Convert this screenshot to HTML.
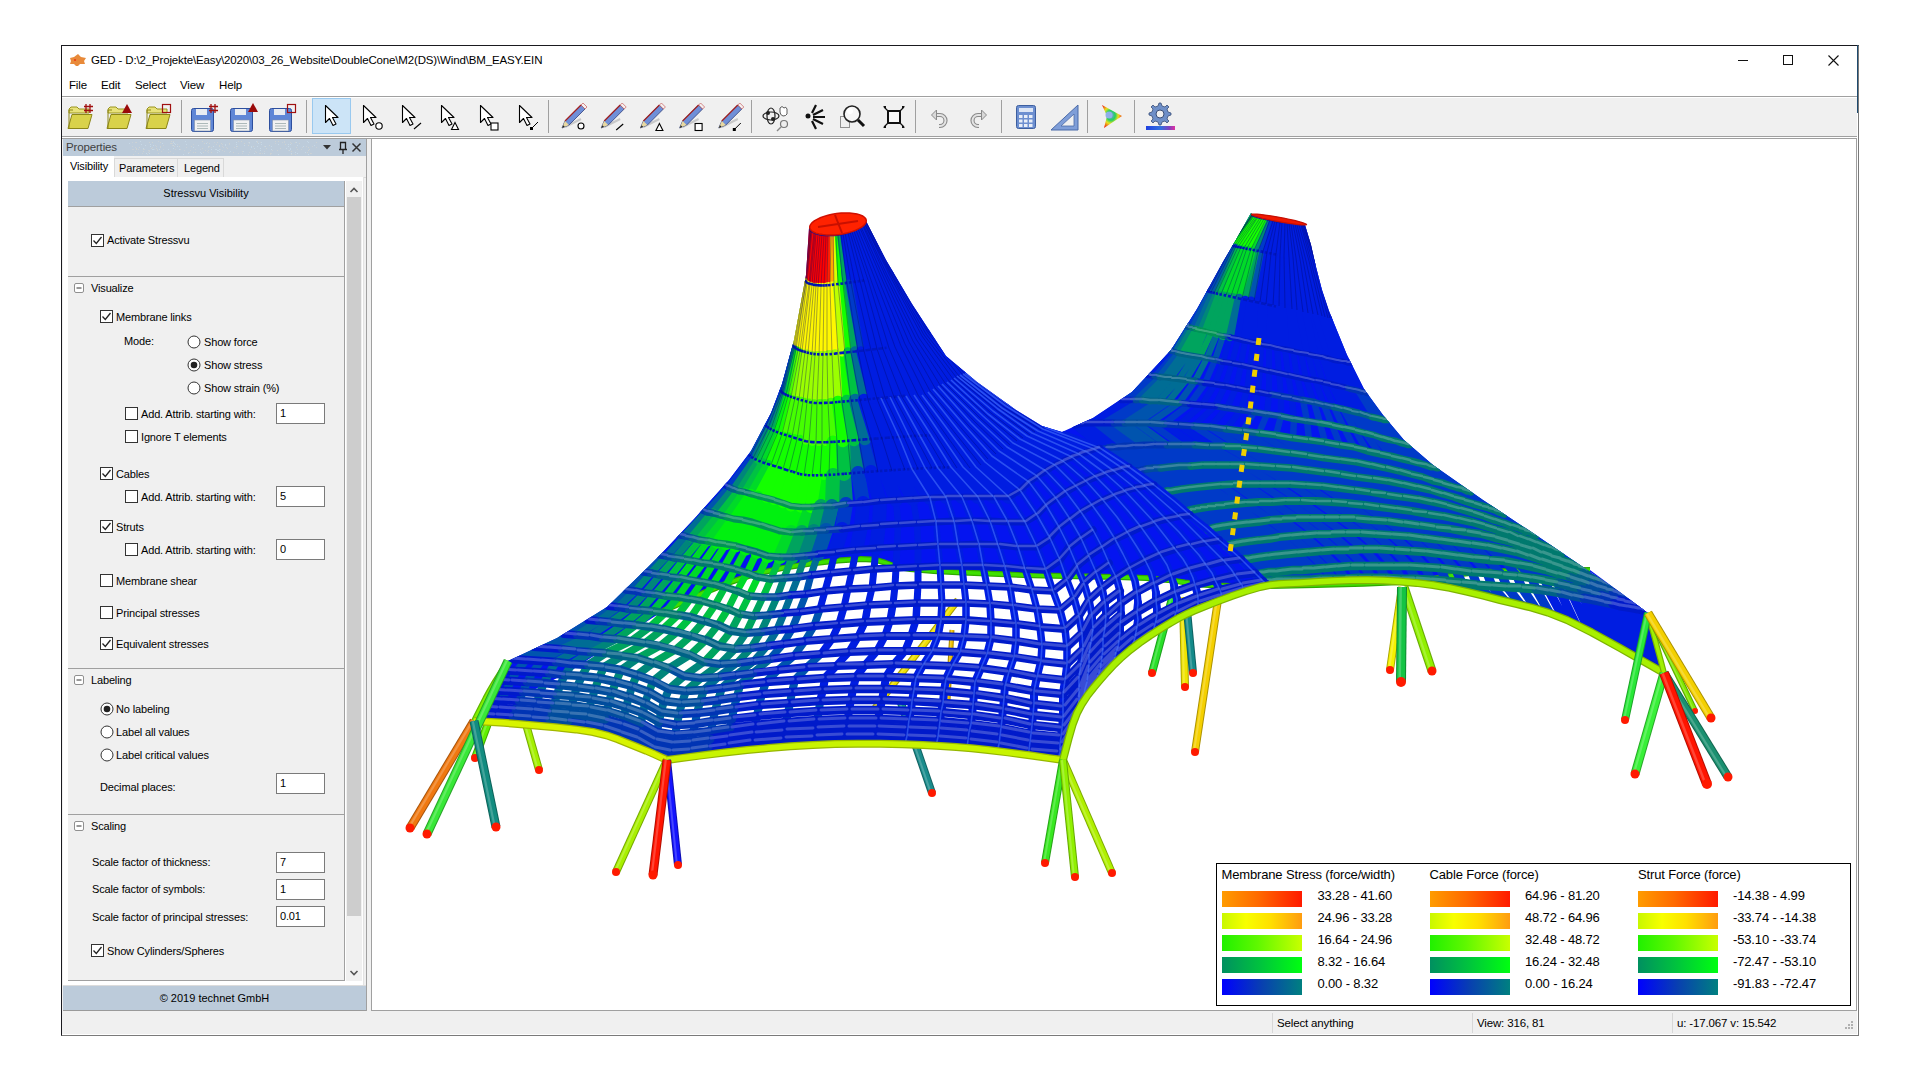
<!DOCTYPE html>
<html><head><meta charset="utf-8"><style>
html,body{margin:0;padding:0;width:1920px;height:1080px;overflow:hidden;background:#fff;font-family:"Liberation Sans",sans-serif;}
div{box-sizing:content-box}
</style></head><body>
<div style="position:relative;width:1920px;height:1080px;overflow:hidden">
<div style="position:absolute;left:61px;top:45px;width:1796px;height:989px;background:#fff;border:1px solid #1a1a1f;border-right-color:#7a7a7a;border-bottom-color:#7a7a7a"></div><div style="position:absolute;left:1857px;top:45px;width:1px;height:68px;background:#1e4a6e"></div><svg style="position:absolute;left:69px;top:53px" width="18" height="13"><path d="M1,5 l4,-1 l4,-3 l3,3 l5,1 l-2,3 l1,3 l-5,0 l-3,3 l-3,-3 l-4,0 l1,-3z" fill="#e88a3a"/><circle cx="6" cy="7" r="1" fill="#f03010"/></svg><div style="position:absolute;left:91px;top:53.2px;height:15.5px;line-height:15.5px;font-size:11.5px;color:#000;white-space:nowrap;letter-spacing:-0.15px;">GED - D:\2_Projekte\Easy\2020\03_26_Website\DoubleCone\M2(DS)\Wind\BM_EASY.EIN</div><svg style="position:absolute;left:1730px;top:50px" width="120" height="22"><path d="M8,10.5 h10" stroke="#111" stroke-width="1"/><rect x="53.5" y="5.5" width="9" height="9" fill="none" stroke="#111"/><path d="M98.5,5.5 l10,10 M108.5,5.5 l-10,10" stroke="#111" stroke-width="1.1"/></svg><div style="position:absolute;left:69px;top:78.2px;height:15.5px;line-height:15.5px;font-size:11.5px;color:#000;white-space:nowrap;letter-spacing:-0.15px;">File</div><div style="position:absolute;left:101px;top:78.2px;height:15.5px;line-height:15.5px;font-size:11.5px;color:#000;white-space:nowrap;letter-spacing:-0.15px;">Edit</div><div style="position:absolute;left:135px;top:78.2px;height:15.5px;line-height:15.5px;font-size:11.5px;color:#000;white-space:nowrap;letter-spacing:-0.15px;">Select</div><div style="position:absolute;left:180px;top:78.2px;height:15.5px;line-height:15.5px;font-size:11.5px;color:#000;white-space:nowrap;letter-spacing:-0.15px;">View</div><div style="position:absolute;left:219px;top:78.2px;height:15.5px;line-height:15.5px;font-size:11.5px;color:#000;white-space:nowrap;letter-spacing:-0.15px;">Help</div><div style="position:absolute;left:62px;top:96px;width:1795px;height:1px;background:#a0a0a0"></div><div style="position:absolute;left:62px;top:97px;width:1795px;height:1px;background:#fff"></div><div style="position:absolute;left:62px;top:98px;width:1795px;height:38px;background:#f0f0f0"></div><div style="position:absolute;left:62px;top:136px;width:1795px;height:1px;background:#a0a0a0"></div><div style="position:absolute;left:62px;top:138px;width:1795px;height:1px;background:#a0a0a0"></div><svg style="position:absolute;left:0;top:0" width="1200" height="140"><g transform="translate(68,0)"><path d="M1,109 l2,-2 h6 l2,2 h10 v4 h-20z" fill="#e8e27a" stroke="#9a9420" stroke-width="1"/><path d="M0,128.5 l4,-14 h20 l-4,14z" fill="#d9d24a" stroke="#8c8618" stroke-width="1"/><path d="M1,128 v-18 h4" fill="none" stroke="#8c8618" stroke-width="1"/><path d="M18,104 v9 M22,104 v9 M16,106.5 h9 M16,110.5 h9" stroke="#a01010" stroke-width="1.3" fill="none"/></g><g transform="translate(107,0)"><path d="M1,109 l2,-2 h6 l2,2 h10 v4 h-20z" fill="#e8e27a" stroke="#9a9420" stroke-width="1"/><path d="M0,128.5 l4,-14 h20 l-4,14z" fill="#d9d24a" stroke="#8c8618" stroke-width="1"/><path d="M1,128 v-18 h4" fill="none" stroke="#8c8618" stroke-width="1"/><path d="M15,113 l5,-9 l5,9z" fill="#9a0a0a"/></g><g transform="translate(146,0)"><path d="M1,109 l2,-2 h6 l2,2 h10 v4 h-20z" fill="#e8e27a" stroke="#9a9420" stroke-width="1"/><path d="M0,128.5 l4,-14 h20 l-4,14z" fill="#d9d24a" stroke="#8c8618" stroke-width="1"/><path d="M1,128 v-18 h4" fill="none" stroke="#8c8618" stroke-width="1"/><rect x="16.5" y="104.5" width="8" height="8" fill="none" stroke="#a01010" stroke-width="1.2"/></g><g transform="translate(191,0)"><rect x="0.5" y="108.5" width="22" height="23" rx="2" fill="#5f86d6" stroke="#2d4f9e"/><rect x="5" y="109" width="11" height="6" fill="#e8ecf2"/><rect x="3.5" y="120" width="16" height="11" fill="#f2f2f2" stroke="#8090a8" stroke-width="0.6"/><path d="M6,123.5 h11 M6,126 h11 M6,128.5 h11" stroke="#9aa" stroke-width="0.8"/><path d="M20,104 v9 M24,104 v9 M18,106.5 h9 M18,110.5 h9" stroke="#a01010" stroke-width="1.3" fill="none"/></g><g transform="translate(230,0)"><rect x="0.5" y="108.5" width="22" height="23" rx="2" fill="#5f86d6" stroke="#2d4f9e"/><rect x="5" y="109" width="11" height="6" fill="#e8ecf2"/><rect x="3.5" y="120" width="16" height="11" fill="#f2f2f2" stroke="#8090a8" stroke-width="0.6"/><path d="M6,123.5 h11 M6,126 h11 M6,128.5 h11" stroke="#9aa" stroke-width="0.8"/><path d="M18,112 l5,-9 l5,9z" fill="#9a0a0a"/></g><g transform="translate(269,0)"><rect x="0.5" y="108.5" width="22" height="23" rx="2" fill="#5f86d6" stroke="#2d4f9e"/><rect x="5" y="109" width="11" height="6" fill="#e8ecf2"/><rect x="3.5" y="120" width="16" height="11" fill="#f2f2f2" stroke="#8090a8" stroke-width="0.6"/><path d="M6,123.5 h11 M6,126 h11 M6,128.5 h11" stroke="#9aa" stroke-width="0.8"/><rect x="18.5" y="104.5" width="8" height="8" fill="none" stroke="#a01010" stroke-width="1.2"/></g><line x1="181.5" y1="100" x2="181.5" y2="133" stroke="#a0a0a0" stroke-width="1"/><line x1="306.5" y1="100" x2="306.5" y2="133" stroke="#a0a0a0" stroke-width="1"/><line x1="548.5" y1="100" x2="548.5" y2="133" stroke="#a0a0a0" stroke-width="1"/><line x1="751.5" y1="100" x2="751.5" y2="133" stroke="#a0a0a0" stroke-width="1"/><line x1="915.5" y1="100" x2="915.5" y2="133" stroke="#a0a0a0" stroke-width="1"/><line x1="1001.5" y1="100" x2="1001.5" y2="133" stroke="#a0a0a0" stroke-width="1"/><line x1="1087.5" y1="100" x2="1087.5" y2="133" stroke="#a0a0a0" stroke-width="1"/><line x1="1134.5" y1="100" x2="1134.5" y2="133" stroke="#a0a0a0" stroke-width="1"/><rect x="312.5" y="98.5" width="38" height="35" fill="#cce4f7" stroke="#99c9ef"/><g transform="translate(325,105)"><path d="M0.5,0.5 v17 l4,-4 l3.5,7 l3,-1.5 l-3.5,-6.5 h5.5z" fill="#fff" stroke="#000" stroke-width="1.1" stroke-linejoin="round"/></g><g transform="translate(363,105)"><path d="M0.5,0.5 v17 l4,-4 l3.5,7 l3,-1.5 l-3.5,-6.5 h5.5z" fill="#fff" stroke="#000" stroke-width="1.1" stroke-linejoin="round"/><circle cx="16" cy="21" r="3.2" fill="#fff" stroke="#000" stroke-width="1.1"/></g><g transform="translate(402,105)"><path d="M0.5,0.5 v17 l4,-4 l3.5,7 l3,-1.5 l-3.5,-6.5 h5.5z" fill="#fff" stroke="#000" stroke-width="1.1" stroke-linejoin="round"/><path d="M12,24 l7,-6" stroke="#000" stroke-width="1.1"/></g><g transform="translate(441,105)"><path d="M0.5,0.5 v17 l4,-4 l3.5,7 l3,-1.5 l-3.5,-6.5 h5.5z" fill="#fff" stroke="#000" stroke-width="1.1" stroke-linejoin="round"/><path d="M10.5,24.5 l3.5,-7 l3.5,7z" fill="#fff" stroke="#000" stroke-width="1.1"/></g><g transform="translate(480,105)"><path d="M0.5,0.5 v17 l4,-4 l3.5,7 l3,-1.5 l-3.5,-6.5 h5.5z" fill="#fff" stroke="#000" stroke-width="1.1" stroke-linejoin="round"/><rect x="11" y="18" width="7" height="7" fill="#fff" stroke="#000" stroke-width="1.1"/></g><g transform="translate(519,105)"><path d="M0.5,0.5 v17 l4,-4 l3.5,7 l3,-1.5 l-3.5,-6.5 h5.5z" fill="#fff" stroke="#000" stroke-width="1.1" stroke-linejoin="round"/><path d="M13,23 l6,-6" stroke="#000" stroke-width="1"/><rect x="11" y="22" width="3" height="3" fill="#000"/></g><g transform="translate(562.0,0)"><path d="M3,127 l16,-8" stroke="#c8c8c8" stroke-width="2"/><path d="M0,128 l3,-7 l16,-16 l4,4 l-16,16z" fill="#6f8fd8" stroke="#30407a" stroke-width="0.8"/><path d="M3,121 l16,-16" stroke="#a02020" stroke-width="1.2"/><path d="M0,128 l3,-7 l4,4z" fill="#e8d8a0"/><path d="M0,128 l1.2,-2.8 l1.6,1.6z" fill="#222"/><path d="M19,105 l2,-2 l4,4 l-2,2z" fill="#f4f0f0" stroke="#c04040" stroke-width="0.6"/><circle cx="19" cy="126" r="3" fill="#fff" stroke="#000" stroke-width="1.1"/></g><g transform="translate(601.2,0)"><path d="M3,127 l16,-8" stroke="#c8c8c8" stroke-width="2"/><path d="M0,128 l3,-7 l16,-16 l4,4 l-16,16z" fill="#6f8fd8" stroke="#30407a" stroke-width="0.8"/><path d="M3,121 l16,-16" stroke="#a02020" stroke-width="1.2"/><path d="M0,128 l3,-7 l4,4z" fill="#e8d8a0"/><path d="M0,128 l1.2,-2.8 l1.6,1.6z" fill="#222"/><path d="M19,105 l2,-2 l4,4 l-2,2z" fill="#f4f0f0" stroke="#c04040" stroke-width="0.6"/><path d="M15,130 l7,-6" stroke="#000" stroke-width="1.1"/></g><g transform="translate(640.4,0)"><path d="M3,127 l16,-8" stroke="#c8c8c8" stroke-width="2"/><path d="M0,128 l3,-7 l16,-16 l4,4 l-16,16z" fill="#6f8fd8" stroke="#30407a" stroke-width="0.8"/><path d="M3,121 l16,-16" stroke="#a02020" stroke-width="1.2"/><path d="M0,128 l3,-7 l4,4z" fill="#e8d8a0"/><path d="M0,128 l1.2,-2.8 l1.6,1.6z" fill="#222"/><path d="M19,105 l2,-2 l4,4 l-2,2z" fill="#f4f0f0" stroke="#c04040" stroke-width="0.6"/><path d="M15.5,130.5 l3.5,-7 l3.5,7z" fill="#fff" stroke="#000" stroke-width="1.1"/></g><g transform="translate(679.6,0)"><path d="M3,127 l16,-8" stroke="#c8c8c8" stroke-width="2"/><path d="M0,128 l3,-7 l16,-16 l4,4 l-16,16z" fill="#6f8fd8" stroke="#30407a" stroke-width="0.8"/><path d="M3,121 l16,-16" stroke="#a02020" stroke-width="1.2"/><path d="M0,128 l3,-7 l4,4z" fill="#e8d8a0"/><path d="M0,128 l1.2,-2.8 l1.6,1.6z" fill="#222"/><path d="M19,105 l2,-2 l4,4 l-2,2z" fill="#f4f0f0" stroke="#c04040" stroke-width="0.6"/><rect x="15.5" y="123.5" width="7" height="7" fill="#fff" stroke="#000" stroke-width="1.1"/></g><g transform="translate(718.8,0)"><path d="M3,127 l16,-8" stroke="#c8c8c8" stroke-width="2"/><path d="M0,128 l3,-7 l16,-16 l4,4 l-16,16z" fill="#6f8fd8" stroke="#30407a" stroke-width="0.8"/><path d="M3,121 l16,-16" stroke="#a02020" stroke-width="1.2"/><path d="M0,128 l3,-7 l4,4z" fill="#e8d8a0"/><path d="M0,128 l1.2,-2.8 l1.6,1.6z" fill="#222"/><path d="M19,105 l2,-2 l4,4 l-2,2z" fill="#f4f0f0" stroke="#c04040" stroke-width="0.6"/><path d="M16,129 l6,-6" stroke="#000" stroke-width="1"/><rect x="14" y="128" width="3" height="3" fill="#000"/></g><g transform="translate(762,104)"><ellipse cx="9" cy="12" rx="8" ry="4" fill="none" stroke="#222" stroke-width="1.2"/><ellipse cx="9" cy="12" rx="4" ry="8" fill="none" stroke="#222" stroke-width="1.2"/><circle cx="6" cy="9" r="2" fill="#222"/><circle cx="11" cy="15" r="2" fill="#222"/><circle cx="22" cy="20" r="3.5" fill="#eee" stroke="#777" stroke-width="1.2"/><path d="M19,23 l-4,4" stroke="#888" stroke-width="1.5"/><path d="M18,4 q2,-3 4,0 q2,-2 3,1 v5 q-1,2 -4,2 q-3,-1 -3,-4z" fill="#fff" stroke="#333" stroke-width="0.8"/></g><g transform="translate(805,104)"><circle cx="3" cy="12" r="2.5" fill="#111"/><path d="M7,9 l4,-8 M8,11 l10,-5 M8,13 h12 M8,15 l10,5 M7,17 l4,8" stroke="#111" stroke-width="2.2"/></g><g transform="translate(840,104)"><rect x="0.5" y="12.5" width="9" height="11" fill="none" stroke="#333" stroke-dasharray="1,1"/><circle cx="12" cy="10" r="8" fill="#f6f6f6" stroke="#222" stroke-width="1.6"/><circle cx="10" cy="7" r="3" fill="#fff"/><path d="M18,16 l6,6" stroke="#111" stroke-width="3"/></g><g transform="translate(883,106)"><rect x="5" y="5" width="12" height="12" fill="#f8f8f8" stroke="#111" stroke-width="2"/><path d="M1,1 l4,4 M21,1 l-4,4 M1,21 l4,-4 M21,21 l-4,-4" stroke="#111" stroke-width="1.2"/><path d="M0,0 h3 v3z M22,0 h-3 v3z M0,22 h3 v-3z M22,22 h-3 v-3z" fill="#111"/></g><g transform="translate(931,109)"><path d="M3,6 h6 a5.5,5.5 0 1 1 0,11 h-1" fill="none" stroke="#8a8a8a" stroke-width="4.2"/><path d="M3,6 h6 a5.5,5.5 0 1 1 0,11 h-1" fill="none" stroke="#e4e4e4" stroke-width="2"/><path d="M0.5,6 l5,-5 v10z" fill="#d8d8d8" stroke="#8a8a8a" stroke-width="1"/></g><g transform="translate(970,109)"><path d="M14,6 h-6 a5.5,5.5 0 1 0 0,11 h1" fill="none" stroke="#8a8a8a" stroke-width="4.2"/><path d="M14,6 h-6 a5.5,5.5 0 1 0 0,11 h1" fill="none" stroke="#e4e4e4" stroke-width="2"/><path d="M16.5,6 l-5,-5 v10z" fill="#d8d8d8" stroke="#8a8a8a" stroke-width="1"/></g><g transform="translate(1016,105)"><rect x="0.5" y="0.5" width="19" height="23" rx="2" fill="#6d8fd0" stroke="#3d5fa0"/><rect x="3" y="3" width="14" height="4" fill="#dde6f5"/><rect x="3" y="10.0" width="3.5" height="3" fill="#e8eef8"/><rect x="8" y="10.0" width="3.5" height="3" fill="#e8eef8"/><rect x="13" y="10.0" width="3.5" height="3" fill="#e8eef8"/><rect x="3" y="14.5" width="3.5" height="3" fill="#e8eef8"/><rect x="8" y="14.5" width="3.5" height="3" fill="#e8eef8"/><rect x="13" y="14.5" width="3.5" height="3" fill="#e8eef8"/><rect x="3" y="19.0" width="3.5" height="3" fill="#e8eef8"/><rect x="8" y="19.0" width="3.5" height="3" fill="#e8eef8"/><rect x="13" y="19.0" width="3.5" height="3" fill="#e8eef8"/></g><g transform="translate(1050,104)"><path d="M1,26 L28,1 V26z" fill="#7f9ed8" stroke="#4a6aa8" stroke-width="1"/><path d="M11,22 L24,10 V22z" fill="#f0f0f0" stroke="#4a6aa8" stroke-width="0.8"/></g><defs><radialGradient id="sv" cx="0.45" cy="0.45" r="0.6"><stop offset="0" stop-color="#7aa0e8"/><stop offset="0.35" stop-color="#20d060"/><stop offset="0.6" stop-color="#e8e020"/><stop offset="1" stop-color="#f02010"/></radialGradient></defs><g transform="translate(1101,104)"><path d="M1,1 L21,12 L3,24 L6,12z" fill="url(#sv)"/><circle cx="8" cy="11" r="3.5" fill="#8fb0e8"/></g><g transform="translate(1144,101)"><path d="M15,2 l2,0 l1,3 l3,1 l2,-2 l2,2 l-2,2 l1,3 l3,1 v2 l-3,1 l-1,3 l2,2 l-2,2 l-2,-2 l-3,1 l-1,3 h-2 l-1,-3 l-3,-1 l-2,2 l-2,-2 l2,-2 l-1,-3 l-3,-1 v-2 l3,-1 l1,-3 l-2,-2 l2,-2 l2,2 l3,-1z" fill="#6e8fc8" stroke="#3a4f78" stroke-width="0.8"/><circle cx="16" cy="13" r="4" fill="#f0f0f0" stroke="#3a4f78"/><defs><linearGradient id="gb"><stop offset="0" stop-color="#2040e0"/><stop offset="0.5" stop-color="#3070e0"/><stop offset="0.8" stop-color="#8040c0"/><stop offset="1" stop-color="#e030a0"/></linearGradient></defs><rect x="2" y="25" width="29" height="4" fill="url(#gb)"/></g></svg><div style="position:absolute;left:62px;top:139px;width:1795px;height:872px;background:#f0f0f0"></div><div style="position:absolute;left:371px;top:139px;width:1484px;height:871px;background:#fff;border:1px solid #a0a0a0;border-top:none"></div><div style="position:absolute;left:62px;top:1011px;width:1795px;height:23px;background:#f0f0f0"></div><div style="position:absolute;left:1272px;top:1013px;width:1px;height:20px;background:#d7d7d7"></div><div style="position:absolute;left:1472px;top:1013px;width:1px;height:20px;background:#d7d7d7"></div><div style="position:absolute;left:1672px;top:1013px;width:1px;height:20px;background:#d7d7d7"></div><div style="position:absolute;left:1277px;top:1016.2px;height:15.5px;line-height:15.5px;font-size:11.5px;color:#000;white-space:nowrap;letter-spacing:-0.15px;">Select anything</div><div style="position:absolute;left:1477px;top:1016.2px;height:15.5px;line-height:15.5px;font-size:11.5px;color:#000;white-space:nowrap;letter-spacing:-0.15px;">View: 316, 81</div><div style="position:absolute;left:1677px;top:1016.2px;height:15.5px;line-height:15.5px;font-size:11.5px;color:#000;white-space:nowrap;letter-spacing:-0.15px;">u: -17.067 v: 15.542</div><svg style="position:absolute;left:1843px;top:1020px" width="12" height="12"><g fill="#b0b0b0"><rect x="8" y="1" width="2" height="2"/><rect x="5" y="4" width="2" height="2"/><rect x="8" y="4" width="2" height="2"/><rect x="2" y="7" width="2" height="2"/><rect x="5" y="7" width="2" height="2"/><rect x="8" y="7" width="2" height="2"/></g></svg>
<div style="position:absolute;left:63px;top:139px;width:303px;height:17px;background:#bccbda"></div><svg style="position:absolute;left:0;top:0" width="400" height="200"><rect x="173" y="148" width="1" height="1" fill="#c6d8e6"/><rect x="302" y="147" width="1" height="1" fill="#c9d0d6"/><rect x="140" y="141" width="1" height="1" fill="#c6d8e6"/><rect x="177" y="144" width="1" height="1" fill="#c9d0d6"/><rect x="217" y="152" width="1" height="1" fill="#c6d8e6"/><rect x="203" y="152" width="1" height="1" fill="#cdd2d2"/><rect x="249" y="152" width="1" height="1" fill="#c9d0d6"/><rect x="202" y="141" width="1" height="1" fill="#cdd2d2"/><rect x="158" y="153" width="1" height="1" fill="#cdd2d2"/><rect x="185" y="141" width="1" height="1" fill="#c6d8e6"/><rect x="218" y="150" width="1" height="1" fill="#c6d8e6"/><rect x="264" y="153" width="1" height="1" fill="#c6d8e6"/><rect x="266" y="148" width="1" height="1" fill="#cdd2d2"/><rect x="295" y="142" width="1" height="1" fill="#cdd2d2"/><rect x="222" y="144" width="1" height="1" fill="#c9d0d6"/><rect x="211" y="149" width="1" height="1" fill="#c6d8e6"/><rect x="208" y="152" width="1" height="1" fill="#c9d0d6"/><rect x="195" y="149" width="1" height="1" fill="#c9d0d6"/><rect x="172" y="145" width="1" height="1" fill="#cdd2d2"/><rect x="291" y="154" width="1" height="1" fill="#c9d0d6"/><rect x="260" y="150" width="1" height="1" fill="#c6d8e6"/><rect x="311" y="153" width="1" height="1" fill="#c9d0d6"/><rect x="148" y="150" width="1" height="1" fill="#c9d0d6"/><rect x="286" y="148" width="1" height="1" fill="#c6d8e6"/><rect x="152" y="147" width="1" height="1" fill="#c9d0d6"/><rect x="316" y="142" width="1" height="1" fill="#cdd2d2"/><rect x="206" y="143" width="1" height="1" fill="#c6d8e6"/><rect x="209" y="146" width="1" height="1" fill="#cdd2d2"/><rect x="136" y="149" width="1" height="1" fill="#cdd2d2"/><rect x="200" y="149" width="1" height="1" fill="#c9d0d6"/><rect x="295" y="154" width="1" height="1" fill="#c9d0d6"/><rect x="173" y="141" width="1" height="1" fill="#cdd2d2"/><rect x="143" y="149" width="1" height="1" fill="#cdd2d2"/><rect x="308" y="154" width="1" height="1" fill="#c6d8e6"/><rect x="244" y="143" width="1" height="1" fill="#cdd2d2"/><rect x="314" y="145" width="1" height="1" fill="#c6d8e6"/><rect x="310" y="153" width="1" height="1" fill="#c6d8e6"/><rect x="200" y="152" width="1" height="1" fill="#c6d8e6"/><rect x="250" y="149" width="1" height="1" fill="#c9d0d6"/><rect x="147" y="154" width="1" height="1" fill="#c9d0d6"/><rect x="180" y="149" width="1" height="1" fill="#c9d0d6"/><rect x="173" y="145" width="1" height="1" fill="#c6d8e6"/><rect x="227" y="148" width="1" height="1" fill="#cdd2d2"/><rect x="278" y="154" width="1" height="1" fill="#c6d8e6"/><rect x="132" y="149" width="1" height="1" fill="#c9d0d6"/><rect x="153" y="149" width="1" height="1" fill="#c6d8e6"/><rect x="217" y="150" width="1" height="1" fill="#c6d8e6"/><rect x="244" y="145" width="1" height="1" fill="#c6d8e6"/><rect x="132" y="142" width="1" height="1" fill="#c9d0d6"/><rect x="132" y="146" width="1" height="1" fill="#c9d0d6"/><rect x="215" y="149" width="1" height="1" fill="#c6d8e6"/><rect x="162" y="143" width="1" height="1" fill="#c6d8e6"/><rect x="288" y="144" width="1" height="1" fill="#c6d8e6"/><rect x="148" y="152" width="1" height="1" fill="#c9d0d6"/><rect x="258" y="143" width="1" height="1" fill="#c9d0d6"/><rect x="170" y="151" width="1" height="1" fill="#cdd2d2"/><rect x="190" y="150" width="1" height="1" fill="#c9d0d6"/><rect x="261" y="142" width="1" height="1" fill="#c6d8e6"/><rect x="308" y="150" width="1" height="1" fill="#cdd2d2"/><rect x="211" y="152" width="1" height="1" fill="#cdd2d2"/><rect x="143" y="151" width="1" height="1" fill="#cdd2d2"/><rect x="296" y="147" width="1" height="1" fill="#cdd2d2"/><rect x="278" y="141" width="1" height="1" fill="#cdd2d2"/><rect x="188" y="152" width="1" height="1" fill="#c9d0d6"/><rect x="163" y="145" width="1" height="1" fill="#c9d0d6"/><rect x="144" y="149" width="1" height="1" fill="#c9d0d6"/><rect x="153" y="145" width="1" height="1" fill="#c6d8e6"/><rect x="216" y="149" width="1" height="1" fill="#c6d8e6"/><rect x="208" y="146" width="1" height="1" fill="#c6d8e6"/><rect x="158" y="141" width="1" height="1" fill="#c9d0d6"/><rect x="316" y="147" width="1" height="1" fill="#c9d0d6"/><rect x="170" y="151" width="1" height="1" fill="#c9d0d6"/><rect x="270" y="154" width="1" height="1" fill="#c9d0d6"/><rect x="193" y="144" width="1" height="1" fill="#cdd2d2"/><rect x="291" y="154" width="1" height="1" fill="#cdd2d2"/><rect x="282" y="142" width="1" height="1" fill="#c9d0d6"/><rect x="225" y="144" width="1" height="1" fill="#c6d8e6"/><rect x="238" y="141" width="1" height="1" fill="#c9d0d6"/><rect x="151" y="148" width="1" height="1" fill="#cdd2d2"/><rect x="254" y="148" width="1" height="1" fill="#c6d8e6"/><rect x="138" y="153" width="1" height="1" fill="#cdd2d2"/><rect x="193" y="144" width="1" height="1" fill="#c9d0d6"/><rect x="219" y="151" width="1" height="1" fill="#c6d8e6"/><rect x="170" y="143" width="1" height="1" fill="#cdd2d2"/><rect x="161" y="151" width="1" height="1" fill="#cdd2d2"/><rect x="284" y="141" width="1" height="1" fill="#c9d0d6"/><rect x="236" y="146" width="1" height="1" fill="#c6d8e6"/><rect x="175" y="149" width="1" height="1" fill="#c9d0d6"/><rect x="208" y="147" width="1" height="1" fill="#cdd2d2"/><rect x="291" y="151" width="1" height="1" fill="#cdd2d2"/><rect x="152" y="142" width="1" height="1" fill="#cdd2d2"/><rect x="290" y="142" width="1" height="1" fill="#c9d0d6"/><rect x="221" y="143" width="1" height="1" fill="#cdd2d2"/><rect x="195" y="149" width="1" height="1" fill="#c9d0d6"/><rect x="186" y="144" width="1" height="1" fill="#c6d8e6"/><rect x="209" y="143" width="1" height="1" fill="#cdd2d2"/><rect x="264" y="146" width="1" height="1" fill="#cdd2d2"/><rect x="236" y="142" width="1" height="1" fill="#c6d8e6"/><rect x="243" y="151" width="1" height="1" fill="#c6d8e6"/><rect x="249" y="142" width="1" height="1" fill="#c6d8e6"/><rect x="138" y="149" width="1" height="1" fill="#c9d0d6"/><rect x="188" y="153" width="1" height="1" fill="#c6d8e6"/><rect x="216" y="144" width="1" height="1" fill="#c9d0d6"/><rect x="179" y="149" width="1" height="1" fill="#c6d8e6"/><rect x="171" y="143" width="1" height="1" fill="#cdd2d2"/><rect x="306" y="146" width="1" height="1" fill="#c9d0d6"/><rect x="278" y="144" width="1" height="1" fill="#c6d8e6"/><rect x="259" y="153" width="1" height="1" fill="#c9d0d6"/><rect x="254" y="153" width="1" height="1" fill="#c6d8e6"/><rect x="255" y="151" width="1" height="1" fill="#c9d0d6"/><rect x="229" y="152" width="1" height="1" fill="#c9d0d6"/><rect x="129" y="143" width="1" height="1" fill="#c6d8e6"/><rect x="136" y="142" width="1" height="1" fill="#cdd2d2"/><rect x="253" y="146" width="1" height="1" fill="#cdd2d2"/><rect x="193" y="152" width="1" height="1" fill="#cdd2d2"/><rect x="288" y="150" width="1" height="1" fill="#c9d0d6"/><rect x="309" y="149" width="1" height="1" fill="#cdd2d2"/><rect x="135" y="151" width="1" height="1" fill="#c9d0d6"/><rect x="229" y="144" width="1" height="1" fill="#c9d0d6"/><rect x="270" y="153" width="1" height="1" fill="#cdd2d2"/><rect x="233" y="152" width="1" height="1" fill="#cdd2d2"/><rect x="285" y="144" width="1" height="1" fill="#cdd2d2"/><rect x="251" y="147" width="1" height="1" fill="#c9d0d6"/><rect x="271" y="146" width="1" height="1" fill="#c6d8e6"/><rect x="242" y="153" width="1" height="1" fill="#c9d0d6"/><rect x="207" y="142" width="1" height="1" fill="#c9d0d6"/><rect x="173" y="153" width="1" height="1" fill="#c9d0d6"/><rect x="312" y="146" width="1" height="1" fill="#c9d0d6"/><rect x="272" y="150" width="1" height="1" fill="#c9d0d6"/><rect x="258" y="143" width="1" height="1" fill="#c6d8e6"/><rect x="299" y="143" width="1" height="1" fill="#cdd2d2"/><rect x="223" y="147" width="1" height="1" fill="#c9d0d6"/><rect x="226" y="147" width="1" height="1" fill="#c9d0d6"/><rect x="291" y="143" width="1" height="1" fill="#cdd2d2"/><rect x="156" y="148" width="1" height="1" fill="#cdd2d2"/><rect x="290" y="148" width="1" height="1" fill="#c6d8e6"/><rect x="256" y="152" width="1" height="1" fill="#c9d0d6"/><rect x="290" y="149" width="1" height="1" fill="#c6d8e6"/><rect x="297" y="145" width="1" height="1" fill="#c6d8e6"/><rect x="219" y="146" width="1" height="1" fill="#cdd2d2"/><rect x="236" y="144" width="1" height="1" fill="#c6d8e6"/><rect x="275" y="143" width="1" height="1" fill="#c9d0d6"/><rect x="219" y="149" width="1" height="1" fill="#c6d8e6"/><rect x="238" y="153" width="1" height="1" fill="#c9d0d6"/><rect x="234" y="147" width="1" height="1" fill="#c9d0d6"/><rect x="142" y="153" width="1" height="1" fill="#c9d0d6"/><rect x="296" y="142" width="1" height="1" fill="#cdd2d2"/><rect x="297" y="149" width="1" height="1" fill="#c9d0d6"/><rect x="141" y="144" width="1" height="1" fill="#c6d8e6"/><rect x="174" y="143" width="1" height="1" fill="#c6d8e6"/><rect x="154" y="149" width="1" height="1" fill="#c9d0d6"/><rect x="291" y="153" width="1" height="1" fill="#c6d8e6"/><rect x="160" y="142" width="1" height="1" fill="#cdd2d2"/><rect x="208" y="150" width="1" height="1" fill="#cdd2d2"/><rect x="150" y="144" width="1" height="1" fill="#c6d8e6"/><rect x="135" y="147" width="1" height="1" fill="#c9d0d6"/><rect x="256" y="141" width="1" height="1" fill="#c6d8e6"/><rect x="191" y="146" width="1" height="1" fill="#cdd2d2"/><rect x="168" y="149" width="1" height="1" fill="#c6d8e6"/><rect x="202" y="148" width="1" height="1" fill="#cdd2d2"/><rect x="296" y="142" width="1" height="1" fill="#c6d8e6"/><rect x="149" y="153" width="1" height="1" fill="#c6d8e6"/><rect x="146" y="153" width="1" height="1" fill="#c6d8e6"/><rect x="257" y="146" width="1" height="1" fill="#c6d8e6"/><rect x="184" y="150" width="1" height="1" fill="#c9d0d6"/><rect x="307" y="152" width="1" height="1" fill="#cdd2d2"/><rect x="271" y="153" width="1" height="1" fill="#c9d0d6"/><rect x="236" y="148" width="1" height="1" fill="#c9d0d6"/><rect x="222" y="146" width="1" height="1" fill="#c9d0d6"/><rect x="184" y="150" width="1" height="1" fill="#c9d0d6"/><rect x="163" y="149" width="1" height="1" fill="#c9d0d6"/><rect x="156" y="146" width="1" height="1" fill="#c9d0d6"/><rect x="214" y="142" width="1" height="1" fill="#c9d0d6"/><rect x="155" y="145" width="1" height="1" fill="#c9d0d6"/><rect x="251" y="146" width="1" height="1" fill="#c6d8e6"/><rect x="251" y="147" width="1" height="1" fill="#c6d8e6"/><rect x="277" y="150" width="1" height="1" fill="#cdd2d2"/><rect x="264" y="151" width="1" height="1" fill="#c9d0d6"/><rect x="237" y="146" width="1" height="1" fill="#cdd2d2"/><rect x="179" y="146" width="1" height="1" fill="#cdd2d2"/><rect x="136" y="148" width="1" height="1" fill="#cdd2d2"/><rect x="260" y="148" width="1" height="1" fill="#c6d8e6"/><rect x="308" y="147" width="1" height="1" fill="#cdd2d2"/><rect x="195" y="152" width="1" height="1" fill="#cdd2d2"/><rect x="157" y="149" width="1" height="1" fill="#c9d0d6"/><rect x="149" y="151" width="1" height="1" fill="#c9d0d6"/><rect x="149" y="150" width="1" height="1" fill="#c9d0d6"/><rect x="207" y="151" width="1" height="1" fill="#c9d0d6"/><rect x="152" y="149" width="1" height="1" fill="#c6d8e6"/><rect x="280" y="148" width="1" height="1" fill="#cdd2d2"/><rect x="236" y="144" width="1" height="1" fill="#c6d8e6"/><rect x="198" y="145" width="1" height="1" fill="#c6d8e6"/><rect x="297" y="153" width="1" height="1" fill="#c6d8e6"/><rect x="188" y="153" width="1" height="1" fill="#c6d8e6"/><rect x="248" y="154" width="1" height="1" fill="#c9d0d6"/><rect x="262" y="153" width="1" height="1" fill="#c9d0d6"/><rect x="220" y="149" width="1" height="1" fill="#c9d0d6"/><rect x="248" y="142" width="1" height="1" fill="#c9d0d6"/><rect x="172" y="143" width="1" height="1" fill="#c9d0d6"/><rect x="216" y="144" width="1" height="1" fill="#c9d0d6"/><rect x="168" y="152" width="1" height="1" fill="#c9d0d6"/><rect x="308" y="142" width="1" height="1" fill="#c6d8e6"/><rect x="310" y="153" width="1" height="1" fill="#cdd2d2"/><rect x="217" y="142" width="1" height="1" fill="#cdd2d2"/><rect x="133" y="149" width="1" height="1" fill="#c9d0d6"/><rect x="143" y="148" width="1" height="1" fill="#c6d8e6"/><rect x="189" y="152" width="1" height="1" fill="#c9d0d6"/><rect x="260" y="142" width="1" height="1" fill="#c9d0d6"/><rect x="275" y="141" width="1" height="1" fill="#cdd2d2"/><rect x="269" y="145" width="1" height="1" fill="#cdd2d2"/><rect x="305" y="152" width="1" height="1" fill="#c6d8e6"/><rect x="261" y="144" width="1" height="1" fill="#c6d8e6"/><rect x="149" y="142" width="1" height="1" fill="#cdd2d2"/><rect x="289" y="150" width="1" height="1" fill="#c6d8e6"/><rect x="222" y="150" width="1" height="1" fill="#c9d0d6"/><rect x="290" y="144" width="1" height="1" fill="#c6d8e6"/><rect x="186" y="147" width="1" height="1" fill="#c9d0d6"/><rect x="204" y="143" width="1" height="1" fill="#cdd2d2"/><rect x="265" y="146" width="1" height="1" fill="#c6d8e6"/><rect x="213" y="146" width="1" height="1" fill="#c6d8e6"/><rect x="171" y="141" width="1" height="1" fill="#cdd2d2"/><rect x="177" y="146" width="1" height="1" fill="#c6d8e6"/><rect x="229" y="143" width="1" height="1" fill="#cdd2d2"/><rect x="160" y="146" width="1" height="1" fill="#cdd2d2"/><rect x="249" y="143" width="1" height="1" fill="#c9d0d6"/><rect x="160" y="147" width="1" height="1" fill="#cdd2d2"/><rect x="288" y="146" width="1" height="1" fill="#c6d8e6"/><rect x="205" y="150" width="1" height="1" fill="#cdd2d2"/><rect x="173" y="142" width="1" height="1" fill="#c6d8e6"/><rect x="133" y="154" width="1" height="1" fill="#cdd2d2"/><rect x="174" y="146" width="1" height="1" fill="#cdd2d2"/><rect x="159" y="149" width="1" height="1" fill="#c6d8e6"/><rect x="301" y="149" width="1" height="1" fill="#c9d0d6"/><rect x="183" y="154" width="1" height="1" fill="#c6d8e6"/><rect x="278" y="154" width="1" height="1" fill="#c6d8e6"/><rect x="175" y="144" width="1" height="1" fill="#c6d8e6"/><rect x="248" y="145" width="1" height="1" fill="#cdd2d2"/><rect x="139" y="147" width="1" height="1" fill="#cdd2d2"/><rect x="241" y="141" width="1" height="1" fill="#cdd2d2"/><rect x="257" y="141" width="1" height="1" fill="#c9d0d6"/><rect x="135" y="142" width="1" height="1" fill="#c9d0d6"/><rect x="225" y="145" width="1" height="1" fill="#c6d8e6"/><rect x="193" y="147" width="1" height="1" fill="#c6d8e6"/><rect x="307" y="141" width="1" height="1" fill="#c6d8e6"/><rect x="271" y="149" width="1" height="1" fill="#c6d8e6"/><rect x="145" y="145" width="1" height="1" fill="#c6d8e6"/><rect x="150" y="146" width="1" height="1" fill="#c6d8e6"/><rect x="230" y="151" width="1" height="1" fill="#c6d8e6"/><rect x="161" y="151" width="1" height="1" fill="#c9d0d6"/><rect x="201" y="153" width="1" height="1" fill="#c6d8e6"/><rect x="303" y="146" width="1" height="1" fill="#c6d8e6"/><rect x="211" y="147" width="1" height="1" fill="#c9d0d6"/><rect x="219" y="145" width="1" height="1" fill="#cdd2d2"/><rect x="224" y="151" width="1" height="1" fill="#c9d0d6"/><rect x="260" y="153" width="1" height="1" fill="#cdd2d2"/><rect x="157" y="150" width="1" height="1" fill="#cdd2d2"/><rect x="284" y="142" width="1" height="1" fill="#c9d0d6"/><rect x="257" y="142" width="1" height="1" fill="#cdd2d2"/><rect x="242" y="151" width="1" height="1" fill="#cdd2d2"/><rect x="295" y="152" width="1" height="1" fill="#c6d8e6"/><path d="M323,145 h8 l-4,4.5z" fill="#333"/><path d="M340.5,142.5 h5 v7 h-5z M339,149.5 h8 M343,150 v4" fill="none" stroke="#222" stroke-width="1.3"/><path d="M352.5,143.5 l8,8 M360.5,143.5 l-8,8" stroke="#333" stroke-width="1.5"/></svg><div style="position:absolute;left:66px;top:140.2px;height:15.5px;line-height:15.5px;font-size:11.5px;color:#404040;white-space:nowrap;letter-spacing:-0.15px;">Properties</div><div style="position:absolute;left:63px;top:156px;width:303px;height:21px;background:#f0f0f0;border-bottom:1px solid #dadada"></div><div style="position:absolute;left:63px;top:156px;width:51px;height:22px;background:#fff"></div><div style="position:absolute;left:114px;top:158px;width:62px;height:18px;background:#f0f0f0;border:1px solid #d9d9d9;border-bottom:none"></div><div style="position:absolute;left:177px;top:158px;width:45px;height:18px;background:#f0f0f0;border:1px solid #d9d9d9;border-bottom:none"></div><div style="position:absolute;left:70px;top:159.0px;height:15px;line-height:15px;font-size:11px;color:#000;white-space:nowrap;letter-spacing:-0.15px;">Visibility</div><div style="position:absolute;left:119px;top:161.0px;height:15px;line-height:15px;font-size:11px;color:#000;white-space:nowrap;letter-spacing:-0.15px;">Parameters</div><div style="position:absolute;left:184px;top:161.0px;height:15px;line-height:15px;font-size:11px;color:#000;white-space:nowrap;letter-spacing:-0.15px;">Legend</div><div style="position:absolute;left:63px;top:177px;width:300px;height:808px;background:#fff;border-right:1px solid #e3e3e3"></div><div style="position:absolute;left:68px;top:181px;width:276px;height:799px;background:#f0f0f0;border-right:1px solid #a0a0a0;border-bottom:1px solid #a0a0a0"></div><div style="position:absolute;left:68px;top:181px;width:276px;height:25px;background:#bccbda;border-bottom:1px solid #a0a0a0"></div><div style="position:absolute;left:68px;top:181px;width:276px;height:25px;text-align:center;line-height:25px;font-size:11px">Stressvu Visibility</div><div style="position:absolute;left:346px;top:181px;width:16px;height:800px;background:#f0f0f0"></div><div style="position:absolute;left:347px;top:197px;width:14px;height:719px;background:#cdcdcd"></div><svg style="position:absolute;left:346px;top:181px" width="16" height="800"><path d="M4.5,11 l3.5,-3.5 l3.5,3.5" fill="none" stroke="#555" stroke-width="1.6"/><path d="M4.5,790 l3.5,3.5 l3.5,-3.5" fill="none" stroke="#555" stroke-width="1.6"/></svg><div style="position:absolute;left:68px;top:276px;width:276px;height:1px;background:#a0a0a0"></div><div style="position:absolute;left:68px;top:668px;width:276px;height:1px;background:#a0a0a0"></div><div style="position:absolute;left:68px;top:814px;width:276px;height:1px;background:#a0a0a0"></div><div style="position:absolute;left:91px;top:234px;width:11px;height:11px;border:1px solid #333;background:#fff"></div><svg style="position:absolute;left:91px;top:234px" width="13" height="13"><path d="M2.5,6.5 l2.8,3 l5.2,-6.5" fill="none" stroke="#222" stroke-width="1.3"/></svg><div style="position:absolute;left:107px;top:233.0px;height:15px;line-height:15px;font-size:11px;color:#000;white-space:nowrap;letter-spacing:-0.15px;">Activate Stressvu</div><svg style="position:absolute;left:74px;top:283px" width="10" height="10"><rect x="0.5" y="0.5" width="9" height="9" rx="1.5" fill="#fff" stroke="#909090"/><path d="M2.5,5 h5" stroke="#333"/></svg><div style="position:absolute;left:91px;top:280.5px;height:15px;line-height:15px;font-size:11px;color:#000;white-space:nowrap;letter-spacing:-0.15px;">Visualize</div><div style="position:absolute;left:100px;top:310px;width:11px;height:11px;border:1px solid #333;background:#fff"></div><svg style="position:absolute;left:100px;top:310px" width="13" height="13"><path d="M2.5,6.5 l2.8,3 l5.2,-6.5" fill="none" stroke="#222" stroke-width="1.3"/></svg><div style="position:absolute;left:116px;top:309.5px;height:15px;line-height:15px;font-size:11px;color:#000;white-space:nowrap;letter-spacing:-0.15px;">Membrane links</div><div style="position:absolute;left:124px;top:334.0px;height:15px;line-height:15px;font-size:11px;color:#000;white-space:nowrap;letter-spacing:-0.15px;">Mode:</div><svg style="position:absolute;left:187px;top:334.5px" width="14" height="14"><circle cx="7" cy="7" r="6" fill="#fff" stroke="#333" stroke-width="1"/></svg><div style="position:absolute;left:204px;top:334.5px;height:15px;line-height:15px;font-size:11px;color:#000;white-space:nowrap;letter-spacing:-0.15px;">Show force</div><svg style="position:absolute;left:187px;top:357.5px" width="14" height="14"><circle cx="7" cy="7" r="6" fill="#fff" stroke="#333" stroke-width="1"/><circle cx="7" cy="7" r="3.3" fill="#222"/></svg><div style="position:absolute;left:204px;top:357.5px;height:15px;line-height:15px;font-size:11px;color:#000;white-space:nowrap;letter-spacing:-0.15px;">Show stress</div><svg style="position:absolute;left:187px;top:380.5px" width="14" height="14"><circle cx="7" cy="7" r="6" fill="#fff" stroke="#333" stroke-width="1"/></svg><div style="position:absolute;left:204px;top:380.5px;height:15px;line-height:15px;font-size:11px;color:#000;white-space:nowrap;letter-spacing:-0.15px;">Show strain (%)</div><div style="position:absolute;left:125px;top:407px;width:11px;height:11px;border:1px solid #333;background:#fff"></div><div style="position:absolute;left:141px;top:406.5px;height:15px;line-height:15px;font-size:11px;color:#000;white-space:nowrap;letter-spacing:-0.15px;">Add. Attrib. starting with:</div><div style="position:absolute;left:276px;top:403px;width:47px;height:19px;border:1px solid #7a7a7a;background:#fff"></div><div style="position:absolute;left:280px;top:405.5px;height:15px;line-height:15px;font-size:11px;color:#000;white-space:nowrap;letter-spacing:-0.15px;">1</div><div style="position:absolute;left:125px;top:430px;width:11px;height:11px;border:1px solid #333;background:#fff"></div><div style="position:absolute;left:141px;top:429.5px;height:15px;line-height:15px;font-size:11px;color:#000;white-space:nowrap;letter-spacing:-0.15px;">Ignore T elements</div><div style="position:absolute;left:100px;top:467px;width:11px;height:11px;border:1px solid #333;background:#fff"></div><svg style="position:absolute;left:100px;top:467px" width="13" height="13"><path d="M2.5,6.5 l2.8,3 l5.2,-6.5" fill="none" stroke="#222" stroke-width="1.3"/></svg><div style="position:absolute;left:116px;top:466.5px;height:15px;line-height:15px;font-size:11px;color:#000;white-space:nowrap;letter-spacing:-0.15px;">Cables</div><div style="position:absolute;left:125px;top:490px;width:11px;height:11px;border:1px solid #333;background:#fff"></div><div style="position:absolute;left:141px;top:489.5px;height:15px;line-height:15px;font-size:11px;color:#000;white-space:nowrap;letter-spacing:-0.15px;">Add. Attrib. starting with:</div><div style="position:absolute;left:276px;top:486px;width:47px;height:19px;border:1px solid #7a7a7a;background:#fff"></div><div style="position:absolute;left:280px;top:488.5px;height:15px;line-height:15px;font-size:11px;color:#000;white-space:nowrap;letter-spacing:-0.15px;">5</div><div style="position:absolute;left:100px;top:520px;width:11px;height:11px;border:1px solid #333;background:#fff"></div><svg style="position:absolute;left:100px;top:520px" width="13" height="13"><path d="M2.5,6.5 l2.8,3 l5.2,-6.5" fill="none" stroke="#222" stroke-width="1.3"/></svg><div style="position:absolute;left:116px;top:519.5px;height:15px;line-height:15px;font-size:11px;color:#000;white-space:nowrap;letter-spacing:-0.15px;">Struts</div><div style="position:absolute;left:125px;top:543px;width:11px;height:11px;border:1px solid #333;background:#fff"></div><div style="position:absolute;left:141px;top:542.5px;height:15px;line-height:15px;font-size:11px;color:#000;white-space:nowrap;letter-spacing:-0.15px;">Add. Attrib. starting with:</div><div style="position:absolute;left:276px;top:539px;width:47px;height:19px;border:1px solid #7a7a7a;background:#fff"></div><div style="position:absolute;left:280px;top:541.5px;height:15px;line-height:15px;font-size:11px;color:#000;white-space:nowrap;letter-spacing:-0.15px;">0</div><div style="position:absolute;left:100px;top:574px;width:11px;height:11px;border:1px solid #333;background:#fff"></div><div style="position:absolute;left:116px;top:573.5px;height:15px;line-height:15px;font-size:11px;color:#000;white-space:nowrap;letter-spacing:-0.15px;">Membrane shear</div><div style="position:absolute;left:100px;top:606px;width:11px;height:11px;border:1px solid #333;background:#fff"></div><div style="position:absolute;left:116px;top:605.5px;height:15px;line-height:15px;font-size:11px;color:#000;white-space:nowrap;letter-spacing:-0.15px;">Principal stresses</div><div style="position:absolute;left:100px;top:637px;width:11px;height:11px;border:1px solid #333;background:#fff"></div><svg style="position:absolute;left:100px;top:637px" width="13" height="13"><path d="M2.5,6.5 l2.8,3 l5.2,-6.5" fill="none" stroke="#222" stroke-width="1.3"/></svg><div style="position:absolute;left:116px;top:636.5px;height:15px;line-height:15px;font-size:11px;color:#000;white-space:nowrap;letter-spacing:-0.15px;">Equivalent stresses</div><svg style="position:absolute;left:74px;top:675px" width="10" height="10"><rect x="0.5" y="0.5" width="9" height="9" rx="1.5" fill="#fff" stroke="#909090"/><path d="M2.5,5 h5" stroke="#333"/></svg><div style="position:absolute;left:91px;top:672.5px;height:15px;line-height:15px;font-size:11px;color:#000;white-space:nowrap;letter-spacing:-0.15px;">Labeling</div><svg style="position:absolute;left:100px;top:701.5px" width="14" height="14"><circle cx="7" cy="7" r="6" fill="#fff" stroke="#333" stroke-width="1"/><circle cx="7" cy="7" r="3.3" fill="#222"/></svg><div style="position:absolute;left:116px;top:701.5px;height:15px;line-height:15px;font-size:11px;color:#000;white-space:nowrap;letter-spacing:-0.15px;">No labeling</div><svg style="position:absolute;left:100px;top:724.5px" width="14" height="14"><circle cx="7" cy="7" r="6" fill="#fff" stroke="#333" stroke-width="1"/></svg><div style="position:absolute;left:116px;top:724.5px;height:15px;line-height:15px;font-size:11px;color:#000;white-space:nowrap;letter-spacing:-0.15px;">Label all values</div><svg style="position:absolute;left:100px;top:747.5px" width="14" height="14"><circle cx="7" cy="7" r="6" fill="#fff" stroke="#333" stroke-width="1"/></svg><div style="position:absolute;left:116px;top:747.5px;height:15px;line-height:15px;font-size:11px;color:#000;white-space:nowrap;letter-spacing:-0.15px;">Label critical values</div><div style="position:absolute;left:100px;top:779.5px;height:15px;line-height:15px;font-size:11px;color:#000;white-space:nowrap;letter-spacing:-0.15px;">Decimal places:</div><div style="position:absolute;left:276px;top:773px;width:47px;height:19px;border:1px solid #7a7a7a;background:#fff"></div><div style="position:absolute;left:280px;top:775.5px;height:15px;line-height:15px;font-size:11px;color:#000;white-space:nowrap;letter-spacing:-0.15px;">1</div><svg style="position:absolute;left:74px;top:821px" width="10" height="10"><rect x="0.5" y="0.5" width="9" height="9" rx="1.5" fill="#fff" stroke="#909090"/><path d="M2.5,5 h5" stroke="#333"/></svg><div style="position:absolute;left:91px;top:818.5px;height:15px;line-height:15px;font-size:11px;color:#000;white-space:nowrap;letter-spacing:-0.15px;">Scaling</div><div style="position:absolute;left:92px;top:854.5px;height:15px;line-height:15px;font-size:11px;color:#000;white-space:nowrap;letter-spacing:-0.15px;">Scale factor of thickness:</div><div style="position:absolute;left:276px;top:852px;width:47px;height:19px;border:1px solid #7a7a7a;background:#fff"></div><div style="position:absolute;left:280px;top:854.5px;height:15px;line-height:15px;font-size:11px;color:#000;white-space:nowrap;letter-spacing:-0.15px;">7</div><div style="position:absolute;left:92px;top:881.5px;height:15px;line-height:15px;font-size:11px;color:#000;white-space:nowrap;letter-spacing:-0.15px;">Scale factor of symbols:</div><div style="position:absolute;left:276px;top:879px;width:47px;height:19px;border:1px solid #7a7a7a;background:#fff"></div><div style="position:absolute;left:280px;top:881.5px;height:15px;line-height:15px;font-size:11px;color:#000;white-space:nowrap;letter-spacing:-0.15px;">1</div><div style="position:absolute;left:92px;top:909.5px;height:15px;line-height:15px;font-size:11px;color:#000;white-space:nowrap;letter-spacing:-0.15px;">Scale factor of principal stresses:</div><div style="position:absolute;left:276px;top:906px;width:47px;height:19px;border:1px solid #7a7a7a;background:#fff"></div><div style="position:absolute;left:280px;top:908.5px;height:15px;line-height:15px;font-size:11px;color:#000;white-space:nowrap;letter-spacing:-0.15px;">0.01</div><div style="position:absolute;left:91px;top:944px;width:11px;height:11px;border:1px solid #333;background:#fff"></div><svg style="position:absolute;left:91px;top:944px" width="13" height="13"><path d="M2.5,6.5 l2.8,3 l5.2,-6.5" fill="none" stroke="#222" stroke-width="1.3"/></svg><div style="position:absolute;left:107px;top:943.5px;height:15px;line-height:15px;font-size:11px;color:#000;white-space:nowrap;letter-spacing:-0.15px;">Show Cylinders/Spheres</div><div style="position:absolute;left:63px;top:985px;width:303px;height:1px;background:#dcdcdc"></div><div style="position:absolute;left:63px;top:986px;width:303px;height:24px;background:#bccbda;border-bottom:1px solid #9a9a9a"></div><div style="position:absolute;left:63px;top:987px;width:303px;height:23px;text-align:center;line-height:23px;font-size:11px">&copy; 2019 technet GmbH</div><div style="position:absolute;left:366px;top:138px;width:1px;height:873px;background:#a0a0a0"></div>
<svg style="position:absolute;left:0;top:0" width="1920" height="1080" viewBox="0 0 1920 1080">
<clipPath id="vp"><rect x="372" y="139" width="1484" height="872"/></clipPath>
<g clip-path="url(#vp)"><line x1="900" y1="700" x2="932" y2="793" stroke="#126262" stroke-width="8" stroke-linecap="butt"/><line x1="900" y1="700" x2="932" y2="793" stroke="#1a8c8c" stroke-width="6" stroke-linecap="butt"/><line x1="899.0" y1="700.3" x2="931.0" y2="793.3" stroke="#5eaeae" stroke-width="2.0" opacity="0.7"/><circle cx="932" cy="793" r="4.0" fill="#ff1a00"/><line x1="1175" y1="587" x2="1152" y2="673" stroke="#1c9d1c" stroke-width="8" stroke-linecap="butt"/><line x1="1175" y1="587" x2="1152" y2="673" stroke="#28e028" stroke-width="6" stroke-linecap="butt"/><line x1="1174.0" y1="586.7" x2="1151.0" y2="672.7" stroke="#68e968" stroke-width="2.0" opacity="0.7"/><circle cx="1152" cy="673" r="4.0" fill="#ff1a00"/><line x1="1183" y1="597" x2="1185" y2="687" stroke="#a8a000" stroke-width="8" stroke-linecap="butt"/><line x1="1183" y1="597" x2="1185" y2="687" stroke="#f0e400" stroke-width="6" stroke-linecap="butt"/><line x1="1182.0" y1="597.0" x2="1184.0" y2="687.0" stroke="#f4ec4c" stroke-width="2.0" opacity="0.7"/><circle cx="1185" cy="687" r="4.0" fill="#ff1a00"/><line x1="1186" y1="600" x2="1193" y2="673" stroke="#0d6161" stroke-width="8" stroke-linecap="butt"/><line x1="1186" y1="600" x2="1193" y2="673" stroke="#138a8a" stroke-width="6" stroke-linecap="butt"/><line x1="1185.0" y1="600.1" x2="1192.0" y2="673.1" stroke="#59adad" stroke-width="2.0" opacity="0.7"/><circle cx="1193" cy="673" r="4.0" fill="#ff1a00"/><line x1="1258" y1="335" x2="1195" y2="752" stroke="#ac9200" stroke-width="8" stroke-linecap="butt"/><line x1="1258" y1="335" x2="1195" y2="752" stroke="#f5d000" stroke-width="6" stroke-linecap="butt"/><line x1="1257.0" y1="334.8" x2="1194.0" y2="751.8" stroke="#f8de4c" stroke-width="2.0" opacity="0.7"/><circle cx="1195" cy="752" r="4.0" fill="#ff1a00"/><line x1="1402" y1="587" x2="1390" y2="670" stroke="#aba800" stroke-width="8" stroke-linecap="butt"/><line x1="1402" y1="587" x2="1390" y2="670" stroke="#f4f000" stroke-width="6" stroke-linecap="butt"/><line x1="1401.0" y1="586.8" x2="1389.0" y2="669.8" stroke="#f7f44c" stroke-width="2.0" opacity="0.7"/><circle cx="1390" cy="670" r="4.0" fill="#ff1a00"/><line x1="1404" y1="587" x2="1432" y2="671" stroke="#65a800" stroke-width="9" stroke-linecap="butt"/><line x1="1404" y1="587" x2="1432" y2="671" stroke="#90f000" stroke-width="7" stroke-linecap="butt"/><line x1="1402.9" y1="587.4" x2="1430.9" y2="671.4" stroke="#b1f44c" stroke-width="2.2" opacity="0.7"/><circle cx="1432" cy="671" r="4.5" fill="#ff1a00"/><line x1="1402" y1="587" x2="1401" y2="682" stroke="#0e8930" stroke-width="10" stroke-linecap="butt"/><line x1="1402" y1="587" x2="1401" y2="682" stroke="#14c444" stroke-width="8" stroke-linecap="butt"/><line x1="1400.7" y1="587.0" x2="1399.7" y2="682.0" stroke="#5ad57c" stroke-width="2.5" opacity="0.7"/><circle cx="1401" cy="682" r="5.0" fill="#ff1a00"/><line x1="508" y1="661" x2="539" y2="770" stroke="#73a800" stroke-width="8" stroke-linecap="butt"/><line x1="508" y1="661" x2="539" y2="770" stroke="#a4f000" stroke-width="6" stroke-linecap="butt"/><line x1="507.0" y1="661.3" x2="538.0" y2="770.3" stroke="#bff44c" stroke-width="2.0" opacity="0.7"/><circle cx="539" cy="770" r="4.0" fill="#ff1a00"/><line x1="510" y1="665" x2="475" y2="758" stroke="#43a800" stroke-width="8" stroke-linecap="butt"/><line x1="510" y1="665" x2="475" y2="758" stroke="#60f000" stroke-width="6" stroke-linecap="butt"/><line x1="509.0" y1="664.6" x2="474.0" y2="757.6" stroke="#8ff44c" stroke-width="2.0" opacity="0.7"/><circle cx="475" cy="758" r="4.0" fill="#ff1a00"/><path d="M490.0,712.0 L508.0,661.0 L557.0,638.0 L607.0,607.0 L644.0,571.0 L662.0,553.0 L695.0,518.0 L729.0,480.0 L751.0,451.0 L771.0,413.0 L782.0,384.0 L794.0,340.0 L806.0,275.0 L809.0,228.0 L809.8,226.6 L810.1,225.5 L810.7,224.3 L811.6,223.2 L812.8,222.0 L814.3,220.9 L816.1,219.8 L818.1,218.8 L820.3,217.8 L822.7,216.8 L825.3,216.0 L828.0,215.2 L830.8,214.6 L833.7,214.0 L836.6,213.6 L839.6,213.3 L842.5,213.0 L845.4,212.9 L848.2,213.0 L850.9,213.1 L853.5,213.4 L855.9,213.8 L858.1,214.3 L860.1,214.9 L861.8,215.6 L863.3,216.4 L864.4,217.2 L865.4,218.2 L866.0,219.2 L866.0,221.0 L886.0,260.0 L912.0,304.0 L946.0,356.0 L977.0,382.0 L1016.0,410.0 L1042.0,426.0 L1062.0,432.0 L1093.0,418.0 L1132.0,392.0 L1171.0,350.0 L1197.0,309.0 L1223.0,262.0 L1237.0,238.0 L1251.0,213.0 L1251.9,214.1 L1252.9,214.0 L1254.7,214.0 L1257.0,214.1 L1259.8,214.4 L1263.1,214.8 L1266.9,215.3 L1270.9,215.9 L1275.1,216.6 L1279.4,217.3 L1283.7,218.2 L1287.9,219.0 L1291.9,219.9 L1295.5,220.7 L1298.8,221.6 L1301.5,222.4 L1303.7,223.1 L1305.3,223.7 L1306.3,224.2 L1305.0,225.0 L1311.0,245.0 L1316.0,267.0 L1322.0,290.0 L1329.0,311.0 L1338.0,333.0 L1347.0,355.0 L1364.0,389.0 L1383.0,415.0 L1404.0,440.0 L1433.0,465.0 L1483.0,500.0 L1533.0,533.0 L1583.0,567.0 L1617.0,590.0 L1648.0,613.0 L1590.0,570.0 L1480.0,572.0 L1402.0,582.0 L1230.0,586.0 L1146.0,578.0 L1023.0,575.0 L910.0,569.0 L861.0,559.0 L755.0,574.0 L663.0,611.0 L569.0,672.0 L490.0,712.0Z" fill="#0414f0"/><path d="M1590.0,570.0 L1569.5,570.2 L1539.9,570.4 L1507.8,570.9 L1480.0,572.0 L1460.5,574.1 L1444.9,576.9 L1427.4,579.7 L1402.0,582.0 L1363.5,583.7 L1316.4,585.1 L1269.0,586.0 L1230.0,586.0 L1203.7,584.7 L1184.9,582.4 L1167.7,579.9 L1146.0,578.0 L1117.8,577.0 L1086.3,576.4 L1054.0,575.8 L1023.0,575.0 L992.5,573.8 L961.9,572.4 L933.5,570.9 L910.0,569.0 L894.6,566.2 L885.1,562.7 L875.8,559.8 L861.0,559.0 L838.2,560.5 L810.7,563.6 L781.9,568.1 L755.0,574.0 L728.9,582.6 L702.4,593.4 L679.2,603.8 L663.0,611.0" stroke="#30a800" stroke-width="6" fill="none" stroke-linejoin="round"/><path d="M1590.0,570.0 L1569.5,570.2 L1539.9,570.4 L1507.8,570.9 L1480.0,572.0 L1460.5,574.1 L1444.9,576.9 L1427.4,579.7 L1402.0,582.0 L1363.5,583.7 L1316.4,585.1 L1269.0,586.0 L1230.0,586.0 L1203.7,584.7 L1184.9,582.4 L1167.7,579.9 L1146.0,578.0 L1117.8,577.0 L1086.3,576.4 L1054.0,575.8 L1023.0,575.0 L992.5,573.8 L961.9,572.4 L933.5,570.9 L910.0,569.0 L894.6,566.2 L885.1,562.7 L875.8,559.8 L861.0,559.0 L838.2,560.5 L810.7,563.6 L781.9,568.1 L755.0,574.0 L728.9,582.6 L702.4,593.4 L679.2,603.8 L663.0,611.0" stroke="#40e000" stroke-width="3.5" fill="none" stroke-linejoin="round"/><line x1="958" y1="600" x2="872" y2="712" stroke="#a89d00" stroke-width="7" stroke-linecap="butt"/><line x1="958" y1="600" x2="872" y2="712" stroke="#f0e000" stroke-width="5" stroke-linecap="butt"/><line x1="957.3" y1="599.5" x2="871.3" y2="711.5" stroke="#f4e94c" stroke-width="1.7" opacity="0.7"/><line x1="952" y1="630" x2="948" y2="700" stroke="#a88600" stroke-width="5" stroke-linecap="butt"/><line x1="952" y1="630" x2="948" y2="700" stroke="#f0c000" stroke-width="3" stroke-linecap="butt"/><line x1="951.4" y1="630.0" x2="947.4" y2="700.0" stroke="#f4d24c" stroke-width="1.2" opacity="0.7"/><clipPath id="memclip"><path d="M474.0,721.0 L508.0,661.0 L557.0,638.0 L607.0,607.0 L644.0,571.0 L662.0,553.0 L695.0,518.0 L729.0,480.0 L751.0,451.0 L771.0,413.0 L782.0,384.0 L794.0,340.0 L806.0,275.0 L809.0,228.0 L809.8,226.6 L810.1,225.5 L810.7,224.3 L811.6,223.2 L812.8,222.0 L814.3,220.9 L816.1,219.8 L818.1,218.8 L820.3,217.8 L822.7,216.8 L825.3,216.0 L828.0,215.2 L830.8,214.6 L833.7,214.0 L836.6,213.6 L839.6,213.3 L842.5,213.0 L845.4,212.9 L848.2,213.0 L850.9,213.1 L853.5,213.4 L855.9,213.8 L858.1,214.3 L860.1,214.9 L861.8,215.6 L863.3,216.4 L864.4,217.2 L865.4,218.2 L866.0,219.2 L866.0,221.0 L886.0,260.0 L912.0,304.0 L946.0,356.0 L977.0,382.0 L1016.0,410.0 L1042.0,426.0 L1062.0,432.0 L1093.0,418.0 L1132.0,392.0 L1171.0,350.0 L1197.0,309.0 L1223.0,262.0 L1237.0,238.0 L1251.0,213.0 L1251.9,214.1 L1252.9,214.0 L1254.7,214.0 L1257.0,214.1 L1259.8,214.4 L1263.1,214.8 L1266.9,215.3 L1270.9,215.9 L1275.1,216.6 L1279.4,217.3 L1283.7,218.2 L1287.9,219.0 L1291.9,219.9 L1295.5,220.7 L1298.8,221.6 L1301.5,222.4 L1303.7,223.1 L1305.3,223.7 L1306.3,224.2 L1305.0,225.0 L1311.0,245.0 L1316.0,267.0 L1322.0,290.0 L1329.0,311.0 L1338.0,333.0 L1347.0,355.0 L1364.0,389.0 L1383.0,415.0 L1404.0,440.0 L1433.0,465.0 L1483.0,500.0 L1533.0,533.0 L1583.0,567.0 L1617.0,590.0 L1648.0,613.0 L1664.0,673.0 L1645.9,662.7 L1619.7,647.8 L1591.4,632.2 L1567.0,620.0 L1548.1,612.6 L1531.6,607.6 L1516.0,603.9 L1500.0,600.0 L1483.2,595.7 L1466.4,591.6 L1449.7,587.9 L1433.0,585.0 L1416.5,582.9 L1400.0,581.4 L1383.5,580.5 L1367.0,580.0 L1349.7,580.2 L1331.9,580.9 L1314.9,582.0 L1300.0,583.0 L1288.5,583.6 L1279.4,583.9 L1270.6,584.9 L1260.0,587.0 L1246.4,591.0 L1231.1,596.2 L1216.0,601.9 L1203.0,607.0 L1193.2,611.0 L1185.4,614.6 L1178.2,618.3 L1170.0,623.0 L1160.3,628.9 L1149.8,635.6 L1139.5,642.8 L1130.0,650.0 L1121.6,657.2 L1113.9,664.6 L1106.8,672.2 L1100.0,680.0 L1093.5,687.7 L1087.5,695.4 L1082.0,703.7 L1077.0,713.0 L1072.5,724.9 L1068.6,738.6 L1065.3,751.2 L1063.0,760.0 L1049.3,758.1 L1029.6,755.3 L1007.8,752.4 L988.0,750.0 L971.6,748.3 L956.3,746.9 L940.6,745.9 L923.0,745.0 L902.6,744.3 L880.4,743.8 L857.5,743.7 L835.0,744.0 L812.8,744.9 L790.5,746.3 L768.4,748.1 L747.0,750.0 L724.6,752.5 L701.5,755.4 L681.2,758.1 L667.0,760.0 L661.9,757.7 L654.8,754.4 L646.2,750.7 L637.0,747.0 L627.7,743.2 L617.8,739.2 L606.5,735.3 L593.0,732.0 L575.7,729.4 L555.5,727.2 L535.3,725.5 L518.0,724.0 L503.8,722.8 L491.3,722.0 L481.2,721.4 L474.0,721.0Z"/></clipPath><g clip-path="url(#memclip)"><path d="M1251 214L1233 245M1252 215L1231 245M1253 215L1231 245" stroke="#00c242" stroke-width="4.0" stroke-linecap="round" fill="none"/><path d="M1233 245L1208 290M1232 245L1206 290M1231 245L1206 290M1231 245L1206 290M1231 245L1206 291M1232 246L1208 291M1302 260L1311 314M1305 260L1315 315M1308 261L1320 316M1310 262L1323 317M1312 262L1327 318M1314 262L1329 318M1315 263L1331 318M1316 263L1333 319M1317 263L1333 319M1317 263L1334 319M1316 262L1333 318M1315 262L1332 318" stroke="#001de1" stroke-width="5.0" stroke-linecap="round" fill="none"/><path d="M1208 290L1188 325M1206 290L1186 325M1206 290L1186 325M1206 290L1186 326M1206 291L1188 327M1298 259L1306 313M1320 316L1333 360M1323 317L1338 361M1327 318L1342 361M1329 318L1345 362M1331 318L1348 363M1333 319L1350 363M1333 319L1351 363M1334 319L1352 363M1333 318L1351 362M1332 318L1350 362" stroke="#001de1" stroke-width="5.5" stroke-linecap="round" fill="none"/><path d="M1188 325L1171 350M1186 326L1170 351M1188 327L1172 351M1175 352L1155 376M1178 353L1160 377M1223 336L1215 360" stroke="#0054ae" stroke-width="6.0" stroke-linecap="round" fill="none"/><path d="M1171 350L1149 375M1186 325L1170 350M1186 325L1170 350M1170 351L1150 375M1172 351L1152 376M1215 360L1205 383M1355 390L1372 417M1359 391L1377 418M1362 392L1381 419M1365 392L1384 420M1367 393L1387 420M1367 393L1388 420M1367 392L1388 420M1366 392L1387 420" stroke="#003ac8" stroke-width="6.0" stroke-linecap="round" fill="none"/><path d="M1149 375L1122 400M1122 400L1076 425M1148 375L1121 400M1121 400L1075 425M1148 375L1121 400M1121 400L1076 424M1150 375L1123 400M1123 400L1079 424M1126 400L1083 423M1130 400L1089 423M1136 400L1096 423M1215 384L1202 405M1202 405L1179 425M1225 386L1215 406M1215 406L1194 426M1236 388L1227 408M1227 408L1210 427M1247 390L1241 410M1241 410L1226 429M1258 392L1254 412M1269 394L1267 414M1281 396L1281 416M1282 256L1282 308M1292 398L1294 419M1286 257L1288 309" stroke="#001de1" stroke-width="6.5" stroke-linecap="round" fill="none"/><path d="M1076 425L1103 450M1075 425L1103 449M1076 424L1105 449M1079 424L1108 448M1083 423L1112 447M1089 423L1118 447M1164 424L1195 445M1179 425L1210 446M1265 252L1257 302M1269 253L1263 304M1273 254L1270 305M1278 255L1276 306M1311 314L1322 357" stroke="#001de1" stroke-width="7.0" stroke-linecap="round" fill="none"/><path d="M1103 450L1136 472M1103 449L1137 471M1105 449L1139 471M1108 448L1142 470M1112 447L1147 469M1118 447L1153 468M1096 423L1125 446M1125 446L1161 468M1104 423L1134 446M1134 446L1169 467M1144 445L1179 466M1155 445L1191 466M1167 445L1203 465M1150 423L1181 445M1181 445L1216 465M1195 445L1230 465M1210 446L1244 465M1194 426L1225 446M1225 446L1260 466M1210 427L1241 447M1241 447L1276 467M1226 429L1258 449M1258 449L1292 468M1243 431L1274 451M1274 451L1308 470M1259 433L1291 453M1291 453L1324 472M1276 435L1307 455M1307 455L1341 474M1293 438L1324 458M1324 458L1357 477M1309 440L1340 460M1340 460L1373 479M1325 442L1356 462M1356 462L1388 481M1340 445L1371 465M1371 465L1403 484M1354 447L1386 468M1386 468L1417 487M1367 451L1399 471M1399 471L1431 490M1380 454L1411 474M1411 474L1443 494M1391 456L1423 477M1423 477L1454 497M1402 459L1433 481M1433 481L1465 501M1411 461L1443 483M1443 483L1474 504M1419 463L1451 486M1451 486L1482 506M1425 465L1458 488M1458 488L1489 508M1431 467L1463 489M1463 489L1495 510M1434 467L1467 491M1467 491L1499 512M1437 468L1470 491M1470 491L1502 513M1438 468L1471 492M1471 492L1504 514M1437 468L1471 492M1471 492L1504 514" stroke="#003ac8" stroke-width="7.0" stroke-linecap="round" fill="none"/><path d="M1136 472L1164 493M1164 493L1187 512M1137 471L1165 492M1165 492L1188 511M1139 471L1167 491M1167 491L1191 510M1142 470L1171 491M1171 491L1195 509M1147 469L1176 490M1176 490L1201 508M1153 468L1182 489M1182 489L1207 507M1161 468L1190 488M1190 488L1215 506M1169 467L1199 487M1199 487L1225 505M1179 466L1209 486M1209 486L1235 504M1191 466L1221 485M1221 485L1246 503M1203 465L1233 484M1233 484L1259 502M1216 465L1246 484M1246 484L1272 502M1230 465L1260 484M1260 484L1286 501M1244 465L1275 484M1275 484L1300 501M1260 466L1290 484M1290 484L1316 501M1276 467L1306 485M1306 485L1331 502M1292 468L1322 486M1322 486L1347 503M1308 470L1338 488M1338 488L1364 505M1324 472L1354 490M1354 490L1380 507M1341 474L1371 492M1371 492L1396 509M1357 477L1387 495M1387 495L1412 511M1373 479L1403 497M1403 497L1428 514M1388 481L1418 499M1418 499L1443 516M1403 484L1433 502M1433 502L1458 519M1417 487L1447 505M1447 505L1472 522M1431 490L1460 509M1460 509L1485 526M1443 494L1473 513M1473 513L1497 530M1454 497L1484 516M1484 516L1509 533M1465 501L1494 520M1494 520L1519 537M1474 504L1504 523M1504 523L1528 540M1482 506L1512 526M1512 526L1537 543M1489 508L1519 528M1519 528L1544 546M1495 510L1525 531M1525 531L1550 548M1499 512L1530 532M1530 532L1555 550M1502 513L1533 534M1533 534L1559 551M1504 514L1535 535M1535 535L1561 552M1504 514L1536 535M1536 535L1562 553" stroke="#003ac8" stroke-width="7.5" stroke-linecap="round" fill="none"/><path d="M1187 512L1208 530M1208 530L1226 546M1188 511L1210 529M1210 529L1229 545M1191 510L1213 528M1213 528L1232 544M1195 509L1218 527M1218 527L1237 543M1201 508L1223 526M1223 526L1243 542M1207 507L1230 525M1230 525L1251 541M1215 506L1239 524M1239 524L1259 540M1225 505L1248 523M1248 523L1269 539M1235 504L1258 522M1258 522L1279 537M1246 503L1270 520M1270 520L1291 536M1259 502L1282 519M1282 519L1303 535M1272 502L1296 518M1296 518L1317 534M1286 501L1310 518M1310 518L1331 534M1300 501L1324 518M1324 518L1345 533M1316 501L1340 518M1340 518L1361 533M1331 502L1355 518M1355 518L1376 534M1347 503L1371 520M1371 520L1392 535M1364 505L1387 521M1387 521L1408 536M1380 507L1403 523M1403 523L1424 538M1396 509L1419 525M1419 525L1440 540M1412 511L1435 527M1435 527L1456 542M1428 514L1451 529M1451 529L1472 544M1443 516L1466 532M1466 532L1487 546M1458 519L1481 534M1481 534L1502 549M1472 522L1495 538M1495 538L1516 552M1485 526L1508 541M1508 541L1529 556M1497 530L1520 545M1520 545L1541 560M1509 533L1532 549M1532 549L1552 564M1519 537L1542 553M1542 553L1563 567M1528 540L1552 556M1552 556L1572 571M1537 543L1560 559M1560 559L1581 574M1544 546L1568 562M1568 562L1588 577M1550 548L1574 564M1574 564L1595 579M1555 550L1579 566M1579 566L1600 581M1559 551L1583 568M1583 568L1605 583M1561 552L1586 569M1586 569L1608 584M1562 553L1587 570M1587 570L1610 585" stroke="#003ac8" stroke-width="8.0" stroke-linecap="round" fill="none"/><path d="M1226 546L1242 560M1242 560L1256 574M1229 545L1245 559M1245 559L1259 574M1232 544L1249 559M1249 559L1264 573M1237 543L1254 558M1254 558L1269 572M1243 542L1260 557M1260 557L1276 572M1251 541L1268 556M1268 556L1284 571M1259 540L1277 555M1277 555L1293 570M1269 539L1286 554M1286 554L1302 570M1279 537L1297 553M1297 553L1313 569M1291 536L1309 552M1309 552L1325 568M1303 535L1321 551M1321 551L1337 567M1317 534L1335 550M1335 550L1351 566M1331 534L1349 550M1349 550L1364 566M1345 533L1364 549M1364 549L1379 566M1361 533L1379 549M1379 549L1394 566M1376 534L1394 550M1394 550L1409 566M1392 535L1410 551M1410 551L1425 567M1408 536L1426 552M1426 552L1440 568M1424 538L1442 554M1442 554L1456 570M1440 540L1458 556M1458 556L1472 572M1456 542L1474 558M1474 558L1487 573M1472 544L1489 560M1489 560L1502 575M1487 546L1505 561M1505 561L1517 576M1502 549L1519 564M1519 564L1532 578M1516 552L1533 567M1533 567L1545 580M1529 556L1546 570M1546 570L1558 583M1541 560L1558 574M1558 574L1570 587M1552 564L1570 577M1570 577L1581 589M1563 567L1580 581M1580 581L1592 592M1572 571L1590 584M1581 574L1599 587M1588 577L1606 589" stroke="#003ac8" stroke-width="8.5" stroke-linecap="round" fill="none"/><path d="M1256 574L1263 581M1263 581L1268 586M1259 574L1267 581M1267 581L1272 586M1264 573L1271 581M1271 581L1277 585M1269 572L1277 580M1277 580L1283 584M1276 572L1284 580M1284 580L1290 584M1284 571L1292 580M1292 580L1299 583M1293 570L1301 580M1301 580L1308 582M1302 570L1310 580M1310 580L1318 582M1313 569L1321 579M1321 579L1329 581M1325 568L1333 579M1333 579L1341 581M1337 567L1345 579M1345 579L1354 580M1351 566L1358 578M1358 578L1368 580M1364 566L1372 578M1372 578L1382 580M1379 566L1386 578M1386 578L1396 581M1394 566L1401 579M1401 579L1412 582M1409 566L1416 579M1416 579L1427 584M1425 567L1431 580M1431 580L1443 587M1440 568L1446 581M1446 581L1458 590M1456 570L1462 583M1462 583L1474 593M1472 572L1477 585M1477 585L1490 597M1487 573L1492 586M1492 586L1505 601M1502 575L1507 587M1507 587L1521 605M1517 576L1522 588M1522 588L1536 609M1532 578L1536 589M1536 589L1550 614M1545 580L1549 591M1558 583L1561 593M1570 587L1573 596" stroke="#003ac8" stroke-width="9.0" stroke-linecap="round" fill="none"/><path d="M1252 215L1232 245M1252 215L1231 245" stroke="#00a45e" stroke-width="4.0" stroke-linecap="round" fill="none"/><path d="M1170 350L1148 375M1170 350L1148 375M1230 337L1223 362M1223 362L1215 384M1238 339L1232 363M1232 363L1225 386M1245 341L1241 365M1241 365L1236 388M1253 342L1250 367M1250 367L1247 390M1261 344L1260 369M1260 369L1258 392M1269 346L1269 371M1269 371L1269 394M1277 348L1279 373M1279 373L1281 396M1285 349L1288 375M1288 375L1292 398M1293 351L1297 377M1297 377L1303 400M1291 257L1294 310M1301 353L1306 379M1306 379L1314 402M1295 258L1300 312M1308 354L1315 380M1315 380L1324 405M1315 356L1323 382M1323 382L1334 407M1322 357L1331 384M1331 384L1343 409M1315 315L1328 358M1328 358L1338 386M1338 386L1351 411M1333 360L1344 387M1344 387L1359 413M1338 361L1350 389M1350 389L1366 415M1342 361L1355 390M1345 362L1359 391M1348 363L1362 392M1350 363L1365 392M1351 363L1367 393M1352 363L1367 393M1351 362L1367 392M1350 362L1366 392" stroke="#001de1" stroke-width="6.0" stroke-linecap="round" fill="none"/><path d="M1152 376L1126 400M1155 376L1130 400M1142 400L1104 423M1150 401L1114 423M1205 383L1190 404M1190 404L1164 424M1254 412L1243 431M1267 414L1259 433M1281 416L1276 435M1294 419L1293 438M1303 400L1307 421M1307 421L1309 440M1314 402L1320 423M1320 423L1325 442M1324 405L1332 425M1332 425L1340 445M1334 407L1344 428M1344 428L1354 447M1343 409L1355 430M1355 430L1367 451M1351 411L1365 433M1365 433L1380 454M1359 413L1374 435M1374 435L1391 456M1366 415L1382 438M1382 438L1402 459M1372 417L1390 440M1390 440L1411 461M1377 418L1396 441M1396 441L1419 463M1381 419L1401 443M1401 443L1425 465M1384 420L1405 444M1405 444L1431 467M1387 420L1408 445M1408 445L1434 467M1388 420L1410 445M1410 445L1437 468M1388 420L1410 445M1410 445L1438 468M1387 420L1409 445M1409 445L1437 468" stroke="#003ac8" stroke-width="6.5" stroke-linecap="round" fill="none"/><path d="M1254 216L1232 246M1267 219L1253 250" stroke="#00da28" stroke-width="4.0" stroke-linecap="round" fill="none"/><path d="M1208 291L1190 327" stroke="#003ac8" stroke-width="5.5" stroke-linecap="round" fill="none"/><path d="M1190 327L1175 352M1182 354L1165 377M1188 355L1171 378M1194 356L1179 379M1200 357L1186 380M1217 334L1207 358M1207 358L1195 381" stroke="#006d95" stroke-width="6.0" stroke-linecap="round" fill="none"/><path d="M1255 216L1233 246" stroke="#00f10f" stroke-width="4.0" stroke-linecap="round" fill="none"/><path d="M1233 246L1210 292" stroke="#003ac8" stroke-width="5.0" stroke-linecap="round" fill="none"/><path d="M1210 292L1192 328" stroke="#0054ae" stroke-width="5.5" stroke-linecap="round" fill="none"/><path d="M1192 328L1178 353" stroke="#00867a" stroke-width="6.0" stroke-linecap="round" fill="none"/><path d="M1160 377L1136 400M1159 401L1125 423M1168 402L1137 423M1195 381L1179 403M1179 403L1150 423M1261 251L1251 301" stroke="#0054ae" stroke-width="6.5" stroke-linecap="round" fill="none"/><path d="M1256 217L1235 246M1258 217L1237 247M1259 217L1239 247M1261 218L1242 248M1263 218L1245 248M1265 219L1249 249" stroke="#14ff00" stroke-width="4.0" stroke-linecap="round" fill="none"/><path d="M1235 246L1212 293" stroke="#0054ae" stroke-width="5.0" stroke-linecap="round" fill="none"/><path d="M1212 293L1196 329" stroke="#006d95" stroke-width="5.5" stroke-linecap="round" fill="none"/><path d="M1196 329L1182 354M1200 330L1188 355M1205 331L1194 356M1211 333L1200 357" stroke="#00a45e" stroke-width="6.0" stroke-linecap="round" fill="none"/><path d="M1165 377L1142 400M1171 378L1150 401M1179 379L1159 401M1186 380L1168 402" stroke="#006d95" stroke-width="6.5" stroke-linecap="round" fill="none"/><path d="M1237 247L1216 293" stroke="#00867a" stroke-width="5.0" stroke-linecap="round" fill="none"/><path d="M1216 293L1200 330" stroke="#00867a" stroke-width="5.5" stroke-linecap="round" fill="none"/><path d="M1114 423L1144 445M1125 423L1155 445M1137 423L1167 445" stroke="#0054ae" stroke-width="7.0" stroke-linecap="round" fill="none"/><path d="M1239 247L1219 294" stroke="#00c242" stroke-width="5.0" stroke-linecap="round" fill="none"/><path d="M1219 294L1205 331M1256 251L1245 300" stroke="#00a45e" stroke-width="6.5" stroke-linecap="round" fill="none"/><path d="M1242 248L1224 295" stroke="#00da28" stroke-width="5.0" stroke-linecap="round" fill="none"/><path d="M1224 295L1211 333" stroke="#00a45e" stroke-width="7.0" stroke-linecap="round" fill="none"/><path d="M1245 248L1228 296" stroke="#00da28" stroke-width="5.5" stroke-linecap="round" fill="none"/><path d="M1228 296L1217 334" stroke="#00a45e" stroke-width="7.5" stroke-linecap="round" fill="none"/><path d="M1249 249L1233 297M1253 250L1239 298" stroke="#00da28" stroke-width="6.0" stroke-linecap="round" fill="none"/><path d="M1233 297L1223 336" stroke="#00a45e" stroke-width="8.0" stroke-linecap="round" fill="none"/><path d="M1239 298L1230 337" stroke="#006d95" stroke-width="8.5" stroke-linecap="round" fill="none"/><path d="M1269 220L1256 251" stroke="#00867a" stroke-width="4.0" stroke-linecap="round" fill="none"/><path d="M1245 300L1238 339M1288 309L1293 351M1294 310L1301 353M1590 584L1601 595M1599 587L1610 598M1606 589L1618 600M1595 579L1613 592M1613 592L1625 602M1600 581L1619 593M1619 593L1630 603M1605 583L1623 595M1623 595L1635 604M1608 584L1627 596M1627 596L1639 605M1610 585L1629 597M1629 597L1642 606" stroke="#001de1" stroke-width="8.5" stroke-linecap="round" fill="none"/><path d="M1271 220L1261 251" stroke="#003ac8" stroke-width="4.0" stroke-linecap="round" fill="none"/><path d="M1251 301L1245 341M1257 302L1253 342M1270 305L1269 346M1276 306L1277 348M1282 308L1285 349M1549 591L1564 619M1561 593L1576 625M1573 596L1589 631M1581 589L1584 598M1584 598L1600 637M1592 592L1594 600M1594 600L1610 643M1601 595L1604 602M1604 602L1620 648M1610 598L1613 604M1613 604L1629 653M1618 600L1620 606M1620 606L1637 658M1625 602L1627 607M1627 607L1644 662M1630 603L1633 608M1633 608L1651 665M1635 604L1638 609M1638 609L1656 668M1639 605L1642 610M1642 610L1661 671M1642 606L1645 610M1645 610L1664 673" stroke="#001de1" stroke-width="9.0" stroke-linecap="round" fill="none"/><path d="M1274 221L1265 252M1276 221L1269 253M1279 222L1273 254M1281 222L1278 255" stroke="#001de1" stroke-width="4.5" stroke-linecap="round" fill="none"/><path d="M1263 304L1261 344" stroke="#001de1" stroke-width="9.5" stroke-linecap="round" fill="none"/><path d="M1283 223L1282 256M1286 223L1286 257M1288 223L1291 257M1290 224L1295 258M1292 224L1298 259M1294 224L1302 260M1296 224L1305 260M1298 225L1308 261M1300 225L1310 262M1301 225L1312 262M1303 225L1314 262M1304 225L1315 263M1305 225L1316 263M1305 225L1317 263M1306 225L1317 263M1306 225L1316 262M1307 225L1315 262" stroke="#001de1" stroke-width="4.0" stroke-linecap="round" fill="none"/><path d="M1300 312L1308 354" stroke="#001de1" stroke-width="8.0" stroke-linecap="round" fill="none"/><path d="M1306 313L1315 356" stroke="#001de1" stroke-width="7.5" stroke-linecap="round" fill="none"/><path d="M1188 325L1186 325M1186 325L1186 325M1186 325L1186 326M1186 326L1188 327" stroke="#0034b4" stroke-width="5.5" stroke-linecap="round" fill="none"/><path d="M1188 327L1190 327M1223 336L1230 337" stroke="#004c9d" stroke-width="5.5" stroke-linecap="round" fill="none"/><path d="M1190 327L1192 328" stroke="#006286" stroke-width="5.5" stroke-linecap="round" fill="none"/><path d="M1192 328L1196 329M1217 334L1223 336" stroke="#00796e" stroke-width="5.5" stroke-linecap="round" fill="none"/><path d="M1196 329L1200 330M1200 330L1205 331M1205 331L1211 333M1211 333L1217 334" stroke="#009455" stroke-width="5.5" stroke-linecap="round" fill="none"/><path d="M1230 337L1238 339M1238 339L1245 341M1245 341L1253 342M1253 342L1261 344M1261 344L1269 346M1269 346L1277 348M1277 348L1285 349M1285 349L1293 351M1293 351L1301 353M1301 353L1308 354M1308 354L1315 356M1315 356L1322 357M1322 357L1328 358M1328 358L1333 360M1333 360L1338 361M1338 361L1342 361M1342 361L1345 362M1345 362L1348 363M1348 363L1350 363M1350 363L1351 363M1351 363L1352 363M1352 363L1351 362M1351 362L1350 362" stroke="#001aca" stroke-width="5.5" stroke-linecap="round" fill="none"/><path d="M1171 350L1170 350M1170 350L1170 350M1170 350L1170 351M1170 351L1172 351M1215 360L1223 362M1344 387L1350 389M1350 389L1355 390M1355 390L1359 391M1359 391L1362 392M1362 392L1365 392M1365 392L1367 393M1367 393L1367 393M1367 393L1367 392M1367 392L1366 392" stroke="#0034b4" stroke-width="6.0" stroke-linecap="round" fill="none"/><path d="M1172 351L1175 352M1175 352L1178 353M1207 358L1215 360" stroke="#004c9d" stroke-width="6.0" stroke-linecap="round" fill="none"/><path d="M1178 353L1182 354M1182 354L1188 355M1188 355L1194 356M1194 356L1200 357M1200 357L1207 358" stroke="#006286" stroke-width="6.0" stroke-linecap="round" fill="none"/><path d="M1223 362L1232 363M1232 363L1241 365M1241 365L1250 367M1250 367L1260 369M1260 369L1269 371M1269 371L1279 373M1279 373L1288 375M1288 375L1297 377M1297 377L1306 379M1306 379L1315 380M1315 380L1323 382M1323 382L1331 384M1331 384L1338 386M1338 386L1344 387" stroke="#001aca" stroke-width="6.0" stroke-linecap="round" fill="none"/><path d="M1149 375L1148 375M1148 375L1150 375M1150 375L1152 376M1152 376L1155 376M1195 381L1205 383M1269 394L1281 396M1281 396L1292 398M1292 398L1303 400M1130 400L1136 400M1179 403L1190 404M1215 406L1227 408M1227 408L1241 410M1241 410L1254 412" stroke="#0034b4" stroke-width="6.5" stroke-linecap="round" fill="none"/><path d="M1148 375L1148 375M1205 383L1215 384M1215 384L1225 386M1225 386L1236 388M1236 388L1247 390M1247 390L1258 392M1258 392L1269 394M1122 400L1121 400M1121 400L1121 400M1121 400L1123 400M1123 400L1126 400M1126 400L1130 400M1190 404L1202 405M1202 405L1215 406" stroke="#001aca" stroke-width="6.5" stroke-linecap="round" fill="none"/><path d="M1155 376L1160 377M1303 400L1314 402M1314 402L1324 405M1324 405L1334 407M1136 400L1142 400M1254 412L1267 414M1267 414L1281 416" stroke="#004c9d" stroke-width="6.5" stroke-linecap="round" fill="none"/><path d="M1160 377L1165 377M1165 377L1171 378M1171 378L1179 379M1179 379L1186 380M1186 380L1195 381M1334 407L1343 409M1343 409L1351 411M1351 411L1359 413M1359 413L1366 415M1366 415L1372 417M1142 400L1150 401M1150 401L1159 401M1159 401L1168 402M1168 402L1179 403M1281 416L1294 419M1294 419L1307 421M1307 421L1320 423" stroke="#006286" stroke-width="6.5" stroke-linecap="round" fill="none"/><path d="M1372 417L1377 418M1377 418L1381 419M1381 419L1384 420M1384 420L1387 420M1387 420L1388 420M1388 420L1388 420M1388 420L1387 420M1320 423L1332 425M1332 425L1344 428M1344 428L1355 430M1355 430L1365 433M1365 433L1374 435M1374 435L1382 438M1382 438L1390 440M1390 440L1396 441M1396 441L1401 443M1401 443L1405 444M1405 444L1408 445M1408 445L1410 445M1410 445L1410 445M1410 445L1409 445" stroke="#00796e" stroke-width="6.5" stroke-linecap="round" fill="none"/><path d="M1076 425L1075 425M1075 425L1076 424M1076 424L1079 424M1079 424L1083 423M1083 423L1089 423M1089 423L1096 423M1096 423L1104 423M1104 423L1114 423" stroke="#001aca" stroke-width="7.0" stroke-linecap="round" fill="none"/><path d="M1114 423L1125 423M1164 424L1179 425M1179 425L1194 426M1103 450L1103 449M1103 449L1105 449M1105 449L1108 448M1108 448L1112 447M1112 447L1118 447M1118 447L1125 446M1125 446L1134 446M1134 446L1144 445M1144 445L1155 445M1155 445L1167 445" stroke="#0034b4" stroke-width="7.0" stroke-linecap="round" fill="none"/><path d="M1125 423L1137 423M1137 423L1150 423M1150 423L1164 424M1194 426L1210 427M1210 427L1226 429M1167 445L1181 445M1181 445L1195 445" stroke="#004c9d" stroke-width="7.0" stroke-linecap="round" fill="none"/><path d="M1226 429L1243 431M1243 431L1259 433M1195 445L1210 446M1210 446L1225 446" stroke="#006286" stroke-width="7.0" stroke-linecap="round" fill="none"/><path d="M1259 433L1276 435M1276 435L1293 438M1293 438L1309 440M1309 440L1325 442M1325 442L1340 445M1340 445L1354 447M1354 447L1367 451M1367 451L1380 454M1380 454L1391 456M1391 456L1402 459M1402 459L1411 461M1411 461L1419 463M1419 463L1425 465M1425 465L1431 467M1431 467L1434 467M1434 467L1437 468M1437 468L1438 468M1438 468L1437 468M1225 446L1241 447M1241 447L1258 449M1258 449L1274 451M1274 451L1291 453M1291 453L1307 455M1307 455L1324 458M1324 458L1340 460M1340 460L1356 462M1356 462L1371 465M1371 465L1386 468M1386 468L1399 471M1399 471L1411 474M1411 474L1423 477M1423 477L1433 481M1433 481L1443 483M1443 483L1451 486M1451 486L1458 488M1458 488L1463 489M1463 489L1467 491M1467 491L1470 491M1470 491L1471 492M1471 492L1471 492" stroke="#00796e" stroke-width="7.0" stroke-linecap="round" fill="none"/><path d="M1136 472L1137 471M1137 471L1139 471M1139 471L1142 470M1142 470L1147 469" stroke="#0034b4" stroke-width="7.5" stroke-linecap="round" fill="none"/><path d="M1147 469L1153 468M1153 468L1161 468" stroke="#004c9d" stroke-width="7.5" stroke-linecap="round" fill="none"/><path d="M1161 468L1169 467M1169 467L1179 466M1179 466L1191 466M1164 493L1165 492M1165 492L1167 491" stroke="#006286" stroke-width="7.5" stroke-linecap="round" fill="none"/><path d="M1191 466L1203 465M1203 465L1216 465M1216 465L1230 465M1230 465L1244 465M1244 465L1260 466M1260 466L1276 467M1276 467L1292 468M1292 468L1308 470M1308 470L1324 472M1324 472L1341 474M1341 474L1357 477M1357 477L1373 479M1373 479L1388 481M1388 481L1403 484M1403 484L1417 487M1417 487L1431 490M1431 490L1443 494M1443 494L1454 497M1454 497L1465 501M1465 501L1474 504M1474 504L1482 506M1482 506L1489 508M1489 508L1495 510M1495 510L1499 512M1499 512L1502 513M1502 513L1504 514M1504 514L1504 514M1167 491L1171 491M1171 491L1176 490M1176 490L1182 489M1182 489L1190 488M1190 488L1199 487M1199 487L1209 486M1209 486L1221 485M1221 485L1233 484M1233 484L1246 484M1246 484L1260 484M1260 484L1275 484M1275 484L1290 484M1290 484L1306 485M1306 485L1322 486M1322 486L1338 488M1338 488L1354 490M1354 490L1371 492M1371 492L1387 495M1387 495L1403 497M1403 497L1418 499M1418 499L1433 502M1433 502L1447 505M1447 505L1460 509M1460 509L1473 513M1473 513L1484 516M1484 516L1494 520M1494 520L1504 523M1504 523L1512 526M1512 526L1519 528M1519 528L1525 531M1525 531L1530 532M1530 532L1533 534M1533 534L1535 535M1535 535L1536 535" stroke="#00796e" stroke-width="7.5" stroke-linecap="round" fill="none"/><path d="M1187 512L1188 511M1188 511L1191 510M1191 510L1195 509M1195 509L1201 508M1201 508L1207 507M1207 507L1215 506M1215 506L1225 505M1225 505L1235 504M1235 504L1246 503M1246 503L1259 502M1259 502L1272 502M1272 502L1286 501M1286 501L1300 501M1300 501L1316 501M1316 501L1331 502M1331 502L1347 503M1347 503L1364 505M1364 505L1380 507M1380 507L1396 509M1396 509L1412 511M1412 511L1428 514M1428 514L1443 516M1443 516L1458 519M1458 519L1472 522M1472 522L1485 526M1485 526L1497 530M1497 530L1509 533M1509 533L1519 537M1519 537L1528 540M1528 540L1537 543M1537 543L1544 546M1544 546L1550 548M1550 548L1555 550M1555 550L1559 551M1559 551L1561 552M1561 552L1562 553M1208 530L1210 529M1210 529L1213 528M1213 528L1218 527M1218 527L1223 526M1223 526L1230 525M1230 525L1239 524M1239 524L1248 523M1248 523L1258 522M1258 522L1270 520M1270 520L1282 519M1282 519L1296 518M1296 518L1310 518M1310 518L1324 518M1324 518L1340 518M1340 518L1355 518M1355 518L1371 520M1371 520L1387 521M1387 521L1403 523M1403 523L1419 525M1419 525L1435 527M1435 527L1451 529M1451 529L1466 532M1466 532L1481 534M1481 534L1495 538M1495 538L1508 541M1508 541L1520 545M1520 545L1532 549M1532 549L1542 553M1542 553L1552 556M1552 556L1560 559M1560 559L1568 562M1568 562L1574 564M1574 564L1579 566M1579 566L1583 568M1583 568L1586 569M1226 546L1229 545M1229 545L1232 544M1232 544L1237 543M1237 543L1243 542M1243 542L1251 541M1251 541L1259 540M1259 540L1269 539M1269 539L1279 537M1279 537L1291 536M1291 536L1303 535M1303 535L1317 534M1317 534L1331 534M1331 534L1345 533M1345 533L1361 533M1361 533L1376 534M1376 534L1392 535M1392 535L1408 536M1408 536L1424 538M1424 538L1440 540M1440 540L1456 542M1456 542L1472 544M1472 544L1487 546M1487 546L1502 549M1502 549L1516 552M1516 552L1529 556M1529 556L1541 560M1541 560L1552 564M1552 564L1563 567M1563 567L1572 571M1572 571L1581 574" stroke="#00796e" stroke-width="8.0" stroke-linecap="round" fill="none"/><path d="M1586 569L1587 570M1581 574L1588 577M1588 577L1595 579M1595 579L1600 581" stroke="#006286" stroke-width="8.0" stroke-linecap="round" fill="none"/><path d="M1600 581L1605 583M1605 583L1608 584M1608 584L1610 585" stroke="#004c9d" stroke-width="8.0" stroke-linecap="round" fill="none"/><path d="M1242 560L1245 559M1245 559L1249 559M1249 559L1254 558M1254 558L1260 557M1260 557L1268 556M1268 556L1277 555M1277 555L1286 554M1286 554L1297 553M1297 553L1309 552M1309 552L1321 551M1321 551L1335 550M1335 550L1349 550M1349 550L1364 549M1364 549L1379 549M1379 549L1394 550M1394 550L1410 551M1410 551L1426 552M1426 552L1442 554M1442 554L1458 556M1458 556L1474 558M1474 558L1489 560M1489 560L1505 561M1505 561L1519 564M1519 564L1533 567M1533 567L1546 570M1546 570L1558 574M1558 574L1570 577M1256 574L1259 574M1259 574L1264 573M1264 573L1269 572M1269 572L1276 572M1276 572L1284 571M1284 571L1293 570M1293 570L1302 570M1302 570L1313 569M1313 569L1325 568M1325 568L1337 567M1337 567L1351 566M1351 566L1364 566M1364 566L1379 566M1379 566L1394 566M1394 566L1409 566M1409 566L1425 567M1425 567L1440 568M1440 568L1456 570M1456 570L1472 572M1472 572L1487 573M1487 573L1502 575M1502 575L1517 576M1517 576L1532 578M1532 578L1545 580M1545 580L1558 583" stroke="#00796e" stroke-width="8.5" stroke-linecap="round" fill="none"/><path d="M1570 577L1580 581M1580 581L1590 584M1558 583L1570 587M1570 587L1581 589" stroke="#006286" stroke-width="8.5" stroke-linecap="round" fill="none"/><path d="M1590 584L1599 587M1599 587L1606 589M1606 589L1613 592M1581 589L1592 592M1592 592L1601 595" stroke="#004c9d" stroke-width="8.5" stroke-linecap="round" fill="none"/><path d="M1613 592L1619 593M1619 593L1623 595M1623 595L1627 596M1627 596L1629 597M1601 595L1610 598M1610 598L1618 600" stroke="#0034b4" stroke-width="8.5" stroke-linecap="round" fill="none"/><path d="M1618 600L1625 602M1625 602L1630 603M1630 603L1635 604M1635 604L1639 605M1639 605L1642 606" stroke="#001aca" stroke-width="8.5" stroke-linecap="round" fill="none"/><path d="M1263 581L1267 581M1267 581L1271 581M1271 581L1277 580M1277 580L1284 580M1284 580L1292 580M1292 580L1301 580M1301 580L1310 580M1310 580L1321 579M1321 579L1333 579M1333 579L1345 579M1345 579L1358 578M1358 578L1372 578M1372 578L1386 578M1386 578L1401 579M1401 579L1416 579M1416 579L1431 580M1431 580L1446 581M1446 581L1462 583M1462 583L1477 585M1477 585L1492 586M1492 586L1507 587M1507 587L1522 588M1522 588L1536 589M1268 586L1272 586M1272 586L1277 585M1277 585L1283 584M1283 584L1290 584M1290 584L1299 583M1299 583L1308 582M1308 582L1318 582M1318 582L1329 581M1329 581L1341 581M1341 581L1354 580M1354 580L1368 580M1368 580L1382 580M1382 580L1396 581M1396 581L1412 582M1412 582L1427 584M1427 584L1443 587M1443 587L1458 590M1458 590L1474 593M1474 593L1490 597" stroke="#00796e" stroke-width="9.0" stroke-linecap="round" fill="none"/><path d="M1536 589L1549 591M1549 591L1561 593M1490 597L1505 601M1505 601L1521 605" stroke="#006286" stroke-width="9.0" stroke-linecap="round" fill="none"/><path d="M1561 593L1573 596M1573 596L1584 598M1521 605L1536 609" stroke="#004c9d" stroke-width="9.0" stroke-linecap="round" fill="none"/><path d="M1584 598L1594 600M1594 600L1604 602M1604 602L1613 604M1536 609L1550 614M1550 614L1564 619" stroke="#0034b4" stroke-width="9.0" stroke-linecap="round" fill="none"/><path d="M1613 604L1620 606M1620 606L1627 607M1627 607L1633 608M1633 608L1638 609M1638 609L1642 610M1642 610L1645 610M1564 619L1576 625M1576 625L1589 631M1589 631L1600 637M1600 637L1610 643M1610 643L1620 648M1620 648L1629 653M1629 653L1637 658M1637 658L1644 662M1644 662L1651 665M1651 665L1656 668M1656 668L1661 671M1661 671L1664 673" stroke="#001aca" stroke-width="9.0" stroke-linecap="round" fill="none"/><path d="M1188 324L1186 324M1186 325L1187 326M1171 349L1170 349M1171 350L1172 350M1216 359L1223 361M1345 387L1349 388M1350 388L1354 389M1355 389L1359 390M1359 390L1362 391M1363 391L1365 392M1365 392L1366 392M1367 392L1366 391M1149 374L1148 374M1149 374L1150 374M1150 375L1152 375M1152 375L1155 375M1196 381L1204 382M1270 393L1280 395M1282 396L1291 397M1293 398L1302 400" stroke="#3860c4" stroke-width="2.0" stroke-linecap="round" fill="none"/><path d="M1188 326L1189 327M1224 335L1230 336M1172 351L1174 351M1175 351L1178 352M1208 358L1214 359M1156 375L1159 376M1304 400L1313 402M1315 402L1323 404M1325 404L1333 406" stroke="#3873b2" stroke-width="2.0" stroke-linecap="round" fill="none"/><path d="M1190 327L1192 327M1178 352L1182 353M1183 353L1187 354M1188 354L1193 355M1194 355L1200 356M1201 356L1207 358M1160 376L1165 377M1165 377L1171 377M1172 378L1178 378M1179 378L1186 379M1187 380L1194 381M1335 406L1342 408M1344 408L1351 410M1352 411L1358 412M1360 412L1365 414M1366 414L1371 416" stroke="#3884a0" stroke-width="2.0" stroke-linecap="round" fill="none"/><path d="M1193 328L1196 328M1217 334L1223 335M1372 416L1377 417M1377 417L1381 418M1382 418L1384 419M1385 419L1386 419M1387 419L1388 420M1388 420L1387 419" stroke="#38968d" stroke-width="2.0" stroke-linecap="round" fill="none"/><path d="M1196 329L1200 330M1201 330L1205 331M1206 331L1210 332M1211 332L1216 333" stroke="#38ab7a" stroke-width="2.0" stroke-linecap="round" fill="none"/><path d="M1231 337L1237 338M1238 338L1245 340M1246 340L1253 342M1254 342L1261 343M1262 344L1269 345M1270 345L1277 347M1278 347L1285 349M1286 349L1293 350M1294 351L1300 352M1301 352L1308 353M1309 354L1315 355M1316 355L1321 356M1322 356L1327 358M1328 358L1333 359M1333 359L1337 360M1338 360L1342 361M1342 361L1345 361M1346 361L1348 362M1348 362L1350 362M1350 362L1351 362M1351 362L1350 361M1224 361L1231 362M1233 363L1240 364M1242 364L1250 366M1251 366L1259 368M1260 368L1268 370M1270 370L1278 372M1279 372L1287 374M1289 374L1297 376M1298 376L1306 378M1307 378L1314 380M1316 380L1322 381M1324 382L1330 383M1331 384L1337 385M1338 385L1344 387M1205 382L1214 383M1215 384L1224 385M1226 385L1235 387M1237 387L1246 389M1248 389L1257 391M1259 391L1268 393" stroke="#384cd5" stroke-width="2.0" stroke-linecap="round" fill="none"/><path d="M1122 399L1123 399M1123 399L1126 399M1127 399L1130 399M1191 403L1201 404M1203 404L1214 405M1075 424L1076 423M1077 423L1079 423M1079 423L1083 423M1084 422L1088 422M1089 422L1095 422M1096 422L1103 422M1105 422L1113 422" stroke="#384cd5" stroke-width="2.5" stroke-linecap="round" fill="none"/><path d="M1131 399L1135 399M1180 402L1189 403M1216 405L1226 407M1228 407L1240 409M1242 409L1253 411M1115 422L1124 422M1165 423L1177 424M1180 424L1193 425M1103 448L1105 448M1105 448L1107 447M1108 447L1112 447M1113 447L1118 446M1119 446L1125 446M1126 446L1133 445M1135 445L1143 445M1145 445L1154 444M1156 444L1166 444M1137 470L1139 470M1139 470L1142 469M1143 469L1147 468" stroke="#3860c4" stroke-width="2.5" stroke-linecap="round" fill="none"/><path d="M1136 399L1142 399M1255 411L1266 413M1268 413L1280 415M1126 422L1136 422M1138 422L1149 422M1151 422L1163 423M1195 425L1209 426M1211 426L1225 428M1169 444L1180 444M1182 444L1194 444M1147 468L1153 468M1154 467L1160 467" stroke="#3873b2" stroke-width="2.5" stroke-linecap="round" fill="none"/><path d="M1143 399L1150 400M1151 400L1158 400M1160 400L1168 401M1169 401L1178 402M1282 416L1293 418M1295 418L1306 420M1308 420L1319 422M1228 428L1241 430M1244 430L1258 432M1196 444L1208 445M1211 445L1224 445M1161 467L1169 466M1170 466L1179 465M1180 465L1190 465M1164 492L1165 491M1165 491L1167 491" stroke="#3884a0" stroke-width="2.5" stroke-linecap="round" fill="none"/><path d="M1321 422L1331 424M1333 425L1343 427M1345 427L1354 429M1356 430L1364 432M1366 432L1373 434M1375 435L1382 437M1383 437L1389 439M1390 439L1395 441M1396 441L1401 442M1401 442L1405 443M1405 443L1408 444M1408 444L1409 444M1261 432L1275 434M1277 435L1291 437M1294 437L1307 439M1310 439L1323 441M1326 442L1338 444M1341 444L1353 446M1355 447L1366 449M1368 450L1379 452M1381 453L1390 455M1392 456L1401 458M1402 458L1410 460M1411 461L1418 463M1419 463L1425 464M1426 464L1430 466M1431 466L1434 467M1435 467L1437 467M1226 446L1240 446M1242 447L1256 448M1259 448L1273 450M1275 450L1289 452M1292 452L1306 454M1309 455L1323 457M1325 457L1339 459M1341 459L1355 461M1357 461L1370 464M1372 464L1384 467M1387 467L1398 470M1400 470L1410 473M1412 474L1422 476M1424 477L1433 479M1434 480L1442 482M1443 483L1450 485M1451 485L1457 487M1458 487L1463 488M1463 489L1467 490M1467 490L1470 491M1470 491L1471 491M1192 465L1202 464M1204 464L1215 464M1217 464L1229 464M1231 464L1243 464M1246 464L1259 465M1261 465L1274 466M1277 466L1290 467M1293 467L1307 469M1309 469L1323 471M1326 471L1339 473M1342 474L1355 476M1358 476L1371 478M1374 478L1387 480M1389 480L1402 483M1404 483L1416 486M1418 486L1430 489M1432 490L1442 493M1444 493L1453 496M1455 497L1464 499M1465 500L1473 502M1475 503L1481 505M1483 506L1488 507M1489 508L1494 509M1495 510L1499 511M1499 511L1502 512M1502 512L1504 513M1167 490L1171 490M1171 490L1176 489M1177 489L1182 488M1183 488L1190 487M1191 487L1199 486M1200 486L1209 485M1210 485L1220 484M1222 484L1232 484M1234 483L1245 483M1247 483L1259 483M1261 483L1274 483M1276 483L1289 483M1291 483L1305 484M1307 484L1321 485M1323 485L1337 487M1339 487L1353 489M1356 489L1369 491M1372 492L1385 493M1388 494L1401 496M1404 496L1417 498M1419 498L1432 501M1434 501L1446 504M1448 505L1459 508M1461 508L1472 511M1474 512L1483 515M1485 516L1494 519M1495 519L1503 522M1504 522L1511 525M1513 525L1519 527M1520 528L1525 529M1525 530L1529 531M1530 531L1533 533M1533 533L1535 534M1187 511L1188 510M1188 510L1191 510M1191 509L1195 509M1196 508L1200 508M1201 507L1207 507M1208 506L1215 506M1216 505L1224 505M1225 504L1234 503M1236 503L1245 502M1247 502L1258 502M1260 501L1271 501M1273 501L1285 500M1287 500L1299 500M1302 500L1315 501M1317 501L1330 501M1333 501L1346 502M1349 503L1362 504M1365 504L1378 506M1381 506L1395 508M1397 508L1411 510M1413 511L1426 512M1429 513L1442 515M1444 515L1457 518M1459 518L1471 521M1473 521L1484 524M1486 525L1496 528M1498 529L1508 532M1510 532L1518 536M1520 536L1528 539M1529 539L1536 542M1537 542L1544 545M1545 545L1550 547M1551 547L1555 549M1555 549L1558 550M1559 550L1561 551M1561 551L1562 552" stroke="#38968d" stroke-width="2.5" stroke-linecap="round" fill="none"/><path d="M1208 529L1210 528M1210 528L1213 527M1213 527L1217 526M1218 526L1223 525M1224 525L1230 524M1231 524L1238 523M1239 523L1247 522M1249 522L1258 521M1259 521L1269 520M1271 519L1281 519M1283 518L1295 518M1297 517L1309 517M1311 517L1323 517M1326 517L1338 517M1341 517L1354 517M1357 518L1370 519M1372 519L1386 520M1389 520L1402 522M1405 522L1418 524M1421 524L1434 526M1437 527L1450 528M1452 529L1465 530M1468 531L1480 533M1482 534L1494 536M1496 537L1507 540M1509 541L1519 544M1521 545L1531 548M1533 548L1541 552M1543 552L1551 555M1552 556L1560 558M1561 559L1567 561M1568 561L1573 563M1574 564L1579 565M1579 566L1583 567M1583 567L1586 568M1227 545L1229 544M1229 544L1232 543M1233 543L1237 542M1238 542L1243 541M1244 541L1250 540M1251 540L1258 539M1260 539L1268 538M1269 538L1278 537M1280 536L1290 535M1292 535L1302 534M1304 534L1316 533M1318 533L1330 533M1332 532L1344 532M1347 532L1359 532M1362 532L1375 533M1377 533L1391 534M1393 534L1407 535M1409 535L1423 537M1425 537L1439 539M1441 539L1455 541M1457 541L1470 543M1473 543L1486 545M1488 545L1501 548M1503 548L1515 551M1517 551L1528 555M1530 555L1540 559M1542 559L1551 562M1553 563L1562 566M1563 567L1572 570M1573 570L1580 573M1242 559L1244 558M1245 558L1248 558M1249 558L1253 557M1254 557L1260 556M1261 556L1267 555M1269 555L1276 554M1277 554L1286 553M1287 553L1296 552M1298 552L1308 551M1310 551L1320 550M1322 550L1334 549M1336 549L1348 549M1350 548L1362 548M1365 548L1378 548M1380 548L1393 549M1396 549L1409 550M1412 550L1425 551M1427 551L1441 553M1443 553L1457 555M1459 555L1473 557M1475 557L1488 558M1491 559L1504 560M1506 561L1518 563M1520 563L1532 565M1534 566L1545 569M1547 570L1557 573M1559 573L1569 576M1256 573L1259 573M1260 572L1263 572M1264 572L1269 571M1270 571L1275 571M1277 571L1283 570M1284 570L1292 569M1293 569L1302 569M1303 568L1312 568M1314 568L1324 567M1326 567L1336 566M1338 566L1349 565M1352 565L1363 565M1366 565L1378 565M1380 565L1393 565M1395 565L1408 565M1410 565L1424 566M1426 566L1439 567M1442 567L1455 569M1457 569L1470 571M1473 571L1486 572M1488 572L1501 573M1504 574L1516 575M1519 575L1531 577M1533 577L1544 579M1546 580L1557 582M1263 580L1266 580M1267 580L1271 580M1272 580L1277 579M1278 579L1283 579M1284 579L1291 579M1292 579L1300 579M1301 579L1310 579M1311 579L1320 578M1322 578L1332 578M1334 578L1344 578M1346 577L1357 577M1359 577L1371 577M1373 577L1385 577M1387 577L1400 578M1402 578L1414 578M1417 578L1430 579M1432 579L1445 580M1447 581L1460 582M1463 582L1476 583M1478 584L1491 585M1493 585L1506 586M1508 586L1520 586M1523 587L1535 588M1268 585L1272 585M1272 584L1277 584M1278 584L1283 583M1284 583L1290 583M1291 583L1298 582M1299 582L1307 581M1309 581L1317 581M1319 581L1329 580M1330 580L1340 579M1342 579L1353 579M1355 579L1367 579M1369 579L1381 579M1383 579L1395 580M1398 580L1410 581M1413 581L1426 583M1428 583L1441 585M1444 586L1457 588M1460 589L1473 592M1475 593L1488 596" stroke="#38968d" stroke-width="3.0" stroke-linecap="round" fill="none"/><path d="M1586 568L1587 569M1581 573L1588 576M1589 576L1594 578M1595 578L1600 580M1571 577L1580 580M1581 580L1589 583M1559 583L1569 585M1571 586L1580 588M1537 588L1548 590M1550 590L1560 592M1491 597L1504 600M1506 600L1519 604" stroke="#3884a0" stroke-width="3.0" stroke-linecap="round" fill="none"/><path d="M1601 580L1604 582M1605 582L1607 583M1608 583L1610 584M1591 583L1598 586M1599 586L1606 588M1607 589L1613 590M1582 589L1591 591M1592 592L1600 594M1562 592L1572 595M1574 595L1583 597M1522 604L1534 607" stroke="#3873b2" stroke-width="3.0" stroke-linecap="round" fill="none"/><path d="M1614 591L1618 592M1619 593L1623 594M1624 594L1627 595M1627 595L1629 596M1602 594L1609 596M1611 597L1617 598M1585 597L1594 599M1595 599L1603 601M1605 602L1612 603M1537 608L1549 612M1551 613L1563 617" stroke="#3860c4" stroke-width="3.0" stroke-linecap="round" fill="none"/><path d="M1618 599L1624 600M1625 601L1630 602M1631 602L1635 603M1636 603L1639 604M1639 604L1642 605M1613 603L1620 605M1621 605L1627 606M1628 606L1633 607M1634 607L1638 608M1639 608L1642 608M1643 609L1645 609M1565 618L1575 623M1577 624L1588 629M1589 630L1599 635M1601 636L1610 641M1611 642L1619 647M1621 647L1628 652M1630 652L1637 656M1638 657L1644 660M1645 661L1650 664M1651 665L1656 667M1656 668L1660 670M1661 670L1664 672" stroke="#384cd5" stroke-width="3.0" stroke-linecap="round" fill="none"/><path d="M1251.5 214.4L1251.6 214.6M1251.6 214.6L1251.9 214.9M1251.9 214.9L1252.3 215.1M1252.3 215.1L1253.0 215.4M1253.0 215.4L1253.9 215.8M1253.9 215.8L1255.0 216.2M1255.0 216.2L1256.2 216.6M1256.2 216.6L1257.7 217.0M1257.7 217.0L1259.3 217.4M1259.3 217.4L1261.0 217.9M1261.0 217.9L1262.9 218.3M1262.9 218.3L1264.9 218.8M1264.9 218.8L1267.0 219.3M1267.0 219.3L1269.2 219.8M1269.2 219.8L1271.5 220.3M1271.5 220.3L1273.8 220.7M1273.8 220.7L1276.2 221.2M1276.2 221.2L1278.6 221.7M1278.6 221.7L1281.0 222.1M1232.9 245.0L1231.7 245.0M1231.7 245.0L1231.1 245.0M1231.1 245.0L1230.9 245.1M1230.9 245.1L1231.2 245.3M1231.2 245.3L1231.9 245.6M1231.9 245.6L1233.1 245.9M1233.1 245.9L1234.8 246.3M1234.8 246.3L1236.9 246.7M1236.9 246.7L1239.4 247.2M1239.4 247.2L1242.2 247.8M1242.2 247.8L1245.3 248.4M1245.3 248.4L1248.8 249.1M1248.8 249.1L1252.5 249.8M1252.5 249.8L1256.4 250.6M1256.4 250.6L1260.6 251.4M1260.6 251.4L1264.8 252.2M1264.8 252.2L1269.1 253.1M1269.1 253.1L1273.5 254.0M1273.5 254.0L1277.9 254.9M1207.7 290.0L1206.4 290.0M1206.4 290.0L1205.7 290.2M1205.7 290.2L1205.8 290.5M1205.8 290.5L1206.5 290.8M1206.5 290.8L1207.8 291.3M1207.8 291.3L1209.8 291.9M1209.8 291.9L1212.5 292.6M1212.5 292.6L1215.7 293.3M1215.7 293.3L1219.4 294.2M1219.4 294.2L1223.7 295.1M1223.7 295.1L1228.4 296.1M1228.4 296.1L1233.5 297.2M1233.5 297.2L1238.9 298.4M1238.9 298.4L1244.7 299.6M1244.7 299.6L1250.7 300.9M1250.7 300.9L1256.9 302.2M1256.9 302.2L1263.2 303.6M1263.2 303.6L1269.6 305.0M1269.6 305.0L1276.0 306.4" stroke="#0018c0" stroke-width="2.6" stroke-dasharray="2.5,1.8" fill="none"/><path d="M1252 215L1232 245L1207 290M1252 215L1231 245L1206 290M1252 215L1231 245L1206 290M1253 215L1231 245L1206 291M1253 216L1231 245L1207 291M1254 216L1232 246L1209 291M1256 216L1234 246L1211 292M1257 217L1236 246L1214 293M1258 217L1238 247L1217 293M1260 218L1241 247L1221 294M1262 218L1244 248L1226 295M1264 219L1247 248L1231 296M1266 219L1251 249L1236 297M1268 220L1254 250L1242 298M1270 220L1258 251L1248 300M1273 221L1263 251L1254 301M1275 221L1267 252L1260 302M1277 221L1271 253L1266 304M1280 222L1276 254L1273 305M1282 222L1280 255L1279 306M1285 223L1284 256L1285 308M1287 223L1289 257L1292 309M1289 223L1293 257L1297 310M1291 224L1296 258L1303 312M1293 224L1300 259L1308 313M1295 224L1303 260L1313 314M1297 225L1306 261L1318 315M1299 225L1309 261L1322 316M1301 225L1311 262L1325 317M1302 225L1313 262L1328 318M1303 225L1315 262L1330 318M1304 225L1316 263L1332 318M1305 225L1317 263L1333 319M1306 225L1317 263L1334 319M1306 225L1316 262L1333 319M1306 225L1315 262L1332 318" stroke="#000a60" stroke-width="1.0" fill="none" opacity="0.35"/><path d="M810 228L805 280M810 229L805 281M810 229L805 281M811 230L806 282M812 231L807 283M813 232L808 283M814 232L809 284M816 233L811 284M817 234L813 285M819 234L815 285M821 234L817 285M823 235L820 285M825 235L822 285M827 235L825 285" stroke="#ff0000" stroke-width="4.0" stroke-linecap="round" fill="none"/><path d="M805 280L793 345M834 235L836 284" stroke="#d9ff00" stroke-width="4.5" stroke-linecap="round" fill="none"/><path d="M793 345L780 390M877 278L903 345M914 339L942 384M917 338L947 382M920 337L951 380M923 335L954 378M925 334L957 376M927 333L960 375M928 333L963 374M929 332L965 373" stroke="#001de1" stroke-width="5.0" stroke-linecap="round" fill="none"/><path d="M780 390L765 425M873 279L898 346M911 341L938 386M954 378L993 411M957 376L998 409M960 375L1002 408M963 374L1006 406M965 373L1009 405" stroke="#001de1" stroke-width="5.5" stroke-linecap="round" fill="none"/><path d="M765 425L748 455M748 455L725 485M866 280L886 348M870 280L892 347M907 343L933 389M951 380L988 414M1002 408L1038 431M1006 406L1043 429M1009 405L1047 428" stroke="#001de1" stroke-width="6.0" stroke-linecap="round" fill="none"/><path d="M725 485L702 510M896 500L898 524M898 524L897 547M913 499L917 523M917 523L918 546M853 282L868 350M930 498L936 522M936 522L938 545M858 281L874 349M946 497L954 521M954 521L958 545M862 281L880 348M962 497L972 521M972 521L979 544M978 497L990 521M990 521L998 545M994 497L1008 522M1008 522L1018 547M1009 497L1025 522M1025 522L1037 547M1020 490L1037 515M1037 515L1050 538M1029 482L1046 505M1046 505L1059 527M1037 476L1056 498M1056 498L1070 519M1046 471L1066 492M1066 492L1081 512M947 382L983 416M1055 465L1076 486M1076 486L1092 505M1063 461L1086 481M1086 481L1103 500M1072 457L1096 477M1096 477L1114 495M998 409L1032 433M1079 454L1105 473M1105 473L1125 491M1087 452L1114 471M1114 471L1135 488M1094 449L1122 468M1122 468L1145 486M1100 448L1129 467M1129 467L1154 485" stroke="#001de1" stroke-width="6.5" stroke-linecap="round" fill="none"/><path d="M702 510L679 535M844 607L839 624M839 624L832 639M832 639L821 654M868 605L865 622M865 622L858 637M858 637L849 652M849 652L836 666M893 604L890 621M890 621L885 636M885 636L877 651M877 651L865 665M917 603L916 620M916 620L911 636M911 636L905 651M905 651L894 664M942 603L941 620M941 620L938 636M938 636L932 651M932 651L923 665M966 603L966 620M966 620L964 637M964 637L960 652M960 652L952 666M990 604L991 622M991 622L991 638M991 638L987 654M987 654L981 668M1013 606L1016 624M1016 624L1016 641M1016 641L1014 657M1014 657L1009 672M1037 609L1040 627M1040 627L1042 645M1042 645L1041 661M1041 661L1037 677M898 346L922 395M1060 610L1065 629M1065 629L1067 647M1067 647L1067 664M1067 664L1065 680M1074 598L1079 616M1079 616L1082 633M1082 633L1083 649M1083 649L1081 663M933 389L965 426M1084 583L1089 600M1089 600L1092 615M1092 615L1093 629M1093 629L1091 642M938 386L971 423M1096 572L1102 588M1102 588L1105 602M1105 602L1106 615M1106 615L1105 628M1109 563L1116 577M1116 577L1120 591M1120 591L1121 603M1121 603L1121 614M1123 554L1130 568M1130 568L1135 581M1135 581L1137 592M1137 592L1138 603M1137 547L1145 560M1145 560L1151 572M1151 572L1154 583M1154 583L1156 593M1151 541L1160 554M1160 554L1167 565M1167 565L1171 575M1171 575L1174 585M1165 536L1175 549M1175 549L1183 559M1183 559L1189 569M1189 569L1193 578M1179 532L1190 545M1190 545L1199 555M1199 555L1206 565M1206 565L1212 573M1193 530L1205 542M1205 542L1215 552M1215 552L1224 561M1224 561L1231 569M1206 528L1219 540M1219 540L1231 550M1231 550L1241 559M1241 559L1249 567" stroke="#001de1" stroke-width="7.5" stroke-linecap="round" fill="none"/><path d="M679 535L660 555M835 552L830 573M830 573L825 591M825 591L820 609M856 550L852 571M852 571L848 589M848 589L844 607M876 548L874 569M874 569L872 588M872 588L868 605M897 547L896 568M896 568L895 586M895 586L893 604M918 546L918 567M918 567L918 585M918 585L917 603M938 545L940 566M940 566L941 585M941 585L942 603M958 545L962 566M962 566L964 585M964 585L966 603M979 544L983 566M983 566L987 586M987 586L990 604M998 545L1005 567M1005 567L1010 587M1010 587L1013 606M1018 547L1025 569M1025 569L1032 590M1032 590L1037 609M1037 547L1046 570M1046 570L1053 591M1053 591L1060 610M903 345L928 392M1050 538L1060 560M1060 560L1067 580M1067 580L1074 598M1059 527L1069 547M1069 547L1077 566M1077 566L1084 583M1070 519L1081 538M1081 538L1089 556M1089 556L1096 572M942 384L977 419M1081 512L1093 530M1093 530L1102 547M1102 547L1109 563M1092 505L1105 523M1105 523L1115 539M1115 539L1123 554M1103 500L1117 517M1117 517L1128 533M1128 533L1137 547M993 411L1027 436M1114 495L1129 512M1129 512L1141 527M1141 527L1151 541M1125 491L1141 508M1141 508L1154 522M1154 522L1165 536M1135 488L1152 505M1152 505L1166 519M1166 519L1179 532M1043 429L1094 449M1145 486L1163 502M1163 502L1179 516M1179 516L1193 530M1047 428L1100 448M1154 485L1174 501M1174 501L1190 515M1190 515L1206 528" stroke="#001de1" stroke-width="7.0" stroke-linecap="round" fill="none"/><path d="M660 555L643 572M643 572L626 590M729 487L707 512M811 575L806 594M806 594L799 612" stroke="#0054ae" stroke-width="7.0" stroke-linecap="round" fill="none"/><path d="M626 590L608 606M608 606L588 620M588 620L564 634M564 634L534 647M577 635L548 648M799 612L792 629M792 629L783 644M783 644L770 659M820 609L814 626M814 626L805 641M805 641L794 656M794 656L778 670M821 654L807 667" stroke="#0054ae" stroke-width="7.5" stroke-linecap="round" fill="none"/><path d="M534 647L511 659M511 659L502 670M502 670L495 680M495 680L489 690M489 690L485 699M548 648L526 660M526 660L517 671M517 671L511 681M511 681L506 691M506 691L502 700M562 649L541 661M541 661L533 672M533 672L527 682M527 682L523 692M523 692L519 701M659 722L657 732M677 725L675 735M697 713L695 724M695 724L693 733M715 711L713 721M713 721L711 731M737 697L734 708M734 708L732 719M732 719L730 728M778 670L766 682M766 682L762 694M762 694L759 705M759 705L757 716M757 716L755 725M807 667L795 680M795 680L792 692M792 692L790 703M790 703L788 713M788 713L786 722M820 701L819 711M819 711L817 720" stroke="#0054ae" stroke-width="8.0" stroke-linecap="round" fill="none"/><path d="M485 699L481 707M481 707L477 714M477 714L474 721M502 700L498 708M498 708L495 715M495 715L492 722M519 701L516 709M516 709L513 716M513 716L511 723M534 710L531 718M531 718L529 725M550 719L548 727M568 721L566 728M586 723L584 731M605 719L604 727M604 727L602 734M622 724L621 732M621 732L620 740M641 723L639 731M639 731L638 739M638 739L637 747M657 732L655 740M655 740L654 748M654 748L652 757M675 735L673 743M673 743L672 751M672 751L670 760M693 733L691 742M691 742L690 750M690 750L689 758M711 731L710 739M710 739L708 747M708 747L707 756M730 728L728 736M728 736L727 744M727 744L725 753M755 725L754 733M754 733L752 741M752 741L751 750M786 722L784 730M784 730L783 738M783 738L782 747M817 720L815 728M815 728L814 736M814 736L812 745" stroke="#0054ae" stroke-width="8.5" stroke-linecap="round" fill="none"/><path d="M805 281L793 346M805 281L794 347" stroke="#eeff00" stroke-width="4.5" stroke-linecap="round" fill="none"/><path d="M793 346L781 391" stroke="#003ac8" stroke-width="5.0" stroke-linecap="round" fill="none"/><path d="M781 391L767 427" stroke="#003ac8" stroke-width="5.5" stroke-linecap="round" fill="none"/><path d="M767 427L751 457" stroke="#0054ae" stroke-width="6.0" stroke-linecap="round" fill="none"/><path d="M751 457L729 487" stroke="#003ac8" stroke-width="6.0" stroke-linecap="round" fill="none"/><path d="M707 512L685 536M576 651L556 662M556 662L549 673M549 673L544 683M544 683L540 693M540 693L537 702M591 652L572 664M572 664L565 675M565 675L560 685M560 685L557 695M557 695L554 704M582 676L577 687M577 687L574 696M574 696L572 705M595 689L592 699M592 699L589 708M612 692L609 702M609 702L607 711M632 686L629 697M629 697L626 707M626 707L624 716M649 692L645 703M645 703L643 713M643 713L641 723M669 689L664 701M664 701L661 712M661 712L659 722M686 691L682 703M682 703L679 714M679 714L677 725M718 677L704 690M704 690L700 702M700 702L697 713M736 675L722 688M722 688L718 700M718 700L715 711M753 673L740 685M740 685L737 697" stroke="#006d95" stroke-width="8.0" stroke-linecap="round" fill="none"/><path d="M685 536L667 556M798 577L791 595M791 595L784 613M818 554L811 575" stroke="#006d95" stroke-width="7.0" stroke-linecap="round" fill="none"/><path d="M667 556L651 573M651 573L635 591M692 538L675 558M660 575L645 593M784 578L777 597M777 597L769 615M805 556L798 577" stroke="#00867a" stroke-width="7.0" stroke-linecap="round" fill="none"/><path d="M635 591L618 607M618 607L599 621M599 621L577 635M611 622L590 636M590 636L562 649M603 638L576 651M737 663L718 677M784 613L777 630M777 630L767 646M767 646L754 661M754 661L736 675M770 659L753 673" stroke="#006d95" stroke-width="7.5" stroke-linecap="round" fill="none"/><path d="M794 347L783 393" stroke="#0054ae" stroke-width="5.0" stroke-linecap="round" fill="none"/><path d="M783 393L769 428" stroke="#006d95" stroke-width="5.5" stroke-linecap="round" fill="none"/><path d="M769 428L754 459M754 459L733 489" stroke="#00867a" stroke-width="6.0" stroke-linecap="round" fill="none"/><path d="M733 489L713 513M645 593L629 609M629 609L611 622M624 624L603 638M617 639L591 652M690 655L669 668M704 662L684 676M746 633L735 649M735 649L720 664M720 664L701 678M769 615L761 632M761 632L751 648M751 648L737 663" stroke="#00867a" stroke-width="7.5" stroke-linecap="round" fill="none"/><path d="M713 513L692 538" stroke="#00a45e" stroke-width="9.0" stroke-linecap="round" fill="none"/><path d="M675 558L660 575M758 461L739 491M670 577L655 594M763 597L754 616M792 557L784 578M845 283L855 351" stroke="#00a45e" stroke-width="7.0" stroke-linecap="round" fill="none"/><path d="M806 282L795 348M807 283L797 349M808 283L799 350M809 284L801 351M811 284L804 352M813 285L807 352M815 285L810 353M817 285L813 354M820 285L817 354M822 285L821 354M825 285L825 354" stroke="#fff700" stroke-width="4.5" stroke-linecap="round" fill="none"/><path d="M795 348L785 394" stroke="#00867a" stroke-width="5.0" stroke-linecap="round" fill="none"/><path d="M785 394L772 430" stroke="#00a45e" stroke-width="5.5" stroke-linecap="round" fill="none"/><path d="M772 430L758 461" stroke="#00c242" stroke-width="6.0" stroke-linecap="round" fill="none"/><path d="M739 491L720 515" stroke="#00c242" stroke-width="8.5" stroke-linecap="round" fill="none"/><path d="M720 515L700 540" stroke="#00c242" stroke-width="10.0" stroke-linecap="round" fill="none"/><path d="M700 540L684 559M684 559L670 577M680 578L666 596M725 587L715 605M737 591L728 609M749 596L740 614M780 557L771 579M771 579L763 597" stroke="#00c242" stroke-width="7.0" stroke-linecap="round" fill="none"/><path d="M655 594L641 610M641 610L624 624M653 611L636 625M636 625L617 639M650 627L631 641M631 641L606 653M663 629L645 643M645 643L622 656M677 632L660 646M660 646L638 658M704 621L691 636M691 636L675 650M675 650L653 663M718 625L706 640M706 640L690 655M740 614L731 631M731 631L719 646M719 646L704 662M754 616L746 633" stroke="#00a45e" stroke-width="7.5" stroke-linecap="round" fill="none"/><path d="M537 702L534 710M554 704L552 712M552 712L550 719M572 705L569 713M569 713L568 721M589 708L587 716M587 716L586 723M607 711L605 719M624 716L622 724" stroke="#006d95" stroke-width="8.5" stroke-linecap="round" fill="none"/><path d="M797 349L787 395" stroke="#00da28" stroke-width="5.0" stroke-linecap="round" fill="none"/><path d="M787 395L776 432" stroke="#00f10f" stroke-width="5.5" stroke-linecap="round" fill="none"/><path d="M776 432L763 462" stroke="#00da28" stroke-width="6.0" stroke-linecap="round" fill="none"/><path d="M763 462L745 492M666 596L653 611M678 597L665 613M665 613L650 627M690 599L678 615M678 615L663 629M702 601L691 617M691 617L677 632M715 605L704 621M728 609L718 625" stroke="#00c242" stroke-width="7.5" stroke-linecap="round" fill="none"/><path d="M745 492L727 517" stroke="#00da28" stroke-width="9.0" stroke-linecap="round" fill="none"/><path d="M727 517L708 541" stroke="#00da28" stroke-width="10.5" stroke-linecap="round" fill="none"/><path d="M708 541L693 561M693 561L680 578M717 543L703 563M703 563L690 580M690 580L678 597M726 544L713 564M713 564L702 582M702 582L690 599M736 546L724 567M724 567L713 584M713 584L702 601M746 549L735 569M735 569L725 587M757 552L747 573M747 573L737 591M768 556L758 577M758 577L749 596" stroke="#00da28" stroke-width="7.0" stroke-linecap="round" fill="none"/><path d="M799 350L790 396" stroke="#46ff00" stroke-width="5.0" stroke-linecap="round" fill="none"/><path d="M790 396L780 433" stroke="#14ff00" stroke-width="5.5" stroke-linecap="round" fill="none"/><path d="M780 433L768 464" stroke="#14ff00" stroke-width="6.5" stroke-linecap="round" fill="none"/><path d="M768 464L751 494" stroke="#00da28" stroke-width="8.5" stroke-linecap="round" fill="none"/><path d="M751 494L734 519" stroke="#00f10f" stroke-width="10.0" stroke-linecap="round" fill="none"/><path d="M734 519L717 543M766 498L752 522" stroke="#00f10f" stroke-width="11.5" stroke-linecap="round" fill="none"/><path d="M606 653L588 665M588 665L582 676M622 656L604 667M604 667L599 678M599 678L595 689M638 658L621 670M621 670L616 682M616 682L612 692M653 663L637 675M637 675L632 686M669 668L653 681M653 681L649 692M684 676L669 689M701 678L686 691" stroke="#00867a" stroke-width="8.0" stroke-linecap="round" fill="none"/><path d="M801 351L793 398" stroke="#78ff00" stroke-width="5.0" stroke-linecap="round" fill="none"/><path d="M793 398L784 435" stroke="#46ff00" stroke-width="5.5" stroke-linecap="round" fill="none"/><path d="M784 435L774 466M840 284L848 352" stroke="#14ff00" stroke-width="7.0" stroke-linecap="round" fill="none"/><path d="M774 466L758 496M806 441L800 474" stroke="#14ff00" stroke-width="9.0" stroke-linecap="round" fill="none"/><path d="M758 496L743 520" stroke="#00f10f" stroke-width="10.5" stroke-linecap="round" fill="none"/><path d="M743 520L726 544M774 500L761 525M783 503L771 528M824 475L821 506" stroke="#00f10f" stroke-width="12.0" stroke-linecap="round" fill="none"/><path d="M804 352L797 399M807 352L801 400M810 353L805 401" stroke="#9bff00" stroke-width="5.0" stroke-linecap="round" fill="none"/><path d="M797 399L789 436" stroke="#46ff00" stroke-width="6.0" stroke-linecap="round" fill="none"/><path d="M789 436L780 468" stroke="#14ff00" stroke-width="7.5" stroke-linecap="round" fill="none"/><path d="M780 468L766 498M812 442L808 475M819 442L816 475M842 353L847 401" stroke="#14ff00" stroke-width="9.5" stroke-linecap="round" fill="none"/><path d="M752 522L736 546" stroke="#00f10f" stroke-width="12.5" stroke-linecap="round" fill="none"/><path d="M801 400L794 438M805 401L800 439" stroke="#46ff00" stroke-width="6.5" stroke-linecap="round" fill="none"/><path d="M794 438L786 470" stroke="#14ff00" stroke-width="8.0" stroke-linecap="round" fill="none"/><path d="M786 470L774 500M826 442L824 475" stroke="#14ff00" stroke-width="10.0" stroke-linecap="round" fill="none"/><path d="M761 525L746 549M791 506L780 531" stroke="#00f10f" stroke-width="13.0" stroke-linecap="round" fill="none"/><path d="M800 439L793 472" stroke="#14ff00" stroke-width="8.5" stroke-linecap="round" fill="none"/><path d="M793 472L783 503" stroke="#14ff00" stroke-width="10.5" stroke-linecap="round" fill="none"/><path d="M771 528L757 552M801 507L791 532" stroke="#00f10f" stroke-width="13.5" stroke-linecap="round" fill="none"/><path d="M813 354L809 402" stroke="#9bff00" stroke-width="5.5" stroke-linecap="round" fill="none"/><path d="M809 402L806 441" stroke="#46ff00" stroke-width="7.0" stroke-linecap="round" fill="none"/><path d="M800 474L791 506" stroke="#14ff00" stroke-width="11.0" stroke-linecap="round" fill="none"/><path d="M780 531L768 556" stroke="#00f10f" stroke-width="14.0" stroke-linecap="round" fill="none"/><path d="M817 354L814 403M821 354L820 403M825 354L825 403" stroke="#9bff00" stroke-width="6.0" stroke-linecap="round" fill="none"/><path d="M814 403L812 442" stroke="#46ff00" stroke-width="7.5" stroke-linecap="round" fill="none"/><path d="M808 475L801 507" stroke="#14ff00" stroke-width="11.5" stroke-linecap="round" fill="none"/><path d="M791 532L780 557M811 507L802 532" stroke="#00da28" stroke-width="14.0" stroke-linecap="round" fill="none"/><path d="M820 403L819 442M825 403L826 442" stroke="#46ff00" stroke-width="8.0" stroke-linecap="round" fill="none"/><path d="M816 475L811 507" stroke="#14ff00" stroke-width="12.0" stroke-linecap="round" fill="none"/><path d="M802 532L792 557M821 506L814 531" stroke="#00a45e" stroke-width="14.0" stroke-linecap="round" fill="none"/><path d="M814 531L805 556M844 474L846 504M854 440L858 473" stroke="#00867a" stroke-width="14.0" stroke-linecap="round" fill="none"/><path d="M830 235L828 285" stroke="#ff2100" stroke-width="4.0" stroke-linecap="round" fill="none"/><path d="M828 285L829 354" stroke="#fff700" stroke-width="6.0" stroke-linecap="round" fill="none"/><path d="M829 354L831 403" stroke="#9bff00" stroke-width="8.0" stroke-linecap="round" fill="none"/><path d="M831 403L833 442" stroke="#46ff00" stroke-width="10.5" stroke-linecap="round" fill="none"/><path d="M833 442L833 475" stroke="#14ff00" stroke-width="13.0" stroke-linecap="round" fill="none"/><path d="M833 475L832 506M843 441L844 474" stroke="#00c242" stroke-width="14.0" stroke-linecap="round" fill="none"/><path d="M832 506L826 530" stroke="#006d95" stroke-width="14.0" stroke-linecap="round" fill="none"/><path d="M826 530L818 554" stroke="#0054ae" stroke-width="14.0" stroke-linecap="round" fill="none"/><path d="M832 235L832 285" stroke="#ffa800" stroke-width="4.0" stroke-linecap="round" fill="none"/><path d="M832 285L835 354" stroke="#fff700" stroke-width="7.0" stroke-linecap="round" fill="none"/><path d="M835 354L838 402" stroke="#9bff00" stroke-width="9.5" stroke-linecap="round" fill="none"/><path d="M838 402L843 441" stroke="#14ff00" stroke-width="12.5" stroke-linecap="round" fill="none"/><path d="M846 504L842 529M858 473L863 503M865 439L871 472" stroke="#003ac8" stroke-width="14.0" stroke-linecap="round" fill="none"/><path d="M842 529L835 552M863 503L861 527M861 527L856 550M871 472L880 501M880 501L879 525M879 525L876 548M876 439L885 471M885 471L896 500M887 438L898 470M898 470L913 499M899 437L912 469M912 469L930 498M909 436L925 468M925 468L946 497M920 436L938 468M938 468L962 497M931 435L951 467M951 467L978 497M941 435L963 467M963 467L994 497M976 467L1009 497" stroke="#001de1" stroke-width="14.0" stroke-linecap="round" fill="none"/><path d="M836 284L842 353" stroke="#beff00" stroke-width="7.0" stroke-linecap="round" fill="none"/><path d="M847 401L854 440" stroke="#00c242" stroke-width="12.5" stroke-linecap="round" fill="none"/><path d="M837 235L840 284" stroke="#14ff00" stroke-width="4.5" stroke-linecap="round" fill="none"/><path d="M848 352L855 400" stroke="#00c242" stroke-width="9.5" stroke-linecap="round" fill="none"/><path d="M855 400L865 439" stroke="#006d95" stroke-width="12.5" stroke-linecap="round" fill="none"/><path d="M836 666L825 678M825 678L823 690M823 690L820 701M865 665L856 677M856 677L853 689M853 689L851 700M851 700L849 710M849 710L848 719M894 664L886 677M886 677L884 689M884 689L882 700M882 700L880 710M880 710L878 719M923 665L916 678M916 678L914 690M914 690L912 701M912 701L911 711M911 711L909 720M952 666L946 679M946 679L944 691M944 691L943 703M943 703L941 712M941 712L940 721M981 668L975 682M975 682L974 694M974 694L973 705M973 705L972 715M972 715L971 724M1009 672L1005 686M1005 686L1004 698M1004 698L1003 709M1003 709L1002 719M1002 719L1001 728M1037 677L1034 691M1034 691L1034 704M1034 704L1033 715M1033 715L1032 725M1032 725L1031 734M1065 680L1063 694M1063 694L1063 707M1063 707L1063 718M1063 718L1062 728M1062 728L1061 737M1081 663L1079 677M1079 677L1079 689M1079 689L1079 699M1079 699L1078 708M1078 708L1077 716M1091 642L1089 654M1089 654L1089 665M1089 665L1088 674M1088 674L1087 682M1087 682L1085 689M1105 628L1103 638M1103 638L1103 648M1103 648L1102 656M1102 656L1101 664M1101 664L1100 670M1121 614L1120 624M1120 624L1120 633M1120 633L1119 641M1119 641L1118 647M1118 647L1116 652M1138 603L1137 612M1137 612L1138 620M1138 620L1137 627M1137 627L1136 632M1136 632L1135 637M988 414L1020 439M1156 593L1156 601M1156 601L1157 609M1157 609L1157 615M1157 615L1156 620M1156 620L1155 624M1174 585L1175 592M1175 592L1177 599M1177 599L1177 605M1177 605L1177 609M1177 609L1176 612M1193 578L1195 585M1195 585L1197 592M1197 592L1198 596M1198 596L1198 600M1198 600L1198 603M1038 431L1087 452M1212 573L1215 580M1215 580L1218 586M1218 586L1220 590M1220 590L1221 593M1221 593L1221 595M1231 569L1235 575M1235 575L1239 581M1239 581L1242 585M1242 585L1243 587M1243 587L1243 589M1249 567L1255 573M1255 573L1260 578M1260 578L1263 581M1263 581L1265 583M1265 583L1266 584" stroke="#001de1" stroke-width="8.0" stroke-linecap="round" fill="none"/><path d="M839 234L845 283" stroke="#00a45e" stroke-width="4.5" stroke-linecap="round" fill="none"/><path d="M855 351L864 400" stroke="#006d95" stroke-width="9.5" stroke-linecap="round" fill="none"/><path d="M864 400L876 439M873 399L887 438" stroke="#001de1" stroke-width="12.5" stroke-linecap="round" fill="none"/><path d="M848 719L846 727M846 727L845 735M845 735L843 744M878 719L877 727M877 727L876 735M876 735L874 744M909 720L908 728M908 728L907 736M907 736L905 744M940 721L939 729M939 729L938 737M938 737L936 746M971 724L969 732M969 732L968 740M968 740L967 748M886 348L906 396M1001 728L1000 736M1000 736L999 744M999 744L997 752M892 347L914 395M1031 734L1030 742M1030 742L1029 750M1029 750L1028 758M1061 737L1060 744M1060 744L1060 752M1060 752L1058 760M928 392L959 431M1077 716L1076 723M1076 723L1075 730M1075 730L1073 737M1085 689L1084 695M1084 695L1082 701M1082 701L1080 707M1100 670L1098 675M1098 675L1097 681M1097 681L1095 686M1116 652L1115 657M1115 657L1114 662M1114 662L1112 667M983 416L1013 443M1135 637L1134 641M1134 641L1132 646M1132 646L1131 650M1155 624L1154 628M1154 628L1153 631M1153 631L1151 635M1176 612L1175 615M1175 615L1175 619M1175 619L1173 621M1032 433L1079 454M1198 603L1198 605M1198 605L1197 608M1197 608L1196 610M1221 595L1221 597M1221 597L1221 599M1221 599L1220 601M1243 589L1244 590M1244 590L1244 592M1244 592L1244 592M1266 584L1267 585M1267 585L1268 586M1268 586L1268 586" stroke="#001de1" stroke-width="8.5" stroke-linecap="round" fill="none"/><path d="M842 234L849 283M844 234L853 282M847 233L858 281M849 233L862 281M851 232L866 280M853 231L870 280M855 230L873 279M857 230L877 278M859 229L880 277M861 228L882 276M862 227L884 276M863 226L886 275M864 225L888 274M865 224L890 274M866 223L891 273M866 222L892 273M866 221L892 272M866 220L893 272" stroke="#001de1" stroke-width="4.0" stroke-linecap="round" fill="none"/><path d="M849 283L861 351" stroke="#003ac8" stroke-width="7.0" stroke-linecap="round" fill="none"/><path d="M861 351L873 399M868 350L881 398M922 395L951 434M965 426L992 456M971 423L999 451M1027 436L1072 457" stroke="#001de1" stroke-width="9.5" stroke-linecap="round" fill="none"/><path d="M881 398L899 437M890 397L909 436M951 434L976 467M992 456L1029 482" stroke="#001de1" stroke-width="12.0" stroke-linecap="round" fill="none"/><path d="M874 349L890 397M880 348L898 396M977 419L1007 447" stroke="#001de1" stroke-width="9.0" stroke-linecap="round" fill="none"/><path d="M898 396L920 436M906 396L931 435M999 451L1037 476M1007 447L1046 471" stroke="#001de1" stroke-width="11.5" stroke-linecap="round" fill="none"/><path d="M914 395L941 435M959 431L985 462" stroke="#001de1" stroke-width="11.0" stroke-linecap="round" fill="none"/><path d="M985 462L1020 490" stroke="#001de1" stroke-width="13.5" stroke-linecap="round" fill="none"/><path d="M880 277L907 343M882 276L911 341M884 276L914 339M886 275L917 338M888 274L920 337M890 274L923 335M891 273L925 334M892 273L927 333M892 272L928 333M893 272L929 332" stroke="#001de1" stroke-width="4.5" stroke-linecap="round" fill="none"/><path d="M1013 443L1055 465" stroke="#001de1" stroke-width="10.5" stroke-linecap="round" fill="none"/><path d="M1020 439L1063 461" stroke="#001de1" stroke-width="10.0" stroke-linecap="round" fill="none"/><path d="M725 485L729 487M846 504L863 503M863 503L880 501M880 501L896 500M896 500L913 499M913 499L930 498M930 498L946 497M946 497L962 497M962 497L978 497M978 497L994 497M994 497L1009 497M1009 497L1020 490M1020 490L1029 482M1029 482L1037 476M1037 476L1046 471M1046 471L1055 465M1055 465L1063 461M1063 461L1072 457M1072 457L1079 454M1079 454L1087 452M1087 452L1094 449M1094 449L1100 448" stroke="#001aca" stroke-width="6.5" stroke-linecap="round" fill="none"/><path d="M729 487L733 489M832 506L846 504" stroke="#004c9d" stroke-width="6.5" stroke-linecap="round" fill="none"/><path d="M733 489L739 491M821 506L832 506" stroke="#006286" stroke-width="6.5" stroke-linecap="round" fill="none"/><path d="M739 491L745 492M745 492L751 494M811 507L821 506" stroke="#00796e" stroke-width="6.5" stroke-linecap="round" fill="none"/><path d="M751 494L758 496M758 496L766 498M766 498L774 500M774 500L783 503M783 503L791 506M791 506L801 507M801 507L811 507" stroke="#009455" stroke-width="6.5" stroke-linecap="round" fill="none"/><path d="M702 510L707 512M826 530L842 529M679 535L685 536M805 556L818 554" stroke="#0034b4" stroke-width="7.0" stroke-linecap="round" fill="none"/><path d="M707 512L713 513M814 531L826 530M685 536L692 538M792 557L805 556" stroke="#004c9d" stroke-width="7.0" stroke-linecap="round" fill="none"/><path d="M713 513L720 515M802 532L814 531M692 538L700 540M780 557L792 557" stroke="#006286" stroke-width="7.0" stroke-linecap="round" fill="none"/><path d="M720 515L727 517M791 532L802 532M700 540L708 541M736 546L746 549M746 549L757 552M757 552L768 556M768 556L780 557" stroke="#00796e" stroke-width="7.0" stroke-linecap="round" fill="none"/><path d="M727 517L734 519M734 519L743 520M743 520L752 522M752 522L761 525M761 525L771 528M771 528L780 531M780 531L791 532M708 541L717 543M717 543L726 544M726 544L736 546" stroke="#009455" stroke-width="7.0" stroke-linecap="round" fill="none"/><path d="M842 529L861 527M861 527L879 525M879 525L898 524M898 524L917 523M917 523L936 522M936 522L954 521M954 521L972 521M972 521L990 521M990 521L1008 522M1008 522L1025 522M1025 522L1037 515M1037 515L1046 505M1046 505L1056 498M1056 498L1066 492M1066 492L1076 486M1076 486L1086 481M1086 481L1096 477M1096 477L1105 473M1105 473L1114 471M1114 471L1122 468M1122 468L1129 467M818 554L835 552M835 552L856 550M856 550L876 548M876 548L897 547M897 547L918 546M918 546L938 545M938 545L958 545M958 545L979 544M979 544L998 545M998 545L1018 547M1018 547L1037 547M1037 547L1050 538M1050 538L1059 527M1059 527L1070 519M1070 519L1081 512M1081 512L1092 505M1092 505L1103 500M1103 500L1114 495M1114 495L1125 491M1125 491L1135 488M1135 488L1145 486M1145 486L1154 485" stroke="#001aca" stroke-width="7.0" stroke-linecap="round" fill="none"/><path d="M660 555L667 556M798 577L811 575M643 572L651 573M777 597L791 595M626 590L635 591M635 591L645 593M769 615L784 613" stroke="#0034b4" stroke-width="7.5" stroke-linecap="round" fill="none"/><path d="M667 556L675 558M784 578L798 577M651 573L660 575M763 597L777 597M645 593L655 594M754 616L769 615" stroke="#004c9d" stroke-width="7.5" stroke-linecap="round" fill="none"/><path d="M675 558L684 559M771 579L784 578M660 575L670 577M670 577L680 578M749 596L763 597M655 594L666 596M740 614L754 616" stroke="#006286" stroke-width="7.5" stroke-linecap="round" fill="none"/><path d="M684 559L693 561M693 561L703 563M703 563L713 564M713 564L724 567M724 567L735 569M735 569L747 573M747 573L758 577M758 577L771 579M680 578L690 580M690 580L702 582M702 582L713 584M713 584L725 587M725 587L737 591M737 591L749 596M666 596L678 597M678 597L690 599M690 599L702 601M702 601L715 605M715 605L728 609M728 609L740 614" stroke="#00796e" stroke-width="7.5" stroke-linecap="round" fill="none"/><path d="M811 575L830 573M830 573L852 571M852 571L874 569M874 569L896 568M896 568L918 567M918 567L940 566M940 566L962 566M962 566L983 566M983 566L1005 567M1005 567L1025 569M1025 569L1046 570M1046 570L1060 560M1060 560L1069 547M1069 547L1081 538M1081 538L1093 530M791 595L806 594M806 594L825 591M825 591L848 589M848 589L872 588M872 588L895 586M895 586L918 585M918 585L941 585M941 585L964 585M964 585L987 586M987 586L1010 587M1010 587L1032 590M1032 590L1053 591M1053 591L1067 580M1067 580L1077 566M1077 566L1089 556M1089 556L1102 547M1102 547L1115 539M1115 539L1128 533M1128 533L1141 527M1141 527L1154 522M1154 522L1166 519M1166 519L1179 516M1179 516L1190 515M784 613L799 612M799 612L820 609M820 609L844 607M844 607L868 605M868 605L893 604M893 604L917 603M917 603L942 603M942 603L966 603M966 603L990 604M990 604L1013 606M1013 606L1037 609M1037 609L1060 610M1060 610L1074 598M1074 598L1084 583M1084 583L1096 572M1096 572L1109 563" stroke="#001aca" stroke-width="7.5" stroke-linecap="round" fill="none"/><path d="M608 606L618 607M777 630L792 629M792 629L814 626M814 626L839 624M839 624L865 622M865 622L890 621M890 621L916 620M916 620L941 620M941 620L966 620M966 620L991 622M991 622L1016 624M1016 624L1040 627M1040 627L1065 629M1065 629L1079 616M1079 616L1089 600M1089 600L1102 588M1102 588L1116 577M1116 577L1130 568M1130 568L1145 560M1145 560L1160 554M1160 554L1175 549M1175 549L1190 545M1190 545L1205 542M1205 542L1219 540M588 620L599 621M767 646L783 644M783 644L805 641M805 641L832 639M832 639L858 637M858 637L885 636M885 636L911 636M911 636L938 636M938 636L964 637M964 637L991 638M991 638L1016 641M1016 641L1042 645M1042 645L1067 647M1067 647L1082 633M1082 633L1092 615M1092 615L1105 602M1105 602L1120 591M564 634L577 635M770 659L794 656M794 656L821 654M821 654L849 652M849 652L877 651M877 651L905 651M905 651L932 651M932 651L960 652M960 652L987 654M987 654L1014 657M1014 657L1041 661M1041 661L1067 664M1067 664L1083 649M1083 649L1093 629M1093 629L1106 615M1106 615L1121 603M1121 603L1137 592M1137 592L1154 583M1154 583L1171 575M1171 575L1189 569M1189 569L1206 565M1206 565L1224 561M1224 561L1241 559M534 647L548 648M548 648L562 649M753 673L778 670M778 670L807 667M807 667L836 666M836 666L865 665M865 665L894 664M894 664L923 665M923 665L952 666M952 666L981 668M981 668L1009 672M1009 672L1037 677M1037 677L1065 680M1065 680L1081 663M1081 663L1091 642M1091 642L1105 628M1105 628L1121 614" stroke="#001aca" stroke-width="8.0" stroke-linecap="round" fill="none"/><path d="M618 607L629 609M761 632L777 630M599 621L611 622M751 648L767 646M577 635L590 636M590 636L603 638M737 663L754 661M754 661L770 659M562 649L576 651M576 651L591 652M718 677L736 675M736 675L753 673" stroke="#0034b4" stroke-width="8.0" stroke-linecap="round" fill="none"/><path d="M629 609L641 610M746 633L761 632M611 622L624 624M624 624L636 625M735 649L751 648M603 638L617 639M704 662L720 664M720 664L737 663M591 652L606 653M669 668L684 676M684 676L701 678M701 678L718 677" stroke="#004c9d" stroke-width="8.0" stroke-linecap="round" fill="none"/><path d="M641 610L653 611M678 615L691 617M691 617L704 621M704 621L718 625M718 625L731 631M731 631L746 633M636 625L650 627M650 627L663 629M663 629L677 632M677 632L691 636M691 636L706 640M706 640L719 646M719 646L735 649M617 639L631 641M631 641L645 643M645 643L660 646M660 646L675 650M675 650L690 655M690 655L704 662M606 653L622 656M622 656L638 658M638 658L653 663M653 663L669 668" stroke="#006286" stroke-width="8.0" stroke-linecap="round" fill="none"/><path d="M653 611L665 613M665 613L678 615" stroke="#00796e" stroke-width="8.0" stroke-linecap="round" fill="none"/><path d="M511 659L526 660M526 660L541 661M541 661L556 662M740 685L766 682M766 682L795 680M795 680L825 678M825 678L856 677M856 677L886 677M886 677L916 678M916 678L946 679M946 679L975 682M975 682L1005 686M1005 686L1034 691M1034 691L1063 694M1063 694L1079 677M1079 677L1089 654M1089 654L1103 638M1103 638L1120 624M1120 624L1137 612M1137 612L1156 601M1156 601L1175 592M1175 592L1195 585M1195 585L1215 580M1215 580L1235 575M1235 575L1255 573M502 670L517 671M517 671L533 672M533 672L549 673M737 697L762 694M762 694L792 692M792 692L823 690M823 690L853 689M853 689L884 689M884 689L914 690M914 690L944 691M944 691L974 694M974 694L1004 698M1004 698L1034 704M1034 704L1063 707M1063 707L1079 689M1079 689L1089 665M1089 665L1103 648M1103 648L1120 633M495 680L511 681M511 681L527 682M734 708L759 705M759 705L790 703M790 703L820 701M820 701L851 700M851 700L882 700M882 700L912 701M912 701L943 703M943 703L973 705M973 705L1003 709M1003 709L1033 715M1033 715L1063 718M1063 718L1079 699M1079 699L1088 674M1088 674L1102 656M1102 656L1119 641M1119 641L1137 627M1137 627L1157 615M1157 615L1177 605M1177 605L1198 596M1198 596L1220 590M1220 590L1242 585M1242 585L1263 581M489 690L506 691M506 691L523 692M732 719L757 716M757 716L788 713M788 713L819 711M819 711L849 710M849 710L880 710M880 710L911 711M911 711L941 712M941 712L972 715M972 715L1002 719M1002 719L1032 725M1032 725L1062 728M1062 728L1078 708M1078 708L1087 682M1087 682L1101 664M1101 664L1118 647M485 699L502 700M502 700L519 701M730 728L755 725M755 725L786 722M786 722L817 720M817 720L848 719M848 719L878 719M878 719L909 720M909 720L940 721M940 721L971 724M971 724L1001 728M1001 728L1031 734M1031 734L1061 737M1061 737L1077 716M1077 716L1085 689M1085 689L1100 670M1100 670L1116 652M1116 652L1135 637M1135 637L1155 624M1155 624L1176 612M1176 612L1198 603M1198 603L1221 595M1221 595L1243 589M1243 589L1266 584" stroke="#001aca" stroke-width="8.5" stroke-linecap="round" fill="none"/><path d="M556 662L572 664M572 664L588 665M704 690L722 688M722 688L740 685M549 673L565 675M700 702L718 700M718 700L737 697M527 682L544 683M544 683L560 685M679 714L697 713M697 713L715 711M715 711L734 708M523 692L540 693M540 693L557 695M659 722L677 725M677 725L695 724M695 724L713 721M713 721L732 719M519 701L537 702M537 702L554 704M641 723L657 732M657 732L675 735M675 735L693 733M693 733L711 731M711 731L730 728" stroke="#0034b4" stroke-width="8.5" stroke-linecap="round" fill="none"/><path d="M588 665L604 667M604 667L621 670M621 670L637 675M637 675L653 681M653 681L669 689M669 689L686 691M686 691L704 690M565 675L582 676M582 676L599 678M599 678L616 682M616 682L632 686M632 686L649 692M649 692L664 701M664 701L682 703M682 703L700 702M560 685L577 687M577 687L595 689M595 689L612 692M612 692L629 697M629 697L645 703M645 703L661 712M661 712L679 714M557 695L574 696M574 696L592 699M592 699L609 702M609 702L626 707M626 707L643 713M643 713L659 722M554 704L572 705M572 705L589 708M589 708L607 711M607 711L624 716M624 716L641 723" stroke="#004c9d" stroke-width="8.5" stroke-linecap="round" fill="none"/><path d="M481 707L498 708M498 708L516 709M710 739L728 736M728 736L754 733M754 733L784 730M784 730L815 728M815 728L846 727M846 727L877 727M877 727L908 728M908 728L939 729M939 729L969 732M969 732L1000 736M1000 736L1030 742M1030 742L1060 744M1060 744L1076 723M1076 723L1084 695M1084 695L1098 675M1098 675L1115 657M477 714L495 715M495 715L513 716M708 747L727 744M727 744L752 741M752 741L783 738M783 738L814 736M814 736L845 735M845 735L876 735M876 735L907 736M907 736L938 737M938 737L968 740M968 740L999 744M999 744L1029 750M1029 750L1060 752M1060 752L1075 730M1075 730L1082 701M1082 701L1097 681M1097 681L1114 662M1114 662L1132 646M1132 646L1153 631M1153 631L1175 619M1175 619L1197 608M1197 608L1221 599M1221 599L1244 592M1244 592L1268 586M474 721L492 722M492 722L511 723M707 756L725 753M725 753L751 750M751 750L782 747M782 747L812 745M812 745L843 744M843 744L874 744M874 744L905 744M905 744L936 746M936 746L967 748M967 748L997 752M997 752L1028 758M1028 758L1058 760M1058 760L1073 737M1073 737L1080 707M1080 707L1095 686M1095 686L1112 667" stroke="#001aca" stroke-width="9.0" stroke-linecap="round" fill="none"/><path d="M516 709L534 710M534 710L552 712M605 719L622 724M622 724L639 731M639 731L655 740M655 740L673 743M673 743L691 742M691 742L710 739M513 716L531 718M531 718L550 719M568 721L586 723M586 723L604 727M604 727L621 732M621 732L638 739M638 739L654 748M654 748L672 751M672 751L690 750M690 750L708 747M511 723L529 725M529 725L548 727M548 727L566 728M566 728L584 731M584 731L602 734M602 734L620 740M620 740L637 747M637 747L652 757M652 757L670 760M670 760L689 758M689 758L707 756" stroke="#0034b4" stroke-width="9.0" stroke-linecap="round" fill="none"/><path d="M552 712L569 713M569 713L587 716M587 716L605 719M550 719L568 721" stroke="#004c9d" stroke-width="9.0" stroke-linecap="round" fill="none"/><path d="M725 484L728 486M848 503L862 502M864 502L878 500M881 500L895 499M898 499L912 498M914 498L928 497M931 497L945 497M947 496L961 496M964 496L977 496M979 496L992 496M995 496L1008 496M1010 495L1019 490M1021 489L1028 482M1029 481L1037 476M1038 475L1045 470M1047 469L1054 465M1056 464L1063 461M1064 460L1071 457M1072 456L1079 454M1080 453L1086 451M1087 451L1093 449M1094 449L1099 447M843 528L859 526M862 526L878 525M881 524L897 523M900 523L915 522M918 522L934 521M937 521L953 521M956 521L971 520M974 520L989 521M992 521L1006 521M1009 521L1024 521M1026 521L1036 514M1038 513L1046 505M1047 504L1055 498M1057 497L1065 491M1067 490L1075 486M1077 485L1085 481M1087 480L1095 476M1096 476L1104 473M1106 472L1113 470M1114 470L1121 468M1122 467L1129 466M819 553L834 552M837 551L854 549M857 549L875 548M878 547L895 546M899 546L916 545M919 545L936 544M940 544L957 544M960 544L977 544M980 544L997 544M1000 544L1016 546M1019 546L1035 546M1038 545L1049 538M1050 536L1059 527M1060 526L1069 519M1071 518L1080 511M1082 510L1091 505M1093 504L1102 499M1104 499L1113 495M1115 494L1124 491M1126 490L1134 488M1136 487L1144 486M1145 485L1153 484M813 574L829 572M832 572L850 570M854 570L872 568M876 568L894 567M898 567L916 566M920 566L938 565M942 565L960 565M964 565L982 565M985 565L1003 566M1006 566L1024 568M1027 568L1044 569M1047 568L1058 560M1060 558L1069 548M1070 546L1080 538M1082 537L1092 530M792 594L804 593M807 593L824 591M827 590L846 589M850 588L870 587M873 587L893 585M897 585L916 585M920 584L939 584M943 584L962 584M966 584L985 585M989 585L1008 586M1011 586L1030 588M1033 589L1052 590M1055 589L1066 580M1068 578L1077 566M1078 564L1088 556M1090 554L1101 547M1103 546L1113 539M1116 538L1127 532M1129 531L1140 526M1142 526L1153 522M1155 521L1165 518M1167 518L1178 516M1180 515L1189 514M785 612L798 611M801 611L818 609M822 608L842 606M846 606L866 604M870 604L891 603M895 603L915 602M919 602L940 602M944 602L964 602M968 602L988 603M992 603L1012 605M1015 605L1035 608M1038 608L1058 609M1061 608L1073 598M1075 596L1083 584M1085 581L1095 572M1097 571L1108 563M609 605L618 606M778 629L791 628M794 627L812 625M816 625L837 623M841 623L863 621M867 621L888 620M892 620L914 619M918 619L939 619M943 619L964 619M968 620L989 621M993 621L1014 623M1018 623L1039 626M1042 627L1063 628M1066 627L1078 616M1080 614L1088 600M1090 598L1101 588M1103 586L1115 577M1117 576L1129 568M1131 567L1144 560M1146 559L1159 553M1161 552L1174 548M1177 547L1189 544M1192 544L1204 541M1206 541L1218 539" stroke="#384cd5" stroke-width="2.5" stroke-linecap="round" fill="none"/><path d="M729 486L733 488M833 505L845 503M708 511L713 512M815 530L825 530M686 536L692 537M793 556L804 555M668 556L675 557M785 577L797 576M652 573L659 574M764 596L776 596M646 592L654 593M756 615L768 614M630 608L640 609M747 632L760 631" stroke="#3873b2" stroke-width="2.5" stroke-linecap="round" fill="none"/><path d="M734 488L738 490M822 505L831 505M714 513L719 514M803 531L813 531M693 537L699 539M781 556L791 556M676 557L683 558M772 578L783 577M661 574L669 575M670 576L679 577M751 595L762 596M656 593L665 595M742 613L753 615M642 609L652 610M679 614L690 616M692 617L703 620M706 620L717 624M719 625L730 630M732 630L745 632" stroke="#3884a0" stroke-width="2.5" stroke-linecap="round" fill="none"/><path d="M739 490L744 491M745 492L751 493M812 506L821 505M720 515L726 516M792 532L802 531M700 539L707 540M737 546L746 548M747 549L756 551M758 552L767 555M769 555L779 556M685 559L692 560M694 560L702 562M704 562L712 563M714 564L723 565M725 566L734 568M736 569L746 572M748 572L757 576M759 576L770 578M681 577L690 579M691 579L701 581M703 581L712 583M714 583L724 586M726 587L736 590M738 590L748 594M667 595L677 596M679 596L689 598M691 598L701 600M703 601L714 604M716 604L727 608M729 608L739 613M654 611L664 612M666 612L677 614" stroke="#38968d" stroke-width="2.5" stroke-linecap="round" fill="none"/><path d="M752 493L758 495M759 495L766 497M767 497L774 499M775 500L782 502M783 502L791 505M792 505L800 506M802 506L810 506M727 516L734 518M735 518L742 519M743 520L751 522M752 522L760 524M762 524L770 527M771 527L780 530M781 530L790 532M709 540L716 542M718 542L725 543M727 544L735 545" stroke="#38ab7a" stroke-width="2.5" stroke-linecap="round" fill="none"/><path d="M703 509L707 511M827 529L841 528M680 534L685 535M806 555L817 554M661 554L667 555M799 576L810 574M644 571L651 572M778 596L790 594M626 589L634 590M636 590L644 592M770 614L783 613M619 606L628 607M762 631L775 629" stroke="#3860c4" stroke-width="2.5" stroke-linecap="round" fill="none"/><path d="M589 619L598 620M768 645L782 643M785 643L803 641M807 640L830 638M834 638L856 637M860 636L883 635M887 635L909 635M914 635L936 635M940 635L962 636M966 636L988 637M993 637L1014 640M1018 640L1040 644M1044 644L1065 646M1068 645L1081 633M1083 630L1091 615M1093 613L1104 602M1107 600L1119 591M565 633L576 634M772 658L792 655M796 655L819 653M824 653L847 651M851 651L875 650M879 650L902 650M907 650L930 650M934 650L958 651M962 651L985 653M989 653L1012 656M1016 656L1039 660M1043 661L1065 663M1069 662L1082 649M1084 646L1092 630M1094 627L1105 616M1108 614L1120 603M1123 601L1136 592M1139 591L1153 583M1156 582L1170 575M1173 574L1187 569M1190 568L1205 564M1208 564L1222 560M1225 560L1239 558M535 646L547 647M549 647L561 648M755 671L776 669M780 669L804 667M809 666L833 665M838 664L863 664M867 664L892 663M896 663L921 664M925 664L950 665M954 665L978 667M983 668L1007 671M1011 671L1035 676M1039 676L1063 679M1066 678L1080 664M1082 661L1090 643M1092 640L1104 628M1106 626L1120 614M512 658L525 659M527 659L540 660M542 660L555 661M742 684L764 682M768 681L793 679M798 679L823 677M828 677L853 676M858 676L883 676M888 676L913 677M918 677L943 678M948 679L973 681M978 681L1002 684M1007 685L1031 690M1036 691L1060 693M1064 692L1078 677M1080 674L1088 655M1090 652L1102 639M1105 636L1118 624M1121 622L1136 612M1139 610L1154 601M1157 600L1174 592M1177 591L1193 585M1197 584L1214 579M1217 579L1234 575M1237 574L1254 572M503 669L516 670M518 670L532 671M534 671L548 672M739 696L760 694M764 693L790 691M795 691L820 689M825 689L851 688M856 688L881 688M886 688L911 689M916 689L942 690M947 691L972 693M977 693L1002 697M1007 697L1031 703M1036 703L1061 706M1065 705L1078 689M1080 686L1088 666M1090 662L1102 649M1105 646L1119 633M496 679L509 680M512 680L526 681M736 707L757 704M762 704L787 702M792 702L818 700M823 700L849 699M853 699L879 699M884 699L910 700M915 700L940 701M945 702L971 704M976 704L1001 708M1006 709L1031 714M1035 714L1061 717M1064 716L1077 699M1079 696L1087 675M1089 671L1101 657M1104 654L1118 641M1121 639L1136 627M1139 625L1155 615M1159 613L1176 604M1179 603L1197 596M1200 595L1218 589M1222 589L1240 584M1243 583L1261 580M491 689L505 690M507 690L522 691M734 717L755 715M760 714L785 712M790 712L816 710M821 710L847 709M852 709L878 709M883 709L908 710M913 710L939 711M944 712L970 714M974 714L1000 718M1005 718L1030 724M1035 724L1060 727M1064 725L1077 708M1079 705L1086 683M1088 679L1100 664M1103 661L1117 647M486 698L501 699M503 699L518 700M732 727L753 724M758 724L784 721M789 721L814 719M819 719L845 718M850 718L876 718M881 718L907 719M912 719L937 720M942 721L968 723M973 723L999 726M1003 727L1029 732M1033 733L1059 735M1063 734L1075 716M1077 712L1084 690M1086 686L1098 670M1101 667L1115 653M1118 650L1133 637M1136 635L1153 624M1157 622L1174 612M1178 611L1196 602M1200 601L1219 595M1222 594L1242 588M1245 587L1264 583M482 706L497 707M500 707L515 708M711 738L727 736M730 735L752 732M756 732L782 730M787 729L813 728M818 727L844 726M849 726L875 726M879 726L905 727M910 727L936 728M941 728L967 730M972 731L997 734M1002 735L1028 740M1032 741L1058 743M1062 742L1074 723M1076 719L1083 696M1085 692L1097 676M1100 673L1114 658M479 713L494 714M497 714L512 715M710 746L725 744M729 743L750 740M755 740L781 738M786 737L812 736M817 735L842 734M847 734L873 734M878 734L904 735M909 735L935 736M940 736L966 738M971 739L997 742M1001 743L1027 748M1032 749L1057 751M1061 749L1074 730M1075 726L1082 702M1083 698L1096 681M1098 678L1112 663M1115 660L1131 646M1134 643L1151 631M1155 629L1173 619M1176 617L1195 608M1199 606L1219 599M1223 598L1242 591M1246 590L1266 585M475 720L491 721M494 721L509 722M708 754L724 752M727 752L749 749M753 748L779 746M784 746L810 744M815 744L841 743M846 743L872 743M877 743L903 743M908 743L934 744M938 745L964 747M969 747L995 750M1000 751L1025 756M1030 757L1056 759M1060 757L1072 738M1074 733L1080 708M1081 704L1094 687M1096 684L1110 667" stroke="#384cd5" stroke-width="3.0" stroke-linecap="round" fill="none"/><path d="M600 620L610 621M752 647L765 645M578 634L588 635M591 635L602 637M738 662L752 660M755 660L769 658M563 648L575 649M578 650L590 651M720 676L734 674M737 674L752 672M557 661L571 663M573 663L587 664M706 689L721 687M724 687L739 685M550 672L564 674M702 701L717 699M720 698L735 696M528 681L542 682M545 683L559 684M680 713L696 712M698 712L714 710M717 709L732 707M524 691L539 692M541 693L556 694M660 721L675 724M678 724L694 723M696 722L712 720M715 720L730 718M521 700L535 701M538 702L553 703M642 722L656 730M658 731L673 733M676 733L692 732M694 732L710 730M713 729L728 727M517 708L532 709M535 709L550 711M606 719L621 723M624 724L638 729M641 731L654 738M657 739L672 742M674 742L690 741M693 740L708 738M515 715L530 716M533 717L548 718M569 720L584 722M587 722L602 725M605 726L620 731M622 732L637 737M639 738L653 746M655 747L670 750M673 750L689 749M692 748L707 746M512 722L528 724M531 724L546 725M549 726L564 727M567 727L583 729M586 730L601 733M604 734L618 739M621 740L635 745M638 747L651 755M654 756L669 758M672 759L687 757M690 757L706 755" stroke="#3860c4" stroke-width="3.0" stroke-linecap="round" fill="none"/><path d="M612 622L623 623M625 623L635 624M736 648L749 647M604 637L616 638M705 661L719 663M722 663L736 662M592 651L605 652M670 668L683 674M685 675L700 677M702 677L717 676M589 665L603 666M606 667L620 669M622 670L636 674M639 675L652 679M655 680L668 687M670 688L685 690M688 690L703 689M567 674L581 675M583 676L597 677M600 678L614 680M617 681L631 685M634 686L647 691M650 692L663 699M666 700L680 702M683 702L699 701M562 684L576 685M579 686L593 688M596 688L610 691M613 691L627 696M630 696L644 702M647 703L660 710M662 711L677 713M558 694L573 695M576 696L590 697M593 698L608 701M611 701L625 706M628 707L642 712M644 713L658 720M556 703L570 704M573 705L588 706M591 707L606 710M608 710L623 715M626 716L640 721M553 711L568 712M571 713L586 714M589 715L604 718M551 718L566 720" stroke="#3873b2" stroke-width="3.0" stroke-linecap="round" fill="none"/><path d="M637 625L649 626M651 626L662 628M664 628L676 631M678 631L690 634M693 635L704 639M707 640L718 645M720 646L733 647M618 638L630 640M632 640L644 642M647 642L659 644M661 645L674 648M676 649L689 653M691 654L703 660M608 653L621 654M623 655L637 657M639 658L652 662M655 662L668 667" stroke="#3884a0" stroke-width="3.0" stroke-linecap="round" fill="none"/><path d="M809.7 227.7L810.0 228.6M810.0 228.6L810.4 229.5M810.4 229.5L811.1 230.3M811.1 230.3L811.9 231.1M811.9 231.1L813.0 231.8M813.0 231.8L814.2 232.4M814.2 232.4L815.7 233.0M815.7 233.0L817.2 233.5M817.2 233.5L819.0 234.0M819.0 234.0L820.9 234.4M820.9 234.4L822.9 234.7M822.9 234.7L825.1 234.9M825.1 234.9L827.3 235.0M827.3 235.0L829.6 235.0M829.6 235.0L832.0 235.0M832.0 235.0L834.4 234.9M834.4 234.9L836.9 234.7M836.9 234.7L839.4 234.4M839.4 234.4L841.8 234.0M841.8 234.0L844.3 233.6M844.3 233.6L846.6 233.1M846.6 233.1L848.9 232.5M848.9 232.5L851.2 231.9M805.2 280.0L805.2 280.7M805.2 280.7L805.5 281.3M805.5 281.3L806.0 282.0M806.0 282.0L806.9 282.6M806.9 282.6L808.0 283.1M808.0 283.1L809.4 283.7M809.4 283.7L811.0 284.1M811.0 284.1L812.9 284.6M812.9 284.6L814.9 284.9M814.9 284.9L817.2 285.3M817.2 285.3L819.7 285.4M819.7 285.4L822.3 285.5M822.3 285.5L825.1 285.4M825.1 285.4L828.0 285.3M828.0 285.3L831.8 284.9M831.8 284.9L836.1 284.3M836.1 284.3L840.4 283.8M840.4 283.8L844.7 283.2M844.7 283.2L849.1 282.6M849.1 282.6L853.4 282.0M853.4 282.0L857.6 281.4M857.6 281.4L861.7 280.8M861.7 280.8L865.7 280.2M792.8 345.0L793.2 346.1M793.2 346.1L794.1 347.1M794.1 347.1L795.3 348.1M795.3 348.1L796.8 349.0M796.8 349.0L798.8 349.9M798.8 349.9L801.1 350.8M801.1 350.8L803.7 351.6M803.7 351.6L806.6 352.4M806.6 352.4L809.8 353.2M809.8 353.2L813.3 353.9M813.3 353.9L817.0 354.3M817.0 354.3L821.0 354.4M821.0 354.4L825.2 354.3M825.2 354.3L829.5 354.2M829.5 354.2L835.1 353.6M835.1 353.6L841.6 352.9M841.6 352.9L848.1 352.2M848.1 352.2L854.7 351.5M854.7 351.5L861.2 350.8M861.2 350.8L867.7 350.0M867.7 350.0L874.1 349.2M874.1 349.2L880.4 348.5M880.4 348.5L886.5 347.8M780.0 390.0L781.1 391.4M781.1 391.4L782.6 392.7M782.6 392.7L784.5 394.0M784.5 394.0L786.9 395.2M786.9 395.2L789.8 396.4M789.8 396.4L793.0 397.6M793.0 397.6L796.6 398.7M796.6 398.7L800.6 399.9M800.6 399.9L804.9 401.0M804.9 401.0L809.4 402.2M809.4 402.2L814.4 402.9M814.4 402.9L819.6 403.0M819.6 403.0L825.1 402.9M825.1 402.9L830.7 402.7M830.7 402.7L838.1 402.0M838.1 402.0L846.7 401.2M846.7 401.2L855.3 400.4M855.3 400.4L864.0 399.6M864.0 399.6L872.6 398.8M872.6 398.8L881.2 398.0M881.2 398.0L889.7 397.2M889.7 397.2L898.0 396.5M898.0 396.5L906.1 395.8M765.2 425.0L767.1 426.7M767.1 426.7L769.5 428.4M769.5 428.4L772.4 430.0M772.4 430.0L775.8 431.6M775.8 431.6L779.8 433.1M779.8 433.1L784.2 434.6M784.2 434.6L789.1 436.1M789.1 436.1L794.3 437.7M794.3 437.7L799.9 439.4M799.9 439.4L805.8 441.2M805.8 441.2L812.2 442.1M812.2 442.1L819.0 442.3M819.0 442.3L826.0 442.2M826.0 442.2L833.2 441.9M833.2 441.9L842.8 441.2M842.8 441.2L853.8 440.3M853.8 440.3L865.0 439.4M865.0 439.4L876.2 438.6M876.2 438.6L887.4 437.8M887.4 437.8L898.5 437.0M898.5 437.0L909.5 436.3M909.5 436.3L920.3 435.6M920.3 435.6L930.8 435.2M748.3 455.0L751.1 456.9M751.1 456.9L754.4 458.8M754.4 458.8L758.3 460.6M758.3 460.6L762.8 462.4M762.8 462.4L767.9 464.1M767.9 464.1L773.5 465.8M773.5 465.8L779.6 467.6M779.6 467.6L786.0 469.7M786.0 469.7L792.9 471.7M792.9 471.7L799.9 474.1M799.9 474.1L807.7 475.2M807.7 475.2L815.8 475.4M815.8 475.4L824.3 475.1M824.3 475.1L832.9 474.7M832.9 474.7L844.4 473.8M844.4 473.8L857.8 472.7M857.8 472.7L871.3 471.6M871.3 471.6L884.9 470.7M884.9 470.7L898.4 469.8M898.4 469.8L911.8 469.0M911.8 469.0L925.1 468.3M925.1 468.3L938.2 467.7M938.2 467.7L951.0 467.3" stroke="#0018c0" stroke-width="2.6" stroke-dasharray="2.5,1.8" fill="none"/><path d="M810 228L805 280L793 346L781 391L766 426L750 456M810 229L805 281L794 347L782 392L768 428L753 458M811 230L806 282L795 348L783 393L771 429L756 460M811 231L806 282L796 349L786 395L774 431L760 462M812 231L807 283L798 350L788 396L778 432L765 463M814 232L809 284L800 351L791 397L782 434L771 465M815 233L810 284L802 351L795 398L787 435L776 467M816 233L812 285L805 352L799 399L792 437L783 469M818 234L814 285L808 353L803 401L797 439L789 471M820 234L816 285L812 354L807 402L803 441L796 473M822 235L818 286L815 354L812 403L809 442L804 475M824 235L821 286L819 355L817 403L816 443L812 476M826 235L824 286L823 355L822 403L822 443L820 476M828 235L827 286L827 355L828 403L830 442L829 475M831 235L830 285L832 354L834 403L837 442L838 475M833 235L834 285L838 354L842 402L848 441L851 474M836 235L838 284L845 353L851 401L859 440L865 473M838 235L843 284L851 352L860 400L871 439L878 472M841 234L847 283L858 351L868 400L882 439L892 471M843 234L851 283L864 351L877 399L893 438L905 470M845 233L855 282L871 350L885 398L904 437L918 469M848 233L860 281L877 349L894 397L915 436L932 468M850 232L864 281L883 349L902 397L926 436L945 468M852 232L868 280L889 348L910 396L936 435L957 468M854 231L871 280L895 347L918 395L946 435L970 468M856 230L875 279L901 346L925 394L955 433L981 465M858 229L878 278L905 344L930 391L962 429L988 459M860 228L881 277L909 342L935 388L968 425L996 454M861 227L883 276L913 341L940 385L974 421L1003 449M863 226L885 275L916 339L945 383L980 418L1010 445M864 226L887 275L919 338L949 381L986 415L1017 441M865 225L889 274L922 336L953 379L991 413L1023 438M865 224L890 273L924 335L956 377L996 410L1030 435M866 223L891 273L926 334L959 376L1000 408L1035 432M866 222L892 272L928 333L962 374L1004 407L1041 430M866 221L893 272L929 332L964 373L1007 405L1045 429" stroke="#000a60" stroke-width="1.0" fill="none" opacity="0.35"/><path d="M881 398L899 437L912 469L930 498L936 522L938 545L940 566L941 585L942 603L941 620L938 636L932 651L923 665L916 678L914 690L912 701L911 711L909 720L908 728L907 736L905 744M890 397L909 436L925 468L946 497L954 521L958 545L962 566L964 585L966 603L966 620L964 637L960 652L952 666L946 679L944 691L943 703L941 712L940 721L939 729L938 737L936 746M898 396L920 436L938 468L962 497L972 521L979 544L983 566L987 586L990 604L991 622L991 638L987 654L981 668L975 682L974 694L973 705L972 715L971 724L969 732L968 740L967 748M906 396L931 435L951 467L978 497L990 521L998 545L1005 567L1010 587L1013 606L1016 624L1016 641L1014 657L1009 672L1005 686L1004 698L1003 709L1002 719L1001 728L1000 736L999 744L997 752M914 395L941 435L963 467L994 497L1008 522L1018 547L1025 569L1032 590L1037 609L1040 627L1042 645L1041 661L1037 677L1034 691L1034 704L1033 715L1032 725L1031 734L1030 742L1029 750L1028 758M922 395L951 434L976 467L1009 497L1025 522L1037 547L1046 570L1053 591L1060 610L1065 629L1067 647L1067 664L1065 680L1063 694L1063 707L1063 718L1062 728L1061 737L1060 744L1060 752L1058 760M928 392L959 431L985 462L1020 490L1037 515L1050 538L1060 560L1067 580L1074 598L1079 616L1082 633L1083 649L1081 663L1079 677L1079 689L1079 699L1078 708L1077 716L1076 723L1075 730L1073 737M933 389L965 426L992 456L1029 482L1046 505L1059 527L1069 547L1077 566L1084 583L1089 600L1092 615L1093 629L1091 642L1089 654L1089 665L1088 674L1087 682L1085 689L1084 695L1082 701L1080 707M938 386L971 423L999 451L1037 476L1056 498L1070 519L1081 538L1089 556L1096 572L1102 588L1105 602L1106 615L1105 628L1103 638L1103 648L1102 656L1101 664L1100 670L1098 675L1097 681L1095 686M942 384L977 419L1007 447L1046 471L1066 492L1081 512L1093 530L1102 547L1109 563L1116 577L1120 591L1121 603L1121 614L1120 624L1120 633L1119 641L1118 647L1116 652L1115 657L1114 662L1112 667M947 382L983 416L1013 443L1055 465L1076 486L1092 505L1105 523L1115 539L1123 554L1130 568L1135 581L1137 592L1138 603L1137 612L1138 620L1137 627L1136 632L1135 637L1134 641L1132 646L1131 650M951 380L988 414L1020 439L1063 461L1086 481L1103 500L1117 517L1128 533L1137 547L1145 560L1151 572L1154 583L1156 593L1156 601L1157 609L1157 615L1156 620L1155 624L1154 628L1153 631L1151 635M954 378L993 411L1027 436L1072 457L1096 477L1114 495L1129 512L1141 527L1151 541L1160 554L1167 565L1171 575L1174 585L1175 592L1177 599L1177 605L1177 609L1176 612L1175 615L1175 619L1173 621M957 376L998 409L1032 433L1079 454L1105 473L1125 491L1141 508L1154 522L1165 536L1175 549L1183 559L1189 569L1193 578L1195 585L1197 592L1198 596L1198 600L1198 603L1198 605L1197 608L1196 610M960 375L1002 408L1038 431L1087 452L1114 471L1135 488L1152 505L1166 519L1179 532L1190 545L1199 555L1206 565L1212 573L1215 580L1218 586L1220 590L1221 593L1221 595L1221 597L1221 599L1220 601M963 374L1006 406L1043 429L1094 449L1122 468L1145 486L1163 502L1179 516L1193 530L1205 542L1215 552L1224 561L1231 569L1235 575L1239 581L1242 585L1243 587L1243 589L1244 590L1244 592L1244 592M965 373L1009 405L1047 428L1100 448L1129 467L1154 485L1174 501L1190 515L1206 528L1219 540L1231 550L1241 559L1249 567L1255 573L1260 578L1263 581L1265 583L1266 584L1267 585L1268 586L1268 586" stroke="#4a78ff" stroke-width="1.6" fill="none" opacity="0.55" stroke-linejoin="round"/><path d="M1259,338 L1250,410 L1240,480 L1229,560" stroke="#f0d000" stroke-width="5" stroke-dasharray="7,9" fill="none"/></g><path d="M508.0,661.0 L504.7,666.2 L500.0,673.6 L494.8,681.9 L490.0,690.0 L485.5,698.3 L480.9,707.3 L476.8,715.4 L474.0,721.0" stroke="#60b400" stroke-width="6" fill="none" stroke-linejoin="round"/><path d="M508.0,661.0 L504.7,666.2 L500.0,673.6 L494.8,681.9 L490.0,690.0 L485.5,698.3 L480.9,707.3 L476.8,715.4 L474.0,721.0" stroke="#80f000" stroke-width="3.5" fill="none" stroke-linejoin="round"/><path d="M474.0,721.0 L481.2,721.4 L491.3,722.0 L503.8,722.8 L518.0,724.0 L535.3,725.5 L555.5,727.2 L575.7,729.4 L593.0,732.0 L606.5,735.3 L617.8,739.2 L627.7,743.2 L637.0,747.0 L646.2,750.7 L654.8,754.4 L661.9,757.7 L667.0,760.0" stroke="#a2b700" stroke-width="8" fill="none" stroke-linejoin="round"/><path d="M474.0,721.0 L481.2,721.4 L491.3,722.0 L503.8,722.8 L518.0,724.0 L535.3,725.5 L555.5,727.2 L575.7,729.4 L593.0,732.0 L606.5,735.3 L617.8,739.2 L627.7,743.2 L637.0,747.0 L646.2,750.7 L654.8,754.4 L661.9,757.7 L667.0,760.0" stroke="#d8f400" stroke-width="5.5" fill="none" stroke-linejoin="round"/><path d="M667.0,760.0 L681.2,758.1 L701.5,755.4 L724.6,752.5 L747.0,750.0 L768.4,748.1 L790.5,746.3 L812.8,744.9 L835.0,744.0 L857.5,743.7 L880.4,743.8 L902.6,744.3 L923.0,745.0 L940.6,745.9 L956.3,746.9 L971.6,748.3 L988.0,750.0 L1007.8,752.4 L1029.6,755.3 L1049.3,758.1 L1063.0,760.0" stroke="#96b700" stroke-width="8" fill="none" stroke-linejoin="round"/><path d="M667.0,760.0 L681.2,758.1 L701.5,755.4 L724.6,752.5 L747.0,750.0 L768.4,748.1 L790.5,746.3 L812.8,744.9 L835.0,744.0 L857.5,743.7 L880.4,743.8 L902.6,744.3 L923.0,745.0 L940.6,745.9 L956.3,746.9 L971.6,748.3 L988.0,750.0 L1007.8,752.4 L1029.6,755.3 L1049.3,758.1 L1063.0,760.0" stroke="#c8f400" stroke-width="5.5" fill="none" stroke-linejoin="round"/><path d="M1063.0,760.0 L1065.3,751.2 L1068.6,738.6 L1072.5,724.9 L1077.0,713.0 L1082.0,703.7 L1087.5,695.4 L1093.5,687.7 L1100.0,680.0 L1106.8,672.2 L1113.9,664.6 L1121.6,657.2 L1130.0,650.0 L1139.5,642.8 L1149.8,635.6 L1160.3,628.9 L1170.0,623.0 L1178.2,618.3 L1185.4,614.6 L1193.2,611.0 L1203.0,607.0 L1216.0,601.9 L1231.1,596.2 L1246.4,591.0 L1260.0,587.0 L1270.6,584.9 L1279.4,583.9 L1288.5,583.6 L1300.0,583.0 L1314.9,582.0 L1331.9,580.9 L1349.7,580.2 L1367.0,580.0 L1383.5,580.5 L1400.0,581.4 L1416.5,582.9 L1433.0,585.0 L1449.7,587.9 L1466.4,591.6 L1483.2,595.7 L1500.0,600.0 L1516.0,603.9 L1531.6,607.6 L1548.1,612.6 L1567.0,620.0 L1591.4,632.2 L1619.7,647.8 L1645.9,662.7 L1664.0,673.0" stroke="#7eb400" stroke-width="8" fill="none" stroke-linejoin="round"/><path d="M1063.0,760.0 L1065.3,751.2 L1068.6,738.6 L1072.5,724.9 L1077.0,713.0 L1082.0,703.7 L1087.5,695.4 L1093.5,687.7 L1100.0,680.0 L1106.8,672.2 L1113.9,664.6 L1121.6,657.2 L1130.0,650.0 L1139.5,642.8 L1149.8,635.6 L1160.3,628.9 L1170.0,623.0 L1178.2,618.3 L1185.4,614.6 L1193.2,611.0 L1203.0,607.0 L1216.0,601.9 L1231.1,596.2 L1246.4,591.0 L1260.0,587.0 L1270.6,584.9 L1279.4,583.9 L1288.5,583.6 L1300.0,583.0 L1314.9,582.0 L1331.9,580.9 L1349.7,580.2 L1367.0,580.0 L1383.5,580.5 L1400.0,581.4 L1416.5,582.9 L1433.0,585.0 L1449.7,587.9 L1466.4,591.6 L1483.2,595.7 L1500.0,600.0 L1516.0,603.9 L1531.6,607.6 L1548.1,612.6 L1567.0,620.0 L1591.4,632.2 L1619.7,647.8 L1645.9,662.7 L1664.0,673.0" stroke="#a8f000" stroke-width="5.5" fill="none" stroke-linejoin="round"/><path d="M1664.0,673.0 L1660.8,660.8 L1656.0,643.0 L1651.2,625.2 L1648.0,613.0" stroke="#78b400" stroke-width="6" fill="none" stroke-linejoin="round"/><path d="M1664.0,673.0 L1660.8,660.8 L1656.0,643.0 L1651.2,625.2 L1648.0,613.0" stroke="#a0f000" stroke-width="3.5" fill="none" stroke-linejoin="round"/><line x1="1648" y1="613" x2="1625" y2="720" stroke="#1ca227" stroke-width="8" stroke-linecap="butt"/><line x1="1648" y1="613" x2="1625" y2="720" stroke="#28e838" stroke-width="6" stroke-linecap="butt"/><line x1="1647.0" y1="612.8" x2="1624.0" y2="719.8" stroke="#68ee73" stroke-width="2.0" opacity="0.7"/><circle cx="1625" cy="720" r="4.0" fill="#ff1a00"/><line x1="1648" y1="613" x2="1695" y2="711" stroke="#5aa200" stroke-width="6" stroke-linecap="butt"/><line x1="1648" y1="613" x2="1695" y2="711" stroke="#80e800" stroke-width="4" stroke-linecap="butt"/><line x1="1647.3" y1="613.3" x2="1694.3" y2="711.3" stroke="#a6ee4c" stroke-width="1.4" opacity="0.7"/><circle cx="1695" cy="711" r="3.0" fill="#ff1a00"/><line x1="1648" y1="613" x2="1711" y2="718" stroke="#ab9200" stroke-width="9" stroke-linecap="butt"/><line x1="1648" y1="613" x2="1711" y2="718" stroke="#f4d000" stroke-width="7" stroke-linecap="butt"/><line x1="1647.0" y1="613.6" x2="1710.0" y2="718.6" stroke="#f7de4c" stroke-width="2.2" opacity="0.7"/><circle cx="1711" cy="718" r="4.5" fill="#ff1a00"/><line x1="474" y1="721" x2="410" y2="828" stroke="#a8540b" stroke-width="9" stroke-linecap="butt"/><line x1="474" y1="721" x2="410" y2="828" stroke="#f07810" stroke-width="7" stroke-linecap="butt"/><line x1="473.0" y1="720.4" x2="409.0" y2="827.4" stroke="#f4a057" stroke-width="2.2" opacity="0.7"/><circle cx="410" cy="828" r="4.5" fill="#ff1a00"/><line x1="508" y1="661" x2="427" y2="834" stroke="#27a227" stroke-width="9" stroke-linecap="butt"/><line x1="508" y1="661" x2="427" y2="834" stroke="#38e838" stroke-width="7" stroke-linecap="butt"/><line x1="506.9" y1="660.5" x2="425.9" y2="833.5" stroke="#73ee73" stroke-width="2.2" opacity="0.7"/><circle cx="427" cy="834" r="4.5" fill="#ff1a00"/><line x1="474" y1="721" x2="496" y2="827" stroke="#0d625a" stroke-width="9" stroke-linecap="butt"/><line x1="474" y1="721" x2="496" y2="827" stroke="#128c80" stroke-width="7" stroke-linecap="butt"/><line x1="472.8" y1="721.2" x2="494.8" y2="827.2" stroke="#59aea6" stroke-width="2.2" opacity="0.7"/><circle cx="496" cy="827" r="4.5" fill="#ff1a00"/><line x1="667" y1="760" x2="616" y2="872" stroke="#76a800" stroke-width="8" stroke-linecap="butt"/><line x1="667" y1="760" x2="616" y2="872" stroke="#a8f000" stroke-width="6" stroke-linecap="butt"/><line x1="666.0" y1="759.6" x2="615.0" y2="871.6" stroke="#c2f44c" stroke-width="2.0" opacity="0.7"/><circle cx="616" cy="872" r="4.0" fill="#ff1a00"/><line x1="667" y1="760" x2="678" y2="865" stroke="#0e0eb2" stroke-width="8" stroke-linecap="butt"/><line x1="667" y1="760" x2="678" y2="865" stroke="#1414ff" stroke-width="6" stroke-linecap="butt"/><line x1="666.0" y1="760.1" x2="677.0" y2="865.1" stroke="#5a5aff" stroke-width="2.0" opacity="0.7"/><circle cx="678" cy="865" r="4.0" fill="#ff1a00"/><line x1="667" y1="760" x2="653" y2="875" stroke="#b20e00" stroke-width="9" stroke-linecap="butt"/><line x1="667" y1="760" x2="653" y2="875" stroke="#ff1400" stroke-width="7" stroke-linecap="butt"/><line x1="665.8" y1="759.9" x2="651.8" y2="874.9" stroke="#ff5a4c" stroke-width="2.2" opacity="0.7"/><circle cx="653" cy="875" r="4.5" fill="#ff1a00"/><line x1="1063" y1="760" x2="1045" y2="863" stroke="#27a216" stroke-width="8" stroke-linecap="butt"/><line x1="1063" y1="760" x2="1045" y2="863" stroke="#38e820" stroke-width="6" stroke-linecap="butt"/><line x1="1062.0" y1="759.8" x2="1044.0" y2="862.8" stroke="#73ee62" stroke-width="2.0" opacity="0.7"/><circle cx="1045" cy="863" r="4.0" fill="#ff1a00"/><line x1="1063" y1="760" x2="1112" y2="873" stroke="#7ba800" stroke-width="8" stroke-linecap="butt"/><line x1="1063" y1="760" x2="1112" y2="873" stroke="#b0f000" stroke-width="6" stroke-linecap="butt"/><line x1="1062.0" y1="760.4" x2="1111.0" y2="873.4" stroke="#c7f44c" stroke-width="2.0" opacity="0.7"/><circle cx="1112" cy="873" r="4.0" fill="#ff1a00"/><line x1="1063" y1="760" x2="1075" y2="877" stroke="#65a800" stroke-width="8" stroke-linecap="butt"/><line x1="1063" y1="760" x2="1075" y2="877" stroke="#90f000" stroke-width="6" stroke-linecap="butt"/><line x1="1062.0" y1="760.1" x2="1074.0" y2="877.1" stroke="#b1f44c" stroke-width="2.0" opacity="0.7"/><circle cx="1075" cy="877" r="4.0" fill="#ff1a00"/><line x1="1664" y1="673" x2="1635" y2="774" stroke="#27a827" stroke-width="9" stroke-linecap="butt"/><line x1="1664" y1="673" x2="1635" y2="774" stroke="#38f038" stroke-width="7" stroke-linecap="butt"/><line x1="1662.8" y1="672.7" x2="1633.8" y2="773.7" stroke="#73f473" stroke-width="2.2" opacity="0.7"/><circle cx="1635" cy="774" r="4.5" fill="#ff1a00"/><line x1="1664" y1="673" x2="1728" y2="777" stroke="#12654e" stroke-width="9" stroke-linecap="butt"/><line x1="1664" y1="673" x2="1728" y2="777" stroke="#1a9070" stroke-width="7" stroke-linecap="butt"/><line x1="1663.0" y1="673.6" x2="1727.0" y2="777.6" stroke="#5eb19a" stroke-width="2.2" opacity="0.7"/><circle cx="1728" cy="777" r="4.5" fill="#ff1a00"/><line x1="1664" y1="673" x2="1707" y2="784" stroke="#b20e00" stroke-width="10" stroke-linecap="butt"/><line x1="1664" y1="673" x2="1707" y2="784" stroke="#ff1400" stroke-width="8" stroke-linecap="butt"/><line x1="1662.7" y1="673.5" x2="1705.7" y2="784.5" stroke="#ff5a4c" stroke-width="2.5" opacity="0.7"/><circle cx="1707" cy="784" r="5.0" fill="#ff1a00"/><path d="M866.3,220.3 L866.1,222.0 L865.3,223.7 L863.8,225.4 L861.7,227.1 L858.9,228.7 L855.7,230.2 L852.0,231.6 L848.0,232.8 L843.8,233.7 L839.4,234.4 L834.9,234.9 L830.6,235.1 L826.4,235.0 L822.5,234.6 L819.0,234.0 L815.9,233.1 L813.4,232.0 L811.6,230.8 L810.3,229.3 L809.7,227.7 L809.9,226.0 L810.7,224.3 L812.2,222.6 L814.3,220.9 L817.1,219.3 L820.3,217.8 L824.0,216.4 L828.0,215.2 L832.2,214.3 L836.6,213.6 L841.1,213.1 L845.4,212.9 L849.6,213.0 L853.5,213.4 L857.0,214.0 L860.1,214.9 L862.6,216.0 L864.4,217.2 L865.7,218.7 L866.3,220.3Z" fill="#ff2200" stroke="#d01000" stroke-width="1.5"/><path d="M835,215 L842,233 M818,227 L858,221" stroke="#c81000" stroke-width="2"/><path d="M1306.5,224.6 L1306.1,224.9 L1305.1,225.0 L1303.3,225.0 L1301.0,224.9 L1298.2,224.6 L1294.9,224.2 L1291.1,223.7 L1287.1,223.1 L1282.9,222.4 L1278.6,221.7 L1274.3,220.8 L1270.1,220.0 L1266.1,219.1 L1262.5,218.3 L1259.2,217.4 L1256.5,216.6 L1254.3,215.9 L1252.7,215.3 L1251.7,214.8 L1251.5,214.4 L1251.9,214.1 L1252.9,214.0 L1254.7,214.0 L1257.0,214.1 L1259.8,214.4 L1263.1,214.8 L1266.9,215.3 L1270.9,215.9 L1275.1,216.6 L1279.4,217.3 L1283.7,218.2 L1287.9,219.0 L1291.9,219.9 L1295.5,220.7 L1298.8,221.6 L1301.5,222.4 L1303.7,223.1 L1305.3,223.7 L1306.3,224.2 L1306.5,224.6Z" fill="#f01800" stroke="#c81000" stroke-width="1.2"/></g>
</svg>
<div style="position:absolute;left:1216px;top:863px;width:633px;height:141px;border:1px solid #000;background:#fff"></div><div style="position:absolute;left:1221.5px;top:866.0px;height:17px;line-height:17px;font-size:13px;color:#000;white-space:nowrap;letter-spacing:-0.15px;">Membrane Stress (force/width)</div><div style="position:absolute;left:1221.5px;top:891px;width:80px;height:16px;background:linear-gradient(90deg,#ff9c00,#ff6a00 45%,#ff1a00)"></div><div style="position:absolute;left:1317.5px;top:887.0px;height:17px;line-height:17px;font-size:13px;color:#000;white-space:nowrap;letter-spacing:-0.15px;">33.28 - 41.60</div><div style="position:absolute;left:1221.5px;top:913px;width:80px;height:16px;background:linear-gradient(90deg,#c8f800,#f8ff00 30%,#ffe000 60%,#ff9c10)"></div><div style="position:absolute;left:1317.5px;top:909.0px;height:17px;line-height:17px;font-size:13px;color:#000;white-space:nowrap;letter-spacing:-0.15px;">24.96 - 33.28</div><div style="position:absolute;left:1221.5px;top:935px;width:80px;height:16px;background:linear-gradient(90deg,#20f000,#60f800 45%,#c8ff00)"></div><div style="position:absolute;left:1317.5px;top:931.0px;height:17px;line-height:17px;font-size:13px;color:#000;white-space:nowrap;letter-spacing:-0.15px;">16.64 - 24.96</div><div style="position:absolute;left:1221.5px;top:957px;width:80px;height:16px;background:linear-gradient(90deg,#009060,#00c040 45%,#00ff10)"></div><div style="position:absolute;left:1317.5px;top:953.0px;height:17px;line-height:17px;font-size:13px;color:#000;white-space:nowrap;letter-spacing:-0.15px;">8.32 - 16.64</div><div style="position:absolute;left:1221.5px;top:979px;width:80px;height:16px;background:linear-gradient(90deg,#0000ff,#0840b0 50%,#008080)"></div><div style="position:absolute;left:1317.5px;top:975.0px;height:17px;line-height:17px;font-size:13px;color:#000;white-space:nowrap;letter-spacing:-0.15px;">0.00 - 8.32</div><div style="position:absolute;left:1429.5px;top:866.0px;height:17px;line-height:17px;font-size:13px;color:#000;white-space:nowrap;letter-spacing:-0.15px;">Cable Force (force)</div><div style="position:absolute;left:1429.5px;top:891px;width:80px;height:16px;background:linear-gradient(90deg,#ff9c00,#ff6a00 45%,#ff1a00)"></div><div style="position:absolute;left:1525px;top:887.0px;height:17px;line-height:17px;font-size:13px;color:#000;white-space:nowrap;letter-spacing:-0.15px;">64.96 - 81.20</div><div style="position:absolute;left:1429.5px;top:913px;width:80px;height:16px;background:linear-gradient(90deg,#c8f800,#f8ff00 30%,#ffe000 60%,#ff9c10)"></div><div style="position:absolute;left:1525px;top:909.0px;height:17px;line-height:17px;font-size:13px;color:#000;white-space:nowrap;letter-spacing:-0.15px;">48.72 - 64.96</div><div style="position:absolute;left:1429.5px;top:935px;width:80px;height:16px;background:linear-gradient(90deg,#20f000,#60f800 45%,#c8ff00)"></div><div style="position:absolute;left:1525px;top:931.0px;height:17px;line-height:17px;font-size:13px;color:#000;white-space:nowrap;letter-spacing:-0.15px;">32.48 - 48.72</div><div style="position:absolute;left:1429.5px;top:957px;width:80px;height:16px;background:linear-gradient(90deg,#009060,#00c040 45%,#00ff10)"></div><div style="position:absolute;left:1525px;top:953.0px;height:17px;line-height:17px;font-size:13px;color:#000;white-space:nowrap;letter-spacing:-0.15px;">16.24 - 32.48</div><div style="position:absolute;left:1429.5px;top:979px;width:80px;height:16px;background:linear-gradient(90deg,#0000ff,#0840b0 50%,#008080)"></div><div style="position:absolute;left:1525px;top:975.0px;height:17px;line-height:17px;font-size:13px;color:#000;white-space:nowrap;letter-spacing:-0.15px;">0.00 - 16.24</div><div style="position:absolute;left:1638px;top:866.0px;height:17px;line-height:17px;font-size:13px;color:#000;white-space:nowrap;letter-spacing:-0.15px;">Strut Force (force)</div><div style="position:absolute;left:1638px;top:891px;width:80px;height:16px;background:linear-gradient(90deg,#ff9c00,#ff6a00 45%,#ff1a00)"></div><div style="position:absolute;left:1733px;top:887.0px;height:17px;line-height:17px;font-size:13px;color:#000;white-space:nowrap;letter-spacing:-0.15px;">-14.38 - 4.99</div><div style="position:absolute;left:1638px;top:913px;width:80px;height:16px;background:linear-gradient(90deg,#c8f800,#f8ff00 30%,#ffe000 60%,#ff9c10)"></div><div style="position:absolute;left:1733px;top:909.0px;height:17px;line-height:17px;font-size:13px;color:#000;white-space:nowrap;letter-spacing:-0.15px;">-33.74 - -14.38</div><div style="position:absolute;left:1638px;top:935px;width:80px;height:16px;background:linear-gradient(90deg,#20f000,#60f800 45%,#c8ff00)"></div><div style="position:absolute;left:1733px;top:931.0px;height:17px;line-height:17px;font-size:13px;color:#000;white-space:nowrap;letter-spacing:-0.15px;">-53.10 - -33.74</div><div style="position:absolute;left:1638px;top:957px;width:80px;height:16px;background:linear-gradient(90deg,#009060,#00c040 45%,#00ff10)"></div><div style="position:absolute;left:1733px;top:953.0px;height:17px;line-height:17px;font-size:13px;color:#000;white-space:nowrap;letter-spacing:-0.15px;">-72.47 - -53.10</div><div style="position:absolute;left:1638px;top:979px;width:80px;height:16px;background:linear-gradient(90deg,#0000ff,#0840b0 50%,#008080)"></div><div style="position:absolute;left:1733px;top:975.0px;height:17px;line-height:17px;font-size:13px;color:#000;white-space:nowrap;letter-spacing:-0.15px;">-91.83 - -72.47</div>
</div>
</body></html>
